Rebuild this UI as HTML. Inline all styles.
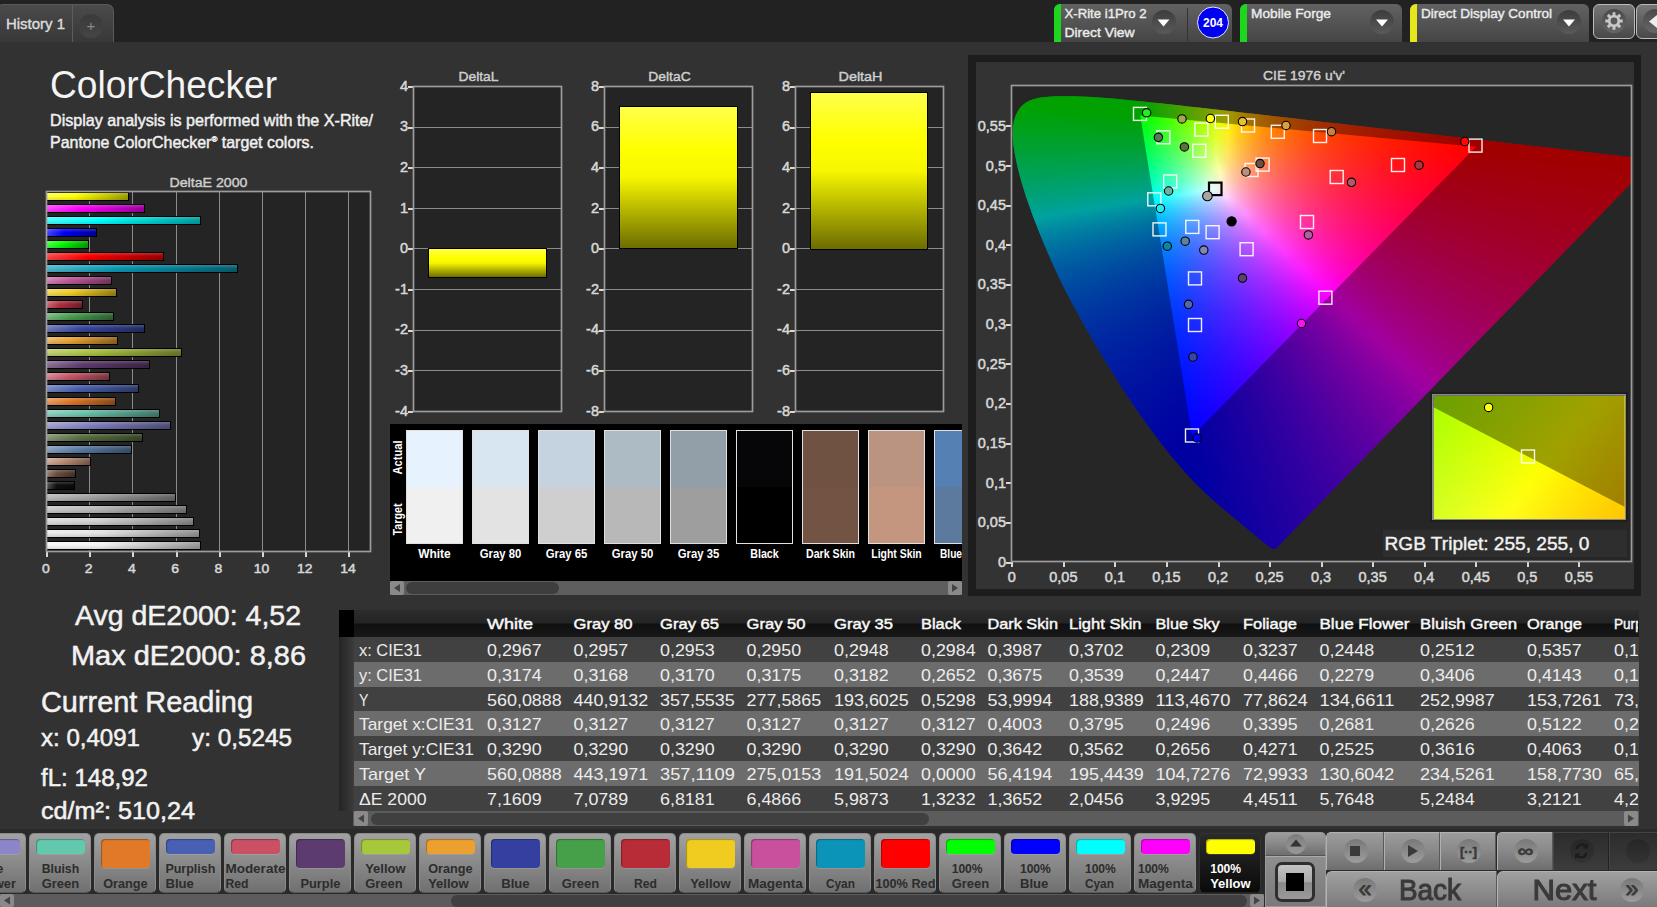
<!DOCTYPE html>
<html><head><meta charset="utf-8"><title>ColorChecker</title>
<style>
html,body{margin:0;padding:0;background:#323232;overflow:hidden}
body{width:1657px;height:907px;position:relative;font-family:"Liberation Sans", sans-serif}
#h div{position:absolute;box-sizing:border-box}
#h{position:absolute;left:0;top:0;width:1657px;height:907px;overflow:hidden}
svg#o{position:absolute;left:0;top:0}
svg text{font-family:"Liberation Sans", sans-serif;white-space:pre}
svg .bl{filter:blur(0.6px)}
</style></head><body>
<div id="h">
<div style="left:0px;top:0px;width:1657px;height:42px;background:#222"></div>
<div style="left:-4px;top:4px;width:118px;height:38px;background:linear-gradient(#4a4a4a,#383838);border:1px solid #5a5a5a;border-bottom:none;border-radius:7px 7px 0 0"></div>
<div style="left:72px;top:5px;width:1px;height:37px;background:#5c5c5c"></div>
<div style="left:79px;top:14px;width:24px;height:24px;border-radius:12px;background:linear-gradient(#3a3a3a,#454545)"></div>
<div style="left:1054px;top:4px;width:178px;height:38px;background:linear-gradient(#626262,#454545);border-radius:6px 6px 0 0"></div>
<div style="left:1054px;top:4px;width:7px;height:38px;background:#1ed61e;border-radius:6px 0 0 0"></div>
<div style="left:1151.5px;top:10px;width:24px;height:24px;border-radius:12px;background:linear-gradient(#3c3c3c,#5a5a5a)"></div>
<div style="left:1187px;top:8px;width:1px;height:34px;background:#333"></div>
<div style="left:1240px;top:4px;width:162px;height:38px;background:linear-gradient(#626262,#454545);border-radius:6px 6px 0 0"></div>
<div style="left:1240px;top:4px;width:7px;height:38px;background:#1ed61e;border-radius:6px 0 0 0"></div>
<div style="left:1370px;top:10px;width:24px;height:24px;border-radius:12px;background:linear-gradient(#3c3c3c,#5a5a5a)"></div>
<div style="left:1410px;top:4px;width:179px;height:38px;background:linear-gradient(#626262,#454545);border-radius:6px 6px 0 0"></div>
<div style="left:1410px;top:4px;width:7px;height:38px;background:#e6e61a;border-radius:6px 0 0 0"></div>
<div style="left:1557px;top:10px;width:24px;height:24px;border-radius:12px;background:linear-gradient(#3c3c3c,#5a5a5a)"></div>
<div style="left:1593px;top:4px;width:42px;height:35px;background:linear-gradient(#777,#484848);border:1px solid #bbb;border-radius:6px"></div>
<div style="left:1602px;top:9px;width:24px;height:24px;border-radius:12px;background:linear-gradient(#4a4a4a,#666)"></div>
<div style="left:1636px;top:4px;width:30px;height:35px;background:linear-gradient(#777,#484848);border:1px solid #bbb;border-radius:6px"></div>
<div style="left:1643px;top:9px;width:24px;height:24px;border-radius:12px;background:linear-gradient(#4a4a4a,#666)"></div>
<div style="left:46px;top:191px;width:325px;height:361px;background:#242424"></div>
<div style="left:89px;top:192px;width:1px;height:359px;background:#8c8c8c"></div>
<div style="left:132px;top:192px;width:1px;height:359px;background:#8c8c8c"></div>
<div style="left:176px;top:192px;width:1px;height:359px;background:#8c8c8c"></div>
<div style="left:219px;top:192px;width:1px;height:359px;background:#8c8c8c"></div>
<div style="left:262px;top:192px;width:1px;height:359px;background:#8c8c8c"></div>
<div style="left:305px;top:192px;width:1px;height:359px;background:#8c8c8c"></div>
<div style="left:348px;top:192px;width:1px;height:359px;background:#8c8c8c"></div>
<div style="left:45.5px;top:552px;width:2px;height:5px;background:#d8d8d8"></div>
<div style="left:88.5px;top:552px;width:2px;height:5px;background:#d8d8d8"></div>
<div style="left:131.5px;top:552px;width:2px;height:5px;background:#d8d8d8"></div>
<div style="left:175.5px;top:552px;width:2px;height:5px;background:#d8d8d8"></div>
<div style="left:218.5px;top:552px;width:2px;height:5px;background:#d8d8d8"></div>
<div style="left:261.5px;top:552px;width:2px;height:5px;background:#d8d8d8"></div>
<div style="left:304.5px;top:552px;width:2px;height:5px;background:#d8d8d8"></div>
<div style="left:347.5px;top:552px;width:2px;height:5px;background:#d8d8d8"></div>
<div style="left:47px;top:192px;width:81.88px;height:9px;border-left:none !important;background:linear-gradient(rgba(255,255,255,.18),rgba(255,255,255,0) 45%,rgba(0,0,0,.12)),linear-gradient(90deg,#ffff47,#ffff00 35%,#9e9e00);border:1px solid #000"></div>
<div style="left:47px;top:204.03px;width:97.864px;height:9px;border-left:none !important;background:linear-gradient(rgba(255,255,255,.18),rgba(255,255,255,0) 45%,rgba(0,0,0,.12)),linear-gradient(90deg,#ff47ff,#ff00ff 35%,#9e009e);border:1px solid #000"></div>
<div style="left:47px;top:216.06px;width:153.808px;height:9px;border-left:none !important;background:linear-gradient(rgba(255,255,255,.18),rgba(255,255,255,0) 45%,rgba(0,0,0,.12)),linear-gradient(90deg,#47ffff,#00ffff 35%,#009e9e);border:1px solid #000"></div>
<div style="left:47px;top:228.09px;width:49.912px;height:9px;border-left:none !important;background:linear-gradient(rgba(255,255,255,.18),rgba(255,255,255,0) 45%,rgba(0,0,0,.12)),linear-gradient(90deg,#4747ff,#0000ff 35%,#00009e);border:1px solid #000"></div>
<div style="left:47px;top:240.12px;width:41.92px;height:9px;border-left:none !important;background:linear-gradient(rgba(255,255,255,.18),rgba(255,255,255,0) 45%,rgba(0,0,0,.12)),linear-gradient(90deg,#47ff47,#00ff00 35%,#009e00);border:1px solid #000"></div>
<div style="left:47px;top:252.15px;width:117.304px;height:9px;border-left:none !important;background:linear-gradient(rgba(255,255,255,.18),rgba(255,255,255,0) 45%,rgba(0,0,0,.12)),linear-gradient(90deg,#ff4747,#ff0000 35%,#9e0000);border:1px solid #000"></div>
<div style="left:47px;top:264.18px;width:191.176px;height:9px;border-left:none !important;background:linear-gradient(rgba(255,255,255,.18),rgba(255,255,255,0) 45%,rgba(0,0,0,.12)),linear-gradient(90deg,#4fb7cc,#0a9bb8 35%,#066072);border:1px solid #000"></div>
<div style="left:47px;top:276.21px;width:64.6px;height:9px;border-left:none !important;background:linear-gradient(rgba(255,255,255,.18),rgba(255,255,255,0) 45%,rgba(0,0,0,.12)),linear-gradient(90deg,#d285b8,#c0569c 35%,#773561);border:1px solid #000"></div>
<div style="left:47px;top:288.24px;width:70px;height:9px;border-left:none !important;background:linear-gradient(rgba(255,255,255,.18),rgba(255,255,255,0) 45%,rgba(0,0,0,.12)),linear-gradient(90deg,#f4db61,#f0cd24 35%,#957f16);border:1px solid #000"></div>
<div style="left:47px;top:300.27px;width:36.304px;height:9px;border-left:none !important;background:linear-gradient(rgba(255,255,255,.18),rgba(255,255,255,0) 45%,rgba(0,0,0,.12)),linear-gradient(90deg,#cc6a75,#b83040 35%,#721e28);border:1px solid #000"></div>
<div style="left:47px;top:312.3px;width:66.76px;height:9px;border-left:none !important;background:linear-gradient(rgba(255,255,255,.18),rgba(255,255,255,0) 45%,rgba(0,0,0,.12)),linear-gradient(90deg,#7bbb81,#48a050 35%,#2d6332);border:1px solid #000"></div>
<div style="left:47px;top:324.33px;width:97.864px;height:9px;border-left:none !important;background:linear-gradient(rgba(255,255,255,.18),rgba(255,255,255,0) 45%,rgba(0,0,0,.12)),linear-gradient(90deg,#707bbb,#3848a0 35%,#232d63);border:1px solid #000"></div>
<div style="left:47px;top:336.36px;width:70.864px;height:9px;border-left:none !important;background:linear-gradient(rgba(255,255,255,.18),rgba(255,255,255,0) 45%,rgba(0,0,0,.12)),linear-gradient(90deg,#eebb6a,#e8a030 35%,#90631e);border:1px solid #000"></div>
<div style="left:47px;top:348.39px;width:134.8px;height:9px;border-left:none !important;background:linear-gradient(rgba(255,255,255,.18),rgba(255,255,255,0) 45%,rgba(0,0,0,.12)),linear-gradient(90deg,#c0d275,#a8c040 35%,#687728);border:1px solid #000"></div>
<div style="left:47px;top:360.42px;width:103.48px;height:9px;border-left:none !important;background:linear-gradient(rgba(255,255,255,.18),rgba(255,255,255,0) 45%,rgba(0,0,0,.12)),linear-gradient(90deg,#8d7398,#603c70 35%,#3c2545);border:1px solid #000"></div>
<div style="left:47px;top:372.45px;width:63.304px;height:9px;border-left:none !important;background:linear-gradient(rgba(255,255,255,.18),rgba(255,255,255,0) 45%,rgba(0,0,0,.12)),linear-gradient(90deg,#d78792,#c85868 35%,#7c3740);border:1px solid #000"></div>
<div style="left:47px;top:384.48px;width:92.464px;height:9px;border-left:none !important;background:linear-gradient(rgba(255,255,255,.18),rgba(255,255,255,0) 45%,rgba(0,0,0,.12)),linear-gradient(90deg,#7b8dc6,#4860b0 35%,#2d3c6d);border:1px solid #000"></div>
<div style="left:47px;top:396.51px;width:69.136px;height:9px;border-left:none !important;background:linear-gradient(rgba(255,255,255,.18),rgba(255,255,255,0) 45%,rgba(0,0,0,.12)),linear-gradient(90deg,#e99e64,#e07828 35%,#8b4a19);border:1px solid #000"></div>
<div style="left:47px;top:408.54px;width:113.2px;height:9px;border-left:none !important;background:linear-gradient(rgba(255,255,255,.18),rgba(255,255,255,0) 45%,rgba(0,0,0,.12)),linear-gradient(90deg,#92d2c0,#68c0a8 35%,#407768);border:1px solid #000"></div>
<div style="left:47px;top:420.57px;width:124.216px;height:9px;border-left:none !important;background:linear-gradient(rgba(255,255,255,.18),rgba(255,255,255,0) 45%,rgba(0,0,0,.12)),linear-gradient(90deg,#a4a4d2,#8080c0 35%,#4f4f77);border:1px solid #000"></div>
<div style="left:47px;top:432.6px;width:95.92px;height:9px;border-left:none !important;background:linear-gradient(rgba(255,255,255,.18),rgba(255,255,255,0) 45%,rgba(0,0,0,.12)),linear-gradient(90deg,#879875,#587040 35%,#374528);border:1px solid #000"></div>
<div style="left:47px;top:444.63px;width:84.688px;height:9px;border-left:none !important;background:linear-gradient(rgba(255,255,255,.18),rgba(255,255,255,0) 45%,rgba(0,0,0,.12)),linear-gradient(90deg,#8aa4c0,#5c80a8 35%,#394f68);border:1px solid #000"></div>
<div style="left:47px;top:456.66px;width:44.08px;height:9px;border-left:none !important;background:linear-gradient(rgba(255,255,255,.18),rgba(255,255,255,0) 45%,rgba(0,0,0,.12)),linear-gradient(90deg,#d2af9e,#c09078 35%,#77594a);border:1px solid #000"></div>
<div style="left:47px;top:468.69px;width:29.392px;height:9px;border-left:none !important;background:linear-gradient(rgba(255,255,255,.18),rgba(255,255,255,0) 45%,rgba(0,0,0,.12)),linear-gradient(90deg,#988175,#705040 35%,#453228);border:1px solid #000"></div>
<div style="left:47px;top:480.72px;width:28.312px;height:9px;border-left:none !important;background:linear-gradient(rgba(255,255,255,.18),rgba(255,255,255,0) 45%,rgba(0,0,0,.12)),linear-gradient(90deg,#535353,#101010 35%,#0a0a0a);border:1px solid #000"></div>
<div style="left:47px;top:492.75px;width:129.184px;height:9px;border-left:none !important;background:linear-gradient(rgba(255,255,255,.18),rgba(255,255,255,0) 45%,rgba(0,0,0,.12)),linear-gradient(90deg,#bbbbbb,#a0a0a0 35%,#636363);border:1px solid #000"></div>
<div style="left:47px;top:504.78px;width:139.984px;height:9px;border-left:none !important;background:linear-gradient(rgba(255,255,255,.18),rgba(255,255,255,0) 45%,rgba(0,0,0,.12)),linear-gradient(90deg,#cccccc,#b8b8b8 35%,#727272);border:1px solid #000"></div>
<div style="left:47px;top:516.81px;width:147.112px;height:9px;border-left:none !important;background:linear-gradient(rgba(255,255,255,.18),rgba(255,255,255,0) 45%,rgba(0,0,0,.12)),linear-gradient(90deg,#dddddd,#d0d0d0 35%,#818181);border:1px solid #000"></div>
<div style="left:47px;top:528.84px;width:152.728px;height:9px;border-left:none !important;background:linear-gradient(rgba(255,255,255,.18),rgba(255,255,255,0) 45%,rgba(0,0,0,.12)),linear-gradient(90deg,#ececec,#e4e4e4 35%,#8d8d8d);border:1px solid #000"></div>
<div style="left:47px;top:540.87px;width:154.456px;height:9px;border-left:none !important;background:linear-gradient(rgba(255,255,255,.18),rgba(255,255,255,0) 45%,rgba(0,0,0,.12)),linear-gradient(90deg,#f7f7f7,#f4f4f4 35%,#979797);border:1px solid #000"></div>
<div style="left:413px;top:86px;width:149px;height:326px;background:#242424"></div>
<div style="left:408px;top:85.5px;width:5px;height:2px;background:#d8d8d8"></div>
<div style="left:414px;top:127px;width:147px;height:1px;background:#8c8c8c"></div>
<div style="left:408px;top:126.5px;width:5px;height:2px;background:#d8d8d8"></div>
<div style="left:414px;top:167px;width:147px;height:1px;background:#8c8c8c"></div>
<div style="left:408px;top:166.5px;width:5px;height:2px;background:#d8d8d8"></div>
<div style="left:414px;top:208px;width:147px;height:1px;background:#8c8c8c"></div>
<div style="left:408px;top:207.5px;width:5px;height:2px;background:#d8d8d8"></div>
<div style="left:414px;top:248px;width:147px;height:1px;background:#8c8c8c"></div>
<div style="left:408px;top:247.5px;width:5px;height:2px;background:#d8d8d8"></div>
<div style="left:414px;top:289px;width:147px;height:1px;background:#8c8c8c"></div>
<div style="left:408px;top:288.5px;width:5px;height:2px;background:#d8d8d8"></div>
<div style="left:414px;top:330px;width:147px;height:1px;background:#8c8c8c"></div>
<div style="left:408px;top:329.5px;width:5px;height:2px;background:#d8d8d8"></div>
<div style="left:414px;top:370px;width:147px;height:1px;background:#8c8c8c"></div>
<div style="left:408px;top:369.5px;width:5px;height:2px;background:#d8d8d8"></div>
<div style="left:408px;top:410.5px;width:5px;height:2px;background:#d8d8d8"></div>
<div style="left:427.5px;top:247.5px;width:119px;height:30.4375px;background:linear-gradient(#ffff4a,#ffff00 30%,#f6f600 50%,#6c6c00);border:1.5px solid #000"></div>
<div style="left:604px;top:86px;width:149px;height:326px;background:#242424"></div>
<div style="left:599px;top:85.5px;width:5px;height:2px;background:#d8d8d8"></div>
<div style="left:605px;top:127px;width:147px;height:1px;background:#8c8c8c"></div>
<div style="left:599px;top:126.5px;width:5px;height:2px;background:#d8d8d8"></div>
<div style="left:605px;top:167px;width:147px;height:1px;background:#8c8c8c"></div>
<div style="left:599px;top:166.5px;width:5px;height:2px;background:#d8d8d8"></div>
<div style="left:605px;top:208px;width:147px;height:1px;background:#8c8c8c"></div>
<div style="left:599px;top:207.5px;width:5px;height:2px;background:#d8d8d8"></div>
<div style="left:605px;top:248px;width:147px;height:1px;background:#8c8c8c"></div>
<div style="left:599px;top:247.5px;width:5px;height:2px;background:#d8d8d8"></div>
<div style="left:605px;top:289px;width:147px;height:1px;background:#8c8c8c"></div>
<div style="left:599px;top:288.5px;width:5px;height:2px;background:#d8d8d8"></div>
<div style="left:605px;top:330px;width:147px;height:1px;background:#8c8c8c"></div>
<div style="left:599px;top:329.5px;width:5px;height:2px;background:#d8d8d8"></div>
<div style="left:605px;top:370px;width:147px;height:1px;background:#8c8c8c"></div>
<div style="left:599px;top:369.5px;width:5px;height:2px;background:#d8d8d8"></div>
<div style="left:599px;top:410.5px;width:5px;height:2px;background:#d8d8d8"></div>
<div style="left:618.5px;top:105.922px;width:119px;height:143.578px;background:linear-gradient(#ffff4a,#ffff00 30%,#f6f600 50%,#6c6c00);border:1.5px solid #000"></div>
<div style="left:795px;top:86px;width:149px;height:326px;background:#242424"></div>
<div style="left:790px;top:85.5px;width:5px;height:2px;background:#d8d8d8"></div>
<div style="left:796px;top:127px;width:147px;height:1px;background:#8c8c8c"></div>
<div style="left:790px;top:126.5px;width:5px;height:2px;background:#d8d8d8"></div>
<div style="left:796px;top:167px;width:147px;height:1px;background:#8c8c8c"></div>
<div style="left:790px;top:166.5px;width:5px;height:2px;background:#d8d8d8"></div>
<div style="left:796px;top:208px;width:147px;height:1px;background:#8c8c8c"></div>
<div style="left:790px;top:207.5px;width:5px;height:2px;background:#d8d8d8"></div>
<div style="left:796px;top:248px;width:147px;height:1px;background:#8c8c8c"></div>
<div style="left:790px;top:247.5px;width:5px;height:2px;background:#d8d8d8"></div>
<div style="left:796px;top:289px;width:147px;height:1px;background:#8c8c8c"></div>
<div style="left:790px;top:288.5px;width:5px;height:2px;background:#d8d8d8"></div>
<div style="left:796px;top:330px;width:147px;height:1px;background:#8c8c8c"></div>
<div style="left:790px;top:329.5px;width:5px;height:2px;background:#d8d8d8"></div>
<div style="left:796px;top:370px;width:147px;height:1px;background:#8c8c8c"></div>
<div style="left:790px;top:369.5px;width:5px;height:2px;background:#d8d8d8"></div>
<div style="left:790px;top:410.5px;width:5px;height:2px;background:#d8d8d8"></div>
<div style="left:809.5px;top:91.5px;width:118.5px;height:158px;background:linear-gradient(#ffff4a,#ffff00 30%,#f6f600 50%,#6c6c00);border:1.5px solid #000"></div>
<div style="left:390px;top:424px;width:572px;height:171px;background:#000"></div>
<div style="left:390px;top:424px;width:572px;height:171px;overflow:hidden;background:none"></div>
<div style="left:406px;top:430px;width:57px;height:114px;border:1px solid #e0e0e0;background:linear-gradient(#e6f2fd 50%,#f0f0f0 50%)"></div>
<div style="left:472px;top:430px;width:57px;height:114px;border:1px solid #e0e0e0;background:linear-gradient(#d8e6f2 50%,#e3e3e3 50%)"></div>
<div style="left:538px;top:430px;width:57px;height:114px;border:1px solid #e0e0e0;background:linear-gradient(#c4d3df 50%,#cfcfcf 50%)"></div>
<div style="left:604px;top:430px;width:57px;height:114px;border:1px solid #e0e0e0;background:linear-gradient(#adbbc5 50%,#b8b8b8 50%)"></div>
<div style="left:670px;top:430px;width:57px;height:114px;border:1px solid #e0e0e0;background:linear-gradient(#929fa8 50%,#9e9e9e 50%)"></div>
<div style="left:736px;top:430px;width:57px;height:114px;border:1px solid #e0e0e0;background:linear-gradient(#060608 50%,#000000 50%)"></div>
<div style="left:802px;top:430px;width:57px;height:114px;border:1px solid #e0e0e0;background:linear-gradient(#6f5242 50%,#735444 50%)"></div>
<div style="left:868px;top:430px;width:57px;height:114px;border:1px solid #e0e0e0;background:linear-gradient(#bb9481 50%,#c4957f 50%)"></div>
<div style="left:934px;top:430px;width:28px;height:114px;border:1px solid #e0e0e0;border-right:none;background:linear-gradient(#5580b4 50%,#5c7a9e 50%)"></div>
<div style="left:390px;top:581px;width:572px;height:14px;background:#5e5e5e"></div>
<div style="left:406px;top:582px;width:153px;height:12px;background:#3e3e3e;border-radius:6px"></div>
<div style="left:390px;top:581px;width:14px;height:14px;background:#8a8a8a;border-radius:2px"></div>
<div style="left:948px;top:581px;width:14px;height:14px;background:#8a8a8a;border-radius:2px"></div>
<div style="left:968px;top:55px;width:673px;height:541px;background:#1d1d1d"></div>
<div style="left:976px;top:62px;width:658px;height:527px;background:#333"></div>
<div style="left:1011px;top:85px;width:621px;height:477px;background:#262626"></div>
<div style="left:1012px;top:86px;width:619px;height:475px;overflow:hidden"><div style="left:0;top:0;width:100%;height:100%;clip-path:polygon(264.1px 462.4px,264.0px 462.4px,264.0px 462.4px,263.9px 462.4px,263.8px 462.5px,263.7px 462.6px,263.5px 462.5px,263.3px 462.5px,263.2px 462.6px,263.1px 462.8px,263.0px 462.9px,262.8px 462.9px,262.6px 462.9px,262.3px 462.9px,262.0px 462.9px,261.7px 462.9px,261.4px 462.9px,261.0px 462.8px,260.6px 462.7px,260.1px 462.5px,259.3px 462.1px,258.4px 461.5px,257.3px 460.8px,256.0px 459.9px,254.6px 458.8px,253.0px 457.6px,251.1px 456.1px,249.0px 454.4px,246.7px 452.4px,244.1px 450.2px,241.3px 447.8px,238.2px 445.3px,234.8px 442.4px,231.0px 439.3px,226.8px 435.7px,222.1px 431.9px,217.1px 427.8px,211.7px 423.3px,205.9px 418.3px,199.6px 412.7px,192.8px 406.4px,185.6px 399.5px,177.8px 391.4px,169.0px 381.6px,158.9px 369.7px,147.9px 355.8px,136.2px 340.1px,123.9px 322.8px,111.1px 303.5px,97.9px 282.7px,84.7px 260.7px,71.6px 238.2px,59.0px 215.2px,47.4px 192.4px,37.3px 170.2px,28.3px 149.1px,20.6px 129.3px,14.2px 111.2px,9.2px 95.1px,5.5px 81.0px,2.9px 68.6px,1.3px 58.0px,0.7px 48.8px,1.0px 41.0px,2.1px 34.2px,4.1px 28.4px,6.8px 23.5px,10.1px 19.6px,14.0px 16.5px,18.4px 14.3px,23.1px 12.7px,28.2px 11.6px,33.6px 10.9px,39.3px 10.5px,45.1px 10.3px,50.9px 10.2px,56.8px 10.2px,62.6px 10.3px,68.6px 10.5px,74.7px 10.8px,81.0px 11.1px,87.4px 11.5px,94.1px 12.0px,101.0px 12.6px,108.1px 13.2px,115.5px 13.9px,123.2px 14.7px,131.2px 15.5px,139.5px 16.4px,148.1px 17.3px,157.2px 18.3px,166.6px 19.3px,176.3px 20.4px,186.5px 21.5px,197.1px 22.7px,208.2px 24.0px,219.6px 25.3px,231.5px 26.7px,243.8px 28.1px,256.6px 29.6px,269.8px 31.1px,283.3px 32.6px,297.3px 34.2px,311.6px 35.9px,326.2px 37.5px,341.1px 39.3px,356.1px 41.0px,371.3px 42.7px,386.2px 44.5px,400.8px 46.1px,415.3px 47.8px,429.8px 49.5px,444.0px 51.1px,457.6px 52.7px,470.6px 54.1px,483.0px 55.6px,494.8px 56.9px,506.0px 58.2px,516.6px 59.4px,526.4px 60.6px,535.6px 61.6px,544.2px 62.6px,552.2px 63.5px,559.6px 64.4px,566.5px 65.2px,573.0px 65.9px,579.2px 66.6px,585.1px 67.3px,590.6px 67.9px,595.7px 68.5px,600.4px 69.1px,604.8px 69.6px,608.8px 70.0px,612.4px 70.4px,615.6px 70.8px,618.4px 71.1px,621.0px 71.4px,623.4px 71.7px,625.5px 71.9px,627.4px 72.2px,629.0px 72.4px,630.4px 72.5px,631.5px 72.6px,632.6px 72.8px,633.6px 72.9px,634.5px 73.0px,635.4px 73.1px,636.2px 73.2px,636.9px 73.3px,637.7px 73.4px,638.5px 73.4px,639.2px 73.5px,639.9px 73.6px,640.5px 73.7px,640.9px 73.7px,641.2px 73.8px,641.4px 73.8px,641.6px 73.8px,641.8px 73.8px,641.9px 73.8px,642.0px 73.8px)"><div style="left:24px;top:10px;width:72px;height:2px;background:linear-gradient(90deg,#0f0 0px,#0f0 12px,#0f0 24px,#0f0 36px,#0f0 48px,#0f0 60px,#0f0 72px)"></div><div style="left:17px;top:12px;width:102px;height:2px;background:linear-gradient(90deg,#0f0 0px,#0f0 12px,#0f0 24px,#0f0 36px,#0f0 48px,#0f0 60px,#0f0 72px,#0f0 84px,#0f0 96px,#0f0 102px)"></div><div style="left:13px;top:14px;width:126px;height:2px;background:linear-gradient(90deg,#0f0 0px,#0f0 12px,#0f0 24px,#0f0 36px,#0f0 48px,#0f0 60px,#0f0 72px,#0f0 84px,#0f0 96px,#0f0 108px,#10ff00 120px,#1eff00 126px)"></div><div style="left:10px;top:16px;width:147px;height:2px;background:linear-gradient(90deg,#0f0 0px,#0f0 12px,#0f0 24px,#0f0 36px,#0f0 48px,#0f0 60px,#0f0 72px,#0f0 84px,#0f0 96px,#0f0 108px,#09ff00 120px,#24ff00 132px,#42ff00 144px,#4aff00 147px)"></div><div style="left:7px;top:18px;width:168px;height:2px;background:linear-gradient(90deg,#00ff02 0px,#0f0 12px,#0f0 24px,#0f0 36px,#0f0 48px,#0f0 60px,#0f0 72px,#0f0 84px,#0f0 96px,#0f0 108px,#01ff00 120px,#1dff00 132px,#3aff00 144px,#5aff00 156px,#7bff00 168px)"></div><div style="left:6px;top:20px;width:187px;height:2px;background:linear-gradient(90deg,#00ff05 0px,#00ff03 12px,#00ff01 24px,#0f0 36px,#0f0 48px,#0f0 60px,#0f0 72px,#0f0 84px,#0f0 96px,#0f0 108px,#0f0 120px,#1aff00 132px,#37ff00 144px,#57ff00 156px,#78ff00 168px,#9dff00 180px,#b3ff00 187px)"></div><div style="left:4px;top:22px;width:207px;height:2px;background:linear-gradient(90deg,#00ff09 0px,#00ff07 12px,#00ff05 24px,#00ff03 36px,#00ff01 48px,#0f0 60px,#0f0 72px,#0f0 84px,#0f0 96px,#0f0 108px,#0f0 120px,#14ff00 132px,#32ff00 144px,#51ff00 156px,#72ff00 168px,#96ff00 180px,#bdff00 192px,#e7ff00 204px,#f2ff00 207px)"></div><div style="left:3px;top:24px;width:225px;height:2px;background:linear-gradient(90deg,#00ff0c 0px,#00ff0b 12px,#00ff09 24px,#00ff07 36px,#00ff05 48px,#00ff03 60px,#00ff01 72px,#0f0 84px,#0f0 96px,#0f0 108px,#0f0 120px,#1f0 132px,#2fff00 144px,#4eff00 156px,#6fff00 168px,#93ff00 180px,#baff00 192px,#e4ff00 204px,#ffed00 216px,#ffd100 225px)"></div><div style="left:2px;top:26px;width:244px;height:2px;background:linear-gradient(90deg,#00ff10 0px,#00ff0e 12px,#00ff0d 24px,#00ff0b 36px,#00ff09 48px,#00ff07 60px,#00ff05 72px,#00ff03 84px,#00ff01 96px,#0f0 108px,#0f0 120px,#0eff00 132px,#2bff00 144px,#4bff00 156px,#6cff00 168px,#90ff00 180px,#b7ff00 192px,#e1ff00 204px,#fff000 216px,#ffcb00 228px,#ffad00 240px,#ffa500 244px)"></div><div style="left:1px;top:28px;width:262px;height:2px;background:linear-gradient(90deg,#00ff13 0px,#00ff12 12px,#00ff10 24px,#00ff0f 36px,#00ff0d 48px,#00ff0b 60px,#00ff09 72px,#00ff07 84px,#00ff05 96px,#00ff03 108px,#00ff01 120px,#0bff00 132px,#28ff00 144px,#48ff00 156px,#69ff00 168px,#8dff00 180px,#b4ff00 192px,#deff00 204px,#fff300 216px,#ffcd00 228px,#ffaf00 240px,#ff9600 252px,#ff8600 262px)"></div><div style="left:0px;top:30px;width:280px;height:2px;background:linear-gradient(90deg,#00ff17 0px,#00ff16 12px,#00ff14 24px,#00ff13 36px,#0f1 48px,#00ff0f 60px,#00ff0e 72px,#00ff0c 84px,#00ff0a 96px,#00ff07 108px,#00ff05 120px,#00ff04 128px,#28ff00 145px,#45ff00 156px,#6f0 168px,#8aff00 180px,#b1ff00 192px,#dbff00 204px,#fff600 216px,#ffcf00 228px,#ffb000 240px,#ff9700 252px,#ff8300 264px,#ff7200 276px,#ff6d00 280px)"></div><div style="left:0px;top:32px;width:298px;height:2px;background:linear-gradient(90deg,#00ff1a 0px,#00ff19 12px,#00ff18 24px,#00ff16 36px,#00ff15 48px,#00ff13 60px,#00ff12 72px,#00ff10 84px,#00ff0e 96px,#00ff0c 108px,#00ff0a 120px,#00ff08 129px,#25ff05 144px,#44ff02 156px,#61ff00 166px,#8aff00 180px,#b1ff00 192px,#dcff00 204px,#fff500 216px,#ffce00 228px,#ffaf00 240px,#ff9700 252px,#ff8200 264px,#ff7100 276px,#ff6300 288px,#ff5900 298px)"></div><div style="left:0px;top:34px;width:315px;height:2px;background:linear-gradient(90deg,#00ff1e 0px,#00ff1d 12px,#00ff1c 24px,#00ff1a 36px,#00ff19 48px,#00ff17 60px,#00ff16 72px,#00ff14 84px,#00ff12 96px,#00ff10 108px,#00ff0e 120px,#00ff0d 129px,#24ff0a 144px,#44ff07 156px,#66ff05 168px,#8aff02 180px,#a3ff00 188px,#b1ff00 192px,#dcff00 204px,#fff400 216px,#ffcd00 228px,#ffae00 240px,#ff9600 252px,#ff8200 264px,#ff7100 276px,#ff6200 288px,#ff5600 300px,#ff4b00 312px,#ff4900 315px)"></div><div style="left:0px;top:36px;width:333px;height:2px;background:linear-gradient(90deg,#0f2 0px,#00ff20 12px,#00ff1f 24px,#00ff1e 36px,#00ff1d 48px,#00ff1b 60px,#00ff1a 72px,#00ff18 84px,#00ff17 96px,#00ff15 108px,#00ff13 120px,#0f1 129px,#24ff0f 144px,#43ff0d 156px,#65ff0a 168px,#8aff07 180px,#b2ff05 192px,#ddff01 204px,#f0ff00 209px,#fff300 216px,#fc0 228px,#ffad00 240px,#ff9500 252px,#ff8100 264px,#ff7000 276px,#ff6100 288px,#f50 300px,#ff4a00 312px,#ff4100 324px,#ff3b00 333px)"></div><div style="left:0px;top:38px;width:350px;height:2px;background:linear-gradient(90deg,#00ff25 0px,#00ff24 12px,#00ff23 24px,#0f2 36px,#00ff21 48px,#00ff1f 60px,#00ff1e 72px,#00ff1d 84px,#00ff1b 96px,#00ff19 108px,#00ff18 120px,#00ff16 130px,#23ff14 144px,#43ff12 156px,#65ff0f 168px,#8aff0d 180px,#b2ff0a 192px,#ddff07 204px,#fff204 216px,#ffc400 230px,#ffad00 240px,#ff9400 252px,#ff8000 264px,#ff6f00 276px,#ff6100 288px,#ff5400 300px,#ff4a00 312px,#ff4000 324px,#ff3800 336px,#ff3100 348px,#ff3000 350px)"></div><div style="left:0px;top:40px;width:367px;height:2px;background:linear-gradient(90deg,#00ff29 0px,#00ff28 12px,#00ff27 24px,#00ff26 36px,#00ff25 48px,#00ff23 60px,#0f2 72px,#00ff21 84px,#00ff1f 96px,#00ff1e 108px,#00ff1c 120px,#00ff1b 130px,#22ff19 144px,#42ff17 156px,#65ff15 168px,#8aff13 180px,#b2ff10 192px,#deff0d 204px,#fff10a 216px,#ffca06 228px,#ffac03 240px,#ff9400 252px,#ff7f00 264px,#ff6e00 276px,#ff6000 288px,#ff5400 300px,#ff4900 312px,#ff4000 324px,#ff3800 336px,#ff3000 348px,#ff2a00 360px,#ff2600 367px)"></div><div style="left:0px;top:42px;width:385px;height:2px;background:linear-gradient(90deg,#00ff2c 0px,#00ff2c 12px,#00ff2b 24px,#00ff2a 36px,#00ff29 48px,#00ff28 60px,#00ff26 72px,#00ff25 84px,#00ff24 96px,#00ff23 108px,#00ff21 120px,#00ff20 130px,#22ff1e 144px,#42ff1c 156px,#65ff1a 168px,#8aff18 180px,#b2ff16 192px,#deff14 204px,#fff010 216px,#ffc90b 228px,#ffab07 240px,#ff9204 252px,#ff7e02 264px,#ff7100 273px,#ff5f00 288px,#ff5300 300px,#ff4800 312px,#ff3f00 324px,#ff3700 336px,#ff3000 348px,#ff2900 360px,#ff2300 372px,#ff1e00 384px,#ff1d00 385px)"></div><div style="left:0px;top:44px;width:402px;height:2px;background:linear-gradient(90deg,#00ff30 0px,#00ff2f 12px,#00ff2e 24px,#00ff2e 36px,#00ff2d 48px,#00ff2c 60px,#00ff2b 72px,#00ff2a 84px,#00ff29 96px,#00ff27 108px,#00ff26 120px,#00ff25 131px,#21ff23 144px,#42ff22 156px,#64ff20 168px,#8aff1e 180px,#b3ff1c 192px,#dfff1a 204px,#fff016 216px,#ffc810 228px,#ffaa0c 240px,#ff9108 252px,#ff7d05 264px,#ff6d03 276px,#ff5e01 288px,#ff5800 295px,#ff5200 300px,#ff4800 312px,#ff3e00 324px,#ff3600 336px,#ff2f00 348px,#ff2800 360px,#ff2300 372px,#ff1d00 384px,#ff1800 396px,#ff1600 402px)"></div><div style="left:0px;top:46px;width:420px;height:2px;background:linear-gradient(90deg,#00ff34 0px,#0f3 12px,#00ff32 24px,#00ff32 36px,#00ff31 48px,#00ff30 60px,#00ff2f 72px,#00ff2e 84px,#00ff2d 96px,#00ff2c 108px,#00ff2b 120px,#00ff2a 131px,#21ff28 144px,#41ff27 156px,#64ff25 168px,#8aff24 180px,#b3ff22 192px,#e0ff20 204px,#ffef1c 216px,#ffc816 228px,#ffa911 240px,#ff910d 252px,#ff7d09 264px,#ff6c07 276px,#ff5e04 288px,#ff5102 300px,#f40 316px,#ff3e00 324px,#ff3600 336px,#ff2e00 348px,#ff2800 360px,#f20 372px,#ff1d00 384px,#ff1800 396px,#ff1300 408px,#ff0f00 420px)"></div><div style="left:0px;top:48px;width:437px;height:2px;background:linear-gradient(90deg,#00ff38 0px,#00ff37 12px,#00ff36 24px,#00ff36 36px,#00ff35 48px,#00ff34 60px,#0f3 72px,#0f3 84px,#00ff32 96px,#00ff31 108px,#00ff30 120px,#00ff2f 131px,#20ff2e 144px,#41ff2c 156px,#64ff2b 168px,#8aff2a 180px,#b3ff28 192px,#e0ff26 204px,#fe2 216px,#ffc71b 228px,#ffa815 240px,#ff9011 252px,#ff7c0d 264px,#ff6b0a 276px,#ff5d07 288px,#ff5105 300px,#ff4603 312px,#ff3d02 324px,#ff3400 337px,#ff2e00 348px,#ff2700 360px,#ff2100 372px,#ff1c00 384px,#ff1700 396px,#ff1300 408px,#ff0f00 420px,#ff0b00 432px,#ff0a00 437px)"></div><div style="left:0px;top:50px;width:454px;height:2px;background:linear-gradient(90deg,#00ff3b 0px,#00ff3b 12px,#00ff3a 24px,#00ff3a 36px,#00ff39 48px,#00ff39 60px,#00ff38 72px,#00ff37 84px,#00ff36 96px,#00ff36 108px,#00ff35 120px,#00ff34 132px,#1fff33 144px,#40ff32 156px,#64ff31 168px,#8aff30 180px,#b4ff2e 192px,#e1ff2d 204px,#ffed28 216px,#ffc620 228px,#ffa71a 240px,#ff8f15 252px,#ff7b11 264px,#ff6a0e 276px,#ff5c0b 288px,#ff5008 300px,#ff4606 312px,#ff3c04 324px,#ff3403 336px,#ff2d01 348px,#ff2700 359px,#ff2100 372px,#ff1c00 384px,#ff1700 396px,#ff1200 408px,#ff0e00 420px,#ff0b00 432px,#ff0700 444px,#ff0500 454px)"></div><div style="left:0px;top:52px;width:472px;height:2px;background:linear-gradient(90deg,#00ff3f 0px,#00ff3f 12px,#00ff3e 24px,#00ff3e 36px,#00ff3d 48px,#00ff3d 60px,#00ff3c 72px,#00ff3c 84px,#00ff3b 96px,#00ff3b 108px,#00ff3a 120px,#00ff39 132px,#1fff38 144px,#40ff38 156px,#63ff37 168px,#8aff36 180px,#b4ff35 192px,#e2ff33 204px,#ffec2f 216px,#ffc526 228px,#ffa61f 240px,#ff8e19 252px,#ff7a15 264px,#ff6911 276px,#ff5b0e 288px,#ff4f0b 300px,#ff4509 312px,#ff3c07 324px,#ff3405 336px,#ff2c04 348px,#ff2602 360px,#ff2001 372px,#ff1d00 380px,#ff1600 396px,#ff1200 408px,#ff0e00 420px,#ff0a00 432px,#ff0700 444px,#ff0400 456px,#ff0100 468px,#f00 472px)"></div><div style="left:0px;top:54px;width:489px;height:2px;background:linear-gradient(90deg,#00ff43 0px,#00ff43 12px,#00ff42 24px,#00ff42 36px,#00ff42 48px,#00ff41 60px,#00ff41 72px,#00ff40 84px,#00ff40 96px,#00ff40 108px,#00ff3f 120px,#00ff3e 132px,#1eff3e 144px,#3fff3d 156px,#63ff3d 168px,#8aff3c 180px,#b4ff3b 192px,#e2ff3a 204px,#ffeb35 216px,#ffc42b 228px,#ffa524 240px,#ff8d1e 252px,#ff7919 264px,#ff6915 276px,#ff5b11 288px,#ff4e0e 300px,#ff440c 312px,#ff3b0a 324px,#ff3308 336px,#ff2c06 348px,#ff2504 360px,#ff2003 372px,#ff1a02 384px,#ff1600 396px,#ff1400 402px,#f10 408px,#ff0d00 420px,#ff0a00 432px,#ff0600 444px,#ff0300 456px,#f00 468px,#f00 480px,#f00 489px)"></div><div style="left:0px;top:56px;width:507px;height:2px;background:linear-gradient(90deg,#00ff47 0px,#00ff47 12px,#00ff46 24px,#00ff46 36px,#00ff46 48px,#00ff46 60px,#00ff45 72px,#00ff45 84px,#00ff45 96px,#00ff45 108px,#0f4 120px,#0f4 133px,#1dff43 144px,#3fff43 156px,#63ff43 168px,#8aff42 180px,#b4ff42 192px,#e3ff41 204px,#ffea3b 216px,#ffc331 228px,#ffa529 240px,#ff8c22 252px,#ff781d 264px,#ff6818 276px,#ff5a15 288px,#ff4e11 300px,#ff430f 312px,#ff3a0c 324px,#ff320a 336px,#ff2b08 348px,#ff2507 360px,#ff1f05 372px,#ff1a04 384px,#ff1502 396px,#ff1101 408px,#ff0c00 423px,#ff0900 432px,#ff0600 444px,#ff0300 456px,#f00 468px,#f00 480px,#f00 492px,#f00 504px,#f00 507px)"></div><div style="left:0px;top:58px;width:524px;height:2px;background:linear-gradient(90deg,#00ff4b 0px,#00ff4b 12px,#00ff4a 24px,#00ff4a 36px,#00ff4a 48px,#00ff4a 60px,#00ff4a 72px,#00ff4a 84px,#00ff4a 96px,#00ff4a 108px,#00ff49 120px,#00ff49 133px,#1dff49 144px,#3eff49 156px,#63ff49 168px,#8aff48 180px,#b5ff48 192px,#e3ff48 204px,#ffe941 216px,#ffc236 228px,#ffa42d 240px,#ff8b26 252px,#ff7721 264px,#ff671c 276px,#ff5918 288px,#ff4d15 300px,#ff4312 312px,#ff3a0f 324px,#ff320d 336px,#ff2a0b 348px,#ff2409 360px,#ff1e07 372px,#ff1906 384px,#ff1504 396px,#ff1003 408px,#ff0c02 420px,#ff0901 432px,#ff0500 444px,#ff0200 456px,#f00 468px,#f00 480px,#f00 492px,#f00 504px,#f00 516px,#f00 524px)"></div><div style="left:0px;top:60px;width:541px;height:2px;background:linear-gradient(90deg,#00ff4f 0px,#00ff4f 12px,#00ff4f 24px,#00ff4f 36px,#00ff4f 48px,#00ff4f 60px,#00ff4f 72px,#00ff4f 84px,#00ff4f 96px,#00ff4f 108px,#00ff4f 120px,#00ff4f 133px,#1cff4f 144px,#3eff4f 156px,#62ff4f 168px,#8aff4f 180px,#b5ff4f 192px,#e4ff4f 204px,#ffe848 216px,#ffc13c 228px,#ffa332 240px,#ff8a2b 252px,#ff7725 264px,#ff6620 276px,#ff581b 288px,#ff4c18 300px,#ff4214 312px,#ff3912 324px,#ff310f 336px,#ff2a0d 348px,#ff240b 360px,#ff1e09 372px,#ff1908 384px,#ff1406 396px,#ff1005 408px,#ff0c04 420px,#ff0803 432px,#ff0502 444px,#ff0201 456px,#f00 464px,#f00 468px,#f00 480px,#f00 492px,#f00 504px,#f00 516px,#f00 528px,#f00 540px,#f00 541px)"></div><div style="left:0px;top:62px;width:559px;height:2px;background:linear-gradient(90deg,#00ff53 0px,#00ff53 12px,#00ff53 24px,#00ff53 36px,#00ff53 48px,#00ff53 60px,#00ff53 72px,#00ff53 84px,#00ff54 96px,#00ff54 108px,#00ff54 120px,#00ff54 134px,#1bff54 144px,#3dff55 156px,#62ff55 168px,#8aff55 180px,#b5ff56 192px,#e5ff56 204px,#ffe74e 216px,#ffc041 228px,#ffa237 240px,#ff892f 252px,#ff7629 264px,#ff6523 276px,#ff571f 288px,#ff4b1b 300px,#ff4117 312px,#ff3814 324px,#ff3012 336px,#ff290f 348px,#ff230d 360px,#ff1d0b 372px,#ff180a 384px,#ff1308 396px,#ff0f07 408px,#ff0b06 420px,#ff0804 432px,#ff0403 444px,#ff0102 456px,#ff0002 462px,#ff0001 468px,#f00 480px,#f00 492px,#f00 504px,#f00 516px,#f00 528px,#f00 540px,#f00 552px,#f00 559px)"></div><div style="left:0px;top:64px;width:576px;height:2px;background:linear-gradient(90deg,#00ff57 0px,#00ff57 12px,#00ff57 24px,#00ff57 36px,#00ff57 48px,#00ff58 60px,#00ff58 72px,#00ff58 84px,#00ff59 96px,#00ff59 108px,#00ff59 120px,#00ff5a 134px,#1bff5a 144px,#3dff5b 156px,#62ff5b 168px,#8aff5c 180px,#b6ff5c 192px,#e6ff5d 204px,#ffe755 216px,#ffbf47 228px,#ffa13c 240px,#ff8934 252px,#ff752d 264px,#ff6427 276px,#ff5722 288px,#ff4b1e 300px,#ff401a 312px,#ff3717 324px,#ff3014 336px,#ff2912 348px,#ff2210 360px,#ff1d0e 372px,#ff180c 384px,#ff130a 396px,#ff0f09 408px,#ff0b07 420px,#ff0706 432px,#ff0405 444px,#ff0004 460px,#ff0003 468px,#ff0002 480px,#ff0001 492px,#f00 504px,#f00 516px,#f00 528px,#f00 540px,#f00 552px,#f00 564px,#f00 576px)"></div><div style="left:0px;top:66px;width:594px;height:2px;background:linear-gradient(90deg,#00ff5b 0px,#00ff5b 12px,#00ff5b 24px,#00ff5c 36px,#00ff5c 48px,#00ff5c 60px,#00ff5d 72px,#00ff5d 84px,#00ff5e 96px,#00ff5e 108px,#00ff5f 120px,#00ff60 134px,#1aff60 144px,#3cff61 156px,#62ff62 168px,#8aff63 180px,#b6ff63 192px,#e6ff64 204px,#ffe65b 216px,#ffbe4d 228px,#ffa041 240px,#ff8838 252px,#ff7431 264px,#ff642b 276px,#ff5625 288px,#ff4a21 300px,#ff401d 312px,#ff371a 324px,#ff2f17 336px,#ff2814 348px,#ff2212 360px,#ff1c10 372px,#ff170e 384px,#ff120c 396px,#ff0e0b 408px,#ff0a09 420px,#ff0708 432px,#ff0307 444px,#ff0005 458px,#ff0004 468px,#ff0003 480px,#ff0003 492px,#ff0002 504px,#ff0001 516px,#f00 528px,#f00 540px,#f00 552px,#f00 564px,#f00 576px,#f00 588px,#f00 594px)"></div><div style="left:0px;top:68px;width:611px;height:2px;background:linear-gradient(90deg,#00ff5f 0px,#00ff5f 12px,#00ff60 24px,#00ff60 36px,#00ff61 48px,#00ff61 60px,#00ff62 72px,#00ff62 84px,#00ff63 96px,#00ff64 108px,#00ff64 120px,#00ff65 135px,#19ff66 144px,#3cff67 156px,#61ff68 168px,#8aff69 180px,#b6ff6a 192px,#e7ff6c 204px,#ffe562 216px,#ffbd52 228px,#ff9f46 240px,#ff873d 252px,#ff7335 264px,#ff632e 276px,#ff5529 288px,#ff4924 300px,#ff3f20 312px,#ff361d 324px,#ff2e19 336px,#ff2717 348px,#ff2114 360px,#ff1b12 372px,#ff1610 384px,#ff120e 396px,#ff0e0c 408px,#ff0a0b 420px,#ff060a 432px,#ff0308 444px,#ff0007 456px,#ff0006 468px,#ff0005 480px,#ff0004 492px,#ff0003 504px,#ff0002 516px,#ff0001 528px,#ff0001 540px,#f00 552px,#f00 564px,#f00 576px,#f00 588px,#f00 600px,#f00 611px)"></div><div style="left:1px;top:70px;width:618px;height:2px;background:linear-gradient(90deg,#00ff63 0px,#00ff63 12px,#00ff64 24px,#00ff65 36px,#00ff65 48px,#0f6 60px,#00ff67 72px,#00ff67 84px,#00ff68 96px,#00ff69 108px,#00ff6a 120px,#00ff6b 134px,#1bff6c 144px,#3eff6e 156px,#64ff6f 168px,#8eff70 180px,#bbff72 192px,#ecff74 204px,#ffe067 216px,#ffb957 228px,#ff9c4a 240px,#ff8440 252px,#ff7138 264px,#ff6132 276px,#ff532c 288px,#ff4727 300px,#ff3d23 312px,#ff351f 324px,#ff2d1c 336px,#ff2619 348px,#ff2016 360px,#ff1a14 372px,#ff1512 384px,#ff1110 396px,#ff0d0e 408px,#ff090d 420px,#ff050b 432px,#ff020a 444px,#ff0009 453px,#ff0007 468px,#ff0006 480px,#ff0005 492px,#ff0004 504px,#ff0003 516px,#ff0003 528px,#ff0002 540px,#ff0001 552px,#f00 564px,#f00 576px,#f00 588px,#f00 600px,#f00 612px,#f00 618px)"></div><div style="left:1px;top:72px;width:618px;height:2px;background:linear-gradient(90deg,#00ff67 0px,#00ff68 12px,#00ff68 24px,#00ff69 36px,#00ff6a 48px,#00ff6b 60px,#00ff6c 72px,#00ff6d 84px,#00ff6e 96px,#00ff6f 108px,#00ff70 120px,#00ff71 134px,#1bff72 144px,#3eff74 156px,#64ff76 168px,#8eff77 180px,#bbff79 192px,#edff7b 204px,#ffdf6e 216px,#ffb95d 228px,#ff9b4f 240px,#ff8345 252px,#ff703c 264px,#ff6035 276px,#ff522f 288px,#ff472a 300px,#ff3d26 312px,#ff3422 324px,#ff2c1e 336px,#ff251b 348px,#ff1f19 360px,#ff1a16 372px,#ff1514 384px,#ff1012 396px,#ff0c10 408px,#ff080e 420px,#ff050d 432px,#ff020b 444px,#ff000b 451px,#ff000a 456px,#ff0009 468px,#ff0008 480px,#ff0007 492px,#ff0006 504px,#ff0005 516px,#ff0004 528px,#ff0003 540px,#ff0002 552px,#ff0002 564px,#ff0001 576px,#f00 588px,#f00 600px,#f00 612px,#f00 618px)"></div><div style="left:1px;top:74px;width:618px;height:2px;background:linear-gradient(90deg,#00ff6b 0px,#00ff6c 12px,#00ff6d 24px,#00ff6e 36px,#00ff6f 48px,#00ff70 60px,#00ff71 72px,#00ff72 84px,#00ff73 96px,#00ff74 108px,#00ff76 120px,#0f7 135px,#1aff79 144px,#3dff7a 156px,#64ff7c 168px,#8eff7e 180px,#bbff81 192px,#eeff83 204px,#ffde74 216px,#ffb862 228px,#ff9a55 240px,#ff8249 252px,#ff6f40 264px,#ff5f39 276px,#ff5133 288px,#ff462d 300px,#ff3c29 312px,#ff3324 324px,#ff2c21 336px,#ff251e 348px,#ff1f1b 360px,#ff1918 372px,#ff1416 384px,#ff1014 396px,#ff0c12 408px,#ff0810 420px,#ff040f 432px,#ff010d 444px,#ff000d 449px,#ff000c 456px,#ff000a 468px,#ff0009 480px,#ff0008 492px,#ff0007 504px,#ff0006 516px,#ff0005 528px,#ff0004 540px,#ff0004 552px,#ff0003 564px,#ff0002 576px,#ff0001 588px,#ff0001 600px,#f00 612px,#f00 618px)"></div><div style="left:2px;top:76px;width:617px;height:2px;background:linear-gradient(90deg,#00ff6f 0px,#00ff70 12px,#00ff71 24px,#00ff72 36px,#00ff73 48px,#00ff74 60px,#00ff76 72px,#0f7 84px,#00ff78 96px,#00ff7a 108px,#00ff7c 120px,#00ff7e 134px,#1cff7f 144px,#40ff81 156px,#67ff83 168px,#91ff86 180px,#c0ff88 192px,#f3ff8b 204px,#ffd979 216px,#ffb467 228px,#ff9759 240px,#ff7f4d 252px,#ff6d44 264px,#ff5d3c 276px,#ff5036 288px,#ff4430 300px,#ff3a2b 312px,#ff3227 324px,#ff2a23 336px,#ff2420 348px,#ff1e1d 360px,#ff181a 372px,#ff1318 384px,#ff0f16 396px,#ff0b14 408px,#ff0712 420px,#ff0410 432px,#ff000e 446px,#ff000d 456px,#ff000c 468px,#ff000b 480px,#ff0009 492px,#ff0008 504px,#ff0007 516px,#ff0006 528px,#ff0006 540px,#ff0005 552px,#ff0004 564px,#ff0003 576px,#ff0002 588px,#ff0002 600px,#ff0001 612px,#ff0001 617px)"></div><div style="left:2px;top:78px;width:617px;height:2px;background:linear-gradient(90deg,#00ff74 0px,#00ff75 12px,#00ff76 24px,#0f7 36px,#00ff78 48px,#00ff79 60px,#00ff7b 72px,#00ff7c 84px,#00ff7e 96px,#00ff80 108px,#00ff81 120px,#00ff84 134px,#1bff86 144px,#3fff88 156px,#67ff8a 168px,#91ff8d 180px,#c0ff90 192px,#f4ff93 204px,#ffd880 216px,#ffb36d 228px,#ff965e 240px,#ff7f52 252px,#ff6c48 264px,#ff5c40 276px,#ff4f39 288px,#ff4333 300px,#ff3a2e 312px,#ff312a 324px,#ff2a26 336px,#ff2322 348px,#ff1d1f 360px,#ff181c 372px,#ff131a 384px,#ff0e18 396px,#ff0a16 408px,#ff0714 420px,#ff0312 432px,#ff0010 444px,#ff000f 456px,#ff000d 468px,#ff000c 480px,#ff000b 492px,#ff000a 504px,#ff0009 516px,#ff0008 528px,#ff0007 540px,#ff0006 552px,#ff0005 564px,#ff0004 576px,#ff0004 588px,#ff0003 600px,#ff0002 612px,#ff0002 617px)"></div><div style="left:3px;top:80px;width:616px;height:2px;background:linear-gradient(90deg,#00ff78 0px,#00ff79 12px,#00ff7a 24px,#00ff7c 36px,#00ff7d 48px,#00ff7f 60px,#00ff80 72px,#00ff82 84px,#00ff84 96px,#00ff86 108px,#0f8 120px,#00ff8a 134px,#1eff8c 144px,#42ff8f 156px,#6aff92 168px,#95ff95 180px,#c5ff98 192px,#f9ff9c 204px,#ffd485 216px,#ffaf71 228px,#ff9362 240px,#ff7c55 252px,#ff694b 264px,#ff5a43 276px,#ff4d3c 288px,#ff4236 300px,#ff3831 312px,#ff302c 324px,#ff2828 336px,#ff2224 348px,#ff1c21 360px,#ff171e 372px,#ff121c 384px,#ff0d19 396px,#ff0917 408px,#ff0615 420px,#ff0213 432px,#ff0012 441px,#ff0010 456px,#ff000f 468px,#ff000d 480px,#ff000c 492px,#ff000b 504px,#ff000a 516px,#ff0009 528px,#ff0008 540px,#ff0007 552px,#ff0006 564px,#ff0005 576px,#ff0005 588px,#ff0004 600px,#ff0003 612px,#ff0003 616px)"></div><div style="left:3px;top:82px;width:616px;height:2px;background:linear-gradient(90deg,#00ff7c 0px,#00ff7e 12px,#00ff7f 24px,#00ff80 36px,#00ff82 48px,#00ff84 60px,#00ff85 72px,#00ff87 84px,#00ff89 96px,#00ff8b 108px,#00ff8e 120px,#00ff91 134px,#1dff93 144px,#42ff96 156px,#6aff99 168px,#95ff9c 180px,#c5ffa0 192px,#faffa4 204px,#ffd38c 216px,#ffae77 228px,#ff9267 240px,#ff7b5a 252px,#ff684f 264px,#ff5947 276px,#ff4c3f 288px,#ff4139 300px,#ff3734 312px,#ff2f2f 324px,#ff282b 336px,#ff2127 348px,#ff1b24 360px,#ff1621 372px,#ff111e 384px,#ff0d1b 396px,#ff0919 408px,#ff0517 420px,#ff0215 432px,#ff0014 439px,#ff0013 444px,#ff0012 456px,#ff0010 468px,#ff000f 480px,#ff000e 492px,#ff000c 504px,#ff000b 516px,#ff000a 528px,#ff0009 540px,#ff0008 552px,#ff0007 564px,#ff0007 576px,#ff0006 588px,#ff0005 600px,#ff0004 612px,#ff0004 616px)"></div><div style="left:4px;top:84px;width:615px;height:2px;background:linear-gradient(90deg,#00ff81 0px,#00ff82 12px,#00ff84 24px,#00ff85 36px,#00ff87 48px,#00ff89 60px,#00ff8b 72px,#00ff8d 84px,#00ff8f 96px,#00ff91 108px,#00ff94 120px,#00ff97 133px,#1fff9a 144px,#44ff9d 156px,#6dffa1 168px,#99ffa4 180px,#caffa9 192px,#fffead 204px,#ffce90 216px,#ffaa7b 228px,#ff8f6b 240px,#ff785d 252px,#ff6653 264px,#ff574a 276px,#ff4a42 288px,#ff3f3c 300px,#ff3636 312px,#ff2e31 324px,#ff262d 336px,#ff2029 348px,#ff1a26 360px,#ff1523 372px,#ff1020 384px,#ff0c1d 396px,#ff081b 408px,#ff0419 420px,#ff0117 432px,#ff0016 436px,#ff0015 444px,#ff0013 456px,#ff0012 468px,#ff0010 480px,#ff000f 492px,#ff000e 504px,#ff000d 516px,#ff000b 528px,#ff000a 540px,#ff0009 552px,#ff0009 564px,#ff0008 576px,#ff0007 588px,#ff0006 600px,#ff0005 612px,#ff0005 615px)"></div><div style="left:4px;top:86px;width:615px;height:2px;background:linear-gradient(90deg,#00ff85 0px,#00ff87 12px,#00ff89 24px,#00ff8a 36px,#00ff8c 48px,#00ff8e 60px,#00ff90 72px,#00ff92 84px,#00ff95 96px,#00ff97 108px,#00ff9a 120px,#00ff9e 133px,#1effa1 144px,#44ffa4 156px,#6dffa8 168px,#99ffac 180px,#caffb1 192px,#fffdb5 204px,#ffcd97 216px,#ffa981 228px,#ff8e70 240px,#ff7762 252px,#ff6557 264px,#ff564d 276px,#ff4946 288px,#ff3f3f 300px,#ff3539 312px,#ff2d34 324px,#ff262f 336px,#ff1f2b 348px,#ff1928 360px,#ff1425 372px,#ff1022 384px,#ff0b1f 396px,#ff071d 408px,#ff041b 420px,#ff0018 434px,#ff0017 444px,#ff0015 456px,#ff0013 468px,#ff0012 480px,#ff0010 492px,#ff000f 504px,#ff000e 516px,#ff000d 528px,#ff000c 540px,#ff000b 552px,#ff000a 564px,#ff0009 576px,#ff0008 588px,#ff0007 600px,#ff0006 612px,#ff0006 615px)"></div><div style="left:5px;top:88px;width:614px;height:2px;background:linear-gradient(90deg,#00ff8a 0px,#00ff8c 12px,#00ff8d 24px,#00ff8f 36px,#00ff91 48px,#00ff94 60px,#00ff96 72px,#00ff98 84px,#00ff9b 96px,#00ff9e 108px,#00ffa1 120px,#00ffa4 133px,#21ffa8 144px,#47ffac 156px,#70ffb0 168px,#9dffb5 180px,#cfffba 192px,#fff8ba 204px,#ffc99c 216px,#ffa685 228px,#ff8a74 240px,#ff7565 252px,#ff635a 264px,#ff5450 276px,#ff4848 288px,#ff3d42 300px,#ff343c 312px,#ff2c36 324px,#ff2432 336px,#ff1e2e 348px,#ff182a 360px,#ff1327 372px,#ff0f24 384px,#ff0a21 396px,#ff071e 408px,#ff031c 420px,#ff001a 431px,#ff0018 444px,#ff0016 456px,#ff0015 468px,#ff0013 480px,#ff0012 492px,#ff0010 504px,#ff000f 516px,#ff000e 528px,#ff000d 540px,#ff000c 552px,#ff000b 564px,#ff000a 576px,#ff0009 588px,#ff0008 600px,#ff0007 612px,#ff0007 614px)"></div><div style="left:5px;top:90px;width:614px;height:2px;background:linear-gradient(90deg,#00ff8e 0px,#00ff90 12px,#00ff92 24px,#00ff94 36px,#00ff97 48px,#0f9 60px,#00ff9b 72px,#00ff9e 84px,#00ffa1 96px,#00ffa4 108px,#00ffa7 120px,#00ffab 133px,#20ffaf 144px,#46ffb3 156px,#70ffb8 168px,#9dffbd 180px,#d0ffc2 192px,#fff7c2 204px,#ffc8a2 216px,#ffa58b 228px,#ff8979 240px,#ff746a 252px,#ff625e 264px,#ff5354 276px,#ff474c 288px,#ff3c45 300px,#ff333e 312px,#ff2b39 324px,#ff2434 336px,#ff1d30 348px,#ff182c 360px,#ff1329 372px,#ff0e26 384px,#ff0a23 396px,#ff0620 408px,#ff031e 420px,#ff001c 429px,#ff001a 444px,#ff0018 456px,#ff0016 468px,#ff0015 480px,#ff0013 492px,#ff0012 504px,#ff0010 516px,#ff000f 528px,#ff000e 540px,#ff000d 552px,#ff000c 564px,#ff000b 576px,#ff000a 588px,#ff0009 600px,#ff0008 612px,#ff0008 614px)"></div><div style="left:6px;top:92px;width:613px;height:2px;background:linear-gradient(90deg,#00ff93 0px,#00ff95 12px,#00ff97 24px,#00ff9a 36px,#00ff9c 48px,#00ff9e 60px,#00ffa1 72px,#00ffa4 84px,#00ffa7 96px,#00ffab 108px,#00ffae 120px,#00ffb2 132px,#22ffb6 144px,#49ffbb 156px,#73ffc0 168px,#a2ffc5 180px,#d5ffcc 192px,#fff1c7 204px,#ffc3a7 216px,#ffa18f 228px,#ff867c 240px,#ff716e 252px,#ff6061 264px,#ff5157 276px,#ff454f 288px,#ff3b47 300px,#ff3141 312px,#ff293b 324px,#ff2236 336px,#ff1c32 348px,#ff172e 360px,#ff122b 372px,#ff0d28 384px,#ff0925 396px,#ff0522 408px,#ff0220 420px,#ff001e 426px,#ff001d 432px,#ff001b 444px,#ff0019 456px,#ff0018 468px,#ff0016 480px,#ff0015 492px,#ff0013 504px,#ff0012 516px,#ff0010 528px,#ff000f 540px,#ff000e 552px,#ff000d 564px,#ff000c 576px,#ff000b 588px,#ff000a 600px,#ff0009 612px,#ff0009 613px)"></div><div style="left:6px;top:94px;width:613px;height:2px;background:linear-gradient(90deg,#00ff98 0px,#00ff9a 12px,#00ff9c 24px,#00ff9f 36px,#00ffa1 48px,#00ffa4 60px,#00ffa7 72px,#0fa 84px,#00ffad 96px,#00ffb1 108px,#00ffb5 120px,#00ffb9 133px,#21ffbe 144px,#48ffc2 156px,#73ffc8 168px,#a2ffce 180px,#d5ffd4 192px,#fff0cf 204px,#ffc2ae 216px,#ffa095 228px,#ff8582 240px,#ff7072 252px,#ff5f65 264px,#ff505b 276px,#ff4452 288px,#ff3a4a 300px,#ff3144 312px,#ff293e 324px,#ff2239 336px,#ff1c35 348px,#ff1631 360px,#ff112d 372px,#ff0d2a 384px,#ff0827 396px,#ff0524 408px,#ff0121 420px,#ff0021 424px,#ff001f 432px,#ff001d 444px,#ff001b 456px,#ff0019 468px,#ff0018 480px,#ff0016 492px,#ff0014 504px,#ff0013 516px,#ff0012 528px,#f01 540px,#ff000f 552px,#ff000e 564px,#ff000d 576px,#ff000c 588px,#ff000b 600px,#ff000a 612px,#ff000a 613px)"></div><div style="left:7px;top:96px;width:612px;height:2px;background:linear-gradient(90deg,#00ff9d 0px,#00ff9f 12px,#00ffa1 24px,#00ffa4 36px,#00ffa7 48px,#0fa 60px,#00ffad 72px,#00ffb0 84px,#00ffb4 96px,#00ffb8 108px,#00ffbc 120px,#00ffc0 132px,#24ffc5 144px,#4bffcb 156px,#77ffd1 168px,#a6ffd7 180px,#dbffde 192px,#ffebd4 204px,#ffbeb2 216px,#ff9d99 228px,#ff8385 240px,#ff6e75 252px,#ff5d69 264px,#ff4e5e 276px,#ff4255 288px,#ff384d 300px,#ff2f46 312px,#ff2740 324px,#ff213b 336px,#ff1a37 348px,#ff1533 360px,#ff102f 372px,#ff0c2b 384px,#ff0828 396px,#ff0426 408px,#ff0023 422px,#ff0021 432px,#ff001e 444px,#ff001c 456px,#ff001b 468px,#ff0019 480px,#ff0017 492px,#ff0016 504px,#ff0014 516px,#ff0013 528px,#ff0012 540px,#f01 552px,#ff000f 564px,#ff000e 576px,#ff000d 588px,#ff000c 600px,#ff000b 612px)"></div><div style="left:8px;top:98px;width:611px;height:2px;background:linear-gradient(90deg,#00ffa2 0px,#00ffa4 12px,#00ffa7 24px,#00ffa9 36px,#00ffac 48px,#00ffaf 60px,#00ffb3 72px,#00ffb6 84px,#00ffba 96px,#00ffbf 108px,#00ffc3 120px,#00ffc8 131px,#26ffcd 144px,#4effd3 156px,#7affd9 168px,#abffe0 180px,#e0ffe8 192px,#ffe5d9 204px,#ffbab6 216px,#ff999d 228px,#ff8089 240px,#ff6b79 252px,#ff5a6c 264px,#ff4c61 276px,#ff4158 288px,#ff3750 300px,#ff2e49 312px,#ff2643 324px,#ff1f3d 336px,#ff1939 348px,#ff1434 360px,#ff0f31 372px,#ff0b2d 384px,#ff072a 396px,#ff0327 408px,#ff0025 419px,#f02 432px,#ff0020 444px,#ff001e 456px,#ff001c 468px,#ff001a 480px,#ff0019 492px,#ff0017 504px,#ff0016 516px,#ff0014 528px,#ff0013 540px,#ff0012 552px,#f01 564px,#ff000f 576px,#ff000e 588px,#ff000d 600px,#ff000d 611px)"></div><div style="left:8px;top:100px;width:611px;height:2px;background:linear-gradient(90deg,#00ffa6 0px,#00ffa9 12px,#00ffac 24px,#00ffaf 36px,#00ffb2 48px,#00ffb5 60px,#00ffb9 72px,#00ffbd 84px,#00ffc1 96px,#00ffc5 108px,#00ffca 120px,#00ffcf 132px,#26ffd5 144px,#4effdb 156px,#7affe2 168px,#abffe9 180px,#e1fff2 192px,#ffe4e1 204px,#ffb9bd 216px,#ff98a3 228px,#ff7f8e 240px,#ff6a7d 252px,#ff5a70 264px,#ff4c65 276px,#ff405b 288px,#ff3653 300px,#ff2d4c 312px,#ff2546 324px,#ff1f40 336px,#ff193b 348px,#ff1337 360px,#ff0e33 372px,#ff0a2f 384px,#ff062c 396px,#ff0229 408px,#ff0027 417px,#ff0024 432px,#f02 444px,#ff0020 456px,#ff001e 468px,#ff001c 480px,#ff001a 492px,#ff0018 504px,#ff0017 516px,#ff0015 528px,#ff0014 540px,#ff0013 552px,#ff0012 564px,#f01 576px,#ff0010 588px,#ff000f 600px,#ff000e 611px)"></div><div style="left:9px;top:102px;width:608px;height:2px;background:linear-gradient(90deg,#00ffab 0px,#00ffae 12px,#00ffb1 24px,#00ffb4 36px,#00ffb8 48px,#0fb 60px,#00ffbf 72px,#00ffc3 84px,#00ffc8 96px,#0fc 108px,#00ffd1 120px,#00ffd7 131px,#28ffdd 144px,#51ffe4 156px,#7effeb 168px,#affff3 180px,#e6fffc 192px,#ffdfe5 204px,#ffb5c1 216px,#ff95a6 228px,#ff7c92 240px,#ff6881 252px,#ff5773 264px,#ff4a67 276px,#ff3e5e 288px,#ff3455 300px,#ff2c4e 312px,#ff2448 324px,#ff1d42 336px,#ff173d 348px,#ff1239 360px,#ff0d35 372px,#ff0931 384px,#ff052e 396px,#ff022b 408px,#ff0029 414px,#ff0028 420px,#ff0025 432px,#ff0023 444px,#ff0021 456px,#ff001f 468px,#ff001d 480px,#ff001b 492px,#ff001a 504px,#ff0018 516px,#ff0017 528px,#ff0015 540px,#ff0014 552px,#ff0013 564px,#ff0012 576px,#f01 588px,#ff0010 600px,#ff000f 608px)"></div><div style="left:9px;top:104px;width:606px;height:2px;background:linear-gradient(90deg,#00ffb0 0px,#00ffb3 12px,#00ffb6 24px,#00ffba 36px,#00ffbd 48px,#00ffc1 60px,#00ffc5 72px,#00ffc9 84px,#00ffce 96px,#00ffd3 108px,#00ffd9 120px,#00ffde 131px,#27ffe5 144px,#51ffec 156px,#7efff4 168px,#b0fffc 180px,#e1f8ff 192px,#ffdeed 204px,#ffb3c8 216px,#ff94ac 228px,#ff7b97 240px,#ff6785 252px,#ff5677 264px,#ff496b 276px,#ff3d61 288px,#ff3359 300px,#ff2b51 312px,#ff234b 324px,#ff1d45 336px,#ff1740 348px,#ff123b 360px,#ff0d37 372px,#ff0933 384px,#ff0530 396px,#ff002c 412px,#ff002a 420px,#ff0027 432px,#ff0025 444px,#ff0023 456px,#ff0020 468px,#ff001f 480px,#ff001d 492px,#ff001b 504px,#ff0019 516px,#ff0018 528px,#ff0017 540px,#ff0015 552px,#ff0014 564px,#ff0013 576px,#ff0012 588px,#f01 600px,#ff0010 606px)"></div><div style="left:10px;top:106px;width:603px;height:2px;background:linear-gradient(90deg,#00ffb5 0px,#00ffb9 12px,#00ffbc 24px,#00ffbf 36px,#00ffc3 48px,#00ffc7 60px,#0fc 72px,#00ffd0 84px,#00ffd5 96px,#00ffda 108px,#00ffe0 120px,#00ffe6 131px,#2affee 144px,#54fff5 156px,#82fffd 168px,#aff8ff 180px,#def 192px,#ffd9f2 204px,#ffafcc 216px,#ff90b0 228px,#ff789a 240px,#ff6489 252px,#ff547a 264px,#ff476e 276px,#ff3c64 288px,#ff325b 300px,#ff2953 312px,#ff224d 324px,#ff1b47 336px,#ff1642 348px,#ff103d 360px,#ff0c39 372px,#ff0835 384px,#ff0431 396px,#ff002e 409px,#ff002b 420px,#ff0029 432px,#ff0026 444px,#ff0024 456px,#f02 468px,#ff0020 480px,#ff001e 492px,#ff001c 504px,#ff001b 516px,#ff0019 528px,#ff0018 540px,#ff0016 552px,#ff0015 564px,#ff0014 576px,#ff0013 588px,#ff0012 600px,#f01 603px)"></div><div style="left:11px;top:108px;width:600px;height:2px;background:linear-gradient(90deg,#0fb 0px,#00ffbe 12px,#00ffc2 24px,#00ffc5 36px,#00ffc9 48px,#00ffce 60px,#00ffd2 72px,#00ffd7 84px,#00ffdc 96px,#00ffe2 108px,#00ffe8 120px,#0fe 130px,#2dfff6 144px,#57fffe 156px,#82f7ff 168px,#adeeff 180px,#dae5ff 192px,#ffd4f6 204px,#ffabd0 216px,#ff8db4 228px,#ff759e 240px,#ff628c 252px,#ff527d 264px,#ff4571 276px,#ff3a66 288px,#ff305e 300px,#ff2856 312px,#ff214f 324px,#ff1a49 336px,#ff1544 348px,#ff0f3f 360px,#ff0b3b 372px,#ff0737 384px,#ff0333 396px,#ff0031 406px,#ff002d 420px,#ff002a 432px,#ff0028 444px,#ff0025 456px,#ff0023 468px,#ff0021 480px,#ff001f 492px,#ff001e 504px,#ff001c 516px,#ff001a 528px,#ff0019 540px,#ff0017 552px,#ff0016 564px,#ff0015 576px,#ff0014 588px,#ff0013 600px)"></div><div style="left:11px;top:110px;width:598px;height:2px;background:linear-gradient(90deg,#00ffc0 0px,#00ffc3 12px,#00ffc7 24px,#00ffcb 36px,#00ffcf 48px,#00ffd4 60px,#00ffd8 72px,#00ffde 84px,#00ffe3 96px,#00ffe9 108px,#00fff0 120px,#00fff6 130px,#2cffff 144px,#54f7ff 156px,#7defff 168px,#a7e6ff 180px,#d3ddff 192px,#ffd3fe 204px,#ffaad7 216px,#ff8cba 228px,#ff74a3 240px,#ff6190 252px,#ff5181 264px,#ff4475 276px,#ff396a 288px,#ff2f61 300px,#ff2759 312px,#ff2052 324px,#ff1a4c 336px,#ff1446 348px,#ff0f41 360px,#ff0a3d 372px,#ff0639 384px,#ff0235 396px,#f03 404px,#ff0032 408px,#ff002f 420px,#ff002c 432px,#ff0029 444px,#ff0027 456px,#ff0025 468px,#ff0023 480px,#ff0021 492px,#ff001f 504px,#ff001d 516px,#ff001c 528px,#ff001a 540px,#ff0019 552px,#ff0017 564px,#ff0016 576px,#ff0015 588px,#ff0014 598px)"></div><div style="left:12px;top:112px;width:595px;height:2px;background:linear-gradient(90deg,#00ffc5 0px,#00ffc9 12px,#00ffcd 24px,#00ffd1 36px,#00ffd5 48px,#00ffda 60px,#00ffdf 72px,#00ffe5 84px,#00ffeb 96px,#00fff1 108px,#00fff8 120px,#00fffe 130px,#2df6ff 144px,#54eeff 156px,#7ce6ff 168px,#a6ddff 180px,#d0d4ff 192px,#fccbff 204px,#ffa6db 216px,#ff88bd 228px,#ff71a6 240px,#ff5e93 252px,#ff4f84 264px,#ff4277 276px,#ff376d 288px,#ff2e63 300px,#ff265b 312px,#ff1f54 324px,#ff184e 336px,#ff1348 348px,#ff0e43 360px,#ff093f 372px,#ff053b 384px,#ff0137 396px,#ff0035 401px,#f03 408px,#ff0030 420px,#ff002d 432px,#ff002b 444px,#ff0028 456px,#ff0026 468px,#ff0024 480px,#f02 492px,#ff0020 504px,#ff001e 516px,#ff001d 528px,#ff001b 540px,#ff001a 552px,#ff0018 564px,#ff0017 576px,#ff0016 588px,#ff0015 595px)"></div><div style="left:13px;top:114px;width:592px;height:2px;background:linear-gradient(90deg,#00ffcb 0px,#00ffce 12px,#00ffd3 24px,#00ffd7 36px,#00ffdc 48px,#00ffe1 60px,#00ffe6 72px,#00ffec 84px,#00fff2 96px,#00fff9 108px,#00feff 120px,#00f8ff 129px,#2eeeff 144px,#54e6ff 156px,#7bdeff 168px,#a4d5ff 180px,#cdccff 192px,#f8c3ff 204px,#ffa2df 216px,#ff85c1 228px,#ff6ea9 240px,#ff5c97 252px,#ff4d87 264px,#ff407a 276px,#ff366f 288px,#ff2c66 300px,#ff245d 312px,#ff1d56 324px,#ff1750 336px,#ff124a 348px,#ff0d45 360px,#ff0840 372px,#ff043c 384px,#ff0038 398px,#ff0035 408px,#ff0032 420px,#ff002f 432px,#ff002c 444px,#ff002a 456px,#ff0027 468px,#ff0025 480px,#ff0023 492px,#ff0021 504px,#ff0020 516px,#ff001e 528px,#ff001c 540px,#ff001b 552px,#ff001a 564px,#ff0018 576px,#ff0017 588px,#ff0017 592px)"></div><div style="left:13px;top:116px;width:591px;height:2px;background:linear-gradient(90deg,#00ffd0 0px,#00ffd4 12px,#00ffd8 24px,#0fd 36px,#00ffe2 48px,#00ffe7 60px,#00ffed 72px,#00fff3 84px,#00fff9 96px,#00feff 108px,#00f6ff 120px,#00f0ff 129px,#2ce7ff 144px,#51dfff 156px,#77d6ff 168px,#9fceff 180px,#c7c5ff 192px,#f1bcff 204px,#ffa1e6 216px,#ff84c7 228px,#ff6daf 240px,#ff5b9b 252px,#ff4c8b 264px,#ff3f7e 276px,#ff3573 288px,#ff2c69 300px,#ff2460 312px,#ff1d59 324px,#ff1652 336px,#ff114d 348px,#ff0c47 360px,#ff0843 372px,#ff043e 384px,#ff003b 396px,#ff0037 408px,#ff0034 420px,#ff0031 432px,#ff002e 444px,#ff002b 456px,#ff0029 468px,#ff0027 480px,#ff0025 492px,#ff0023 504px,#ff0021 516px,#ff001f 528px,#ff001e 540px,#ff001c 552px,#ff001b 564px,#ff0019 576px,#ff0018 588px,#ff0018 591px)"></div><div style="left:14px;top:118px;width:588px;height:2px;background:linear-gradient(90deg,#00ffd5 0px,#00ffda 12px,#00ffde 24px,#00ffe3 36px,#00ffe8 48px,#0fe 60px,#00fff4 72px,#00fffa 84px,#00fdff 96px,#00f6ff 108px,#0ef 120px,#00e9ff 129px,#2ddfff 144px,#51d7ff 156px,#77cfff 168px,#9dc6ff 180px,#c5beff 192px,#edb5ff 204px,#ff9de9 216px,#ff81ca 228px,#ff6bb2 240px,#ff599e 252px,#ff4a8e 264px,#ff3e81 276px,#ff3375 288px,#ff2a6b 300px,#ff2263 312px,#ff1b5b 324px,#ff1554 336px,#ff104f 348px,#ff0b49 360px,#ff0744 372px,#ff0340 384px,#ff003d 393px,#ff0039 408px,#ff0035 420px,#ff0032 432px,#ff002f 444px,#ff002d 456px,#ff002a 468px,#ff0028 480px,#ff0026 492px,#ff0024 504px,#f02 516px,#ff0020 528px,#ff001f 540px,#ff001d 552px,#ff001c 564px,#ff001a 576px,#ff0019 588px)"></div><div style="left:15px;top:120px;width:585px;height:2px;background:linear-gradient(90deg,#00ffdb 0px,#00ffe0 12px,#00ffe4 24px,#00ffea 36px,#00ffef 48px,#00fff5 60px,#00fffb 72px,#00fcff 84px,#00f5ff 96px,#0ef 108px,#00e7ff 120px,#00e2ff 128px,#2ed8ff 144px,#52d0ff 156px,#76c8ff 168px,#9cbfff 180px,#c2b7ff 192px,#eaaeff 204px,#ff99ed 216px,#ff7ece 228px,#ff68b5 240px,#ff56a1 252px,#ff4891 264px,#ff3c83 276px,#ff3178 288px,#ff296e 300px,#ff2165 312px,#ff1a5d 324px,#ff1457 336px,#ff0f51 348px,#ff0a4b 360px,#ff0646 372px,#ff0242 384px,#ff0040 390px,#ff003e 396px,#ff003a 408px,#ff0037 420px,#ff0034 432px,#ff0031 444px,#ff002e 456px,#ff002c 468px,#ff0029 480px,#ff0027 492px,#ff0025 504px,#ff0023 516px,#f02 528px,#ff0020 540px,#ff001e 552px,#ff001d 564px,#ff001b 576px,#ff001a 585px)"></div><div style="left:16px;top:122px;width:582px;height:2px;background:linear-gradient(90deg,#00ffe1 0px,#00ffe6 12px,#00ffeb 24px,#00fff0 36px,#00fff6 48px,#00fffc 60px,#00fcff 72px,#00f5ff 84px,#0ef 96px,#00e7ff 108px,#00e0ff 120px,#00dbff 127px,#0dd8ff 132px,#2fd0ff 144px,#52c9ff 156px,#76c1ff 168px,#9ab8ff 180px,#c0b0ff 192px,#e6a7ff 204px,#ff96f1 216px,#ff7bd1 228px,#ff65b8 240px,#ff54a4 252px,#ff4694 264px,#ff3a86 276px,#ff307a 288px,#ff2770 300px,#ff2067 312px,#ff195f 324px,#ff1359 336px,#ff0e52 348px,#ff094d 360px,#ff0548 372px,#ff0043 387px,#ff003f 396px,#ff003c 408px,#ff0038 420px,#ff0035 432px,#ff0032 444px,#ff0030 456px,#ff002d 468px,#ff002b 480px,#ff0029 492px,#ff0026 504px,#ff0025 516px,#ff0023 528px,#ff0021 540px,#ff001f 552px,#ff001e 564px,#ff001c 576px,#ff001c 582px)"></div><div style="left:16px;top:124px;width:580px;height:2px;background:linear-gradient(90deg,#00ffe6 0px,#00ffeb 12px,#00fff1 24px,#00fff6 36px,#00fffc 48px,#00fbff 60px,#00f5ff 72px,#0ef 84px,#00e7ff 96px,#00e0ff 108px,#00d9ff 120px,#00d5ff 128px,#0cd2ff 132px,#2dcaff 144px,#4fc3ff 156px,#72bbff 168px,#96b3ff 180px,#baf 192px,#e0a2ff 204px,#ff94f7 216px,#ff79d7 228px,#ff64bd 240px,#ff53a9 252px,#ff4598 264px,#ff398a 276px,#ff2f7e 288px,#ff2673 300px,#ff1f6a 312px,#ff1862 324px,#ff125b 336px,#ff0d55 348px,#ff084f 360px,#ff044a 372px,#ff0045 385px,#ff0041 396px,#ff003e 408px,#ff003a 420px,#ff0037 432px,#ff0034 444px,#ff0031 456px,#ff002f 468px,#ff002c 480px,#ff002a 492px,#ff0028 504px,#ff0026 516px,#ff0024 528px,#f02 540px,#ff0021 552px,#ff001f 564px,#ff001e 576px,#ff001d 580px)"></div><div style="left:17px;top:126px;width:577px;height:2px;background:linear-gradient(90deg,#00ffec 0px,#00fff2 12px,#00fff7 24px,#00fffd 36px,#00fbff 48px,#00f5ff 60px,#0ef 72px,#00e7ff 84px,#00e1ff 96px,#00daff 108px,#00d3ff 120px,#00ceff 127px,#0dcbff 132px,#2ec4ff 144px,#4fbcff 156px,#72b4ff 168px,#95acff 180px,#b9a4ff 192px,#dd9cff 204px,#ff91fb 216px,#ff76da 228px,#ff62c1 240px,#ff51ac 252px,#ff439b 264px,#ff378c 276px,#ff2d80 288px,#ff2576 300px,#ff1d6c 312px,#ff1764 324px,#ff115d 336px,#ff0c57 348px,#ff0751 360px,#ff034c 372px,#ff0048 382px,#ff0043 396px,#ff003f 408px,#ff003c 420px,#ff0038 432px,#ff0035 444px,#f03 456px,#ff0030 468px,#ff002d 480px,#ff002b 492px,#ff0029 504px,#ff0027 516px,#ff0025 528px,#ff0023 540px,#f02 552px,#ff0020 564px,#ff001f 576px,#ff001f 577px)"></div><div style="left:18px;top:128px;width:574px;height:2px;background:linear-gradient(90deg,#00fff3 0px,#00fff8 12px,#00fffe 24px,#00faff 36px,#00f4ff 48px,#0ef 60px,#00e7ff 72px,#00e1ff 84px,#00daff 96px,#00d3ff 108px,#0cf 120px,#00c8ff 126px,#0fc5ff 132px,#2fbeff 144px,#50b6ff 156px,#71aeff 168px,#93a6ff 180px,#b79eff 192px,#db96ff 204px,#ff8dfe 216px,#ff73de 228px,#ff5fc4 240px,#ff4eaf 252px,#ff419d 264px,#ff358f 276px,#ff2c83 288px,#ff2378 300px,#ff1c6f 312px,#ff1666 324px,#ff105f 336px,#ff0b59 348px,#ff0653 360px,#ff024e 372px,#ff004b 379px,#ff0049 384px,#ff0045 396px,#ff0041 408px,#ff003d 420px,#ff003a 432px,#ff0037 444px,#ff0034 456px,#ff0031 468px,#ff002f 480px,#ff002c 492px,#ff002a 504px,#ff0028 516px,#ff0026 528px,#ff0025 540px,#ff0023 552px,#ff0021 564px,#ff0020 574px)"></div><div style="left:18px;top:130px;width:572px;height:2px;background:linear-gradient(90deg,#00fff8 0px,#00fffe 12px,#00faff 24px,#00f4ff 36px,#0ef 48px,#00e8ff 60px,#00e2ff 72px,#00dbff 84px,#00d4ff 96px,#00ceff 108px,#00c7ff 120px,#00c3ff 127px,#0ebfff 132px,#2db8ff 144px,#4db1ff 156px,#6ea9ff 168px,#8fa1ff 180px,#b299ff 192px,#d591ff 204px,#f989ff 216px,#ff72e3 228px,#ff5ec9 240px,#ff4db3 252px,#ff40a2 264px,#ff3593 276px,#ff2b86 288px,#ff237b 300px,#ff1b72 312px,#ff1569 324px,#ff0f62 336px,#ff0a5b 348px,#ff0655 360px,#ff0250 372px,#ff004e 377px,#ff004b 384px,#ff0047 396px,#ff0043 408px,#ff003f 420px,#ff003c 432px,#ff0038 444px,#ff0035 456px,#f03 468px,#ff0030 480px,#ff002e 492px,#ff002c 504px,#ff002a 516px,#ff0028 528px,#ff0026 540px,#ff0024 552px,#f02 564px,#ff0021 572px)"></div><div style="left:19px;top:132px;width:569px;height:2px;background:linear-gradient(90deg,#00fffe 0px,#00faff 12px,#00f4ff 24px,#0ef 36px,#00e8ff 48px,#00e2ff 60px,#00dbff 72px,#00d5ff 84px,#00ceff 96px,#00c8ff 108px,#00c1ff 120px,#00bdff 126px,#0fbaff 132px,#2eb2ff 144px,#4dabff 156px,#6ea3ff 168px,#8e9cff 180px,#b094ff 192px,#d38cff 204px,#f683ff 216px,#ff6fe7 228px,#ff5bcc 240px,#ff4bb6 252px,#ff3ea4 264px,#ff3395 276px,#ff2988 288px,#ff217d 300px,#ff1a74 312px,#ff146b 324px,#ff0e64 336px,#ff095d 348px,#ff0557 360px,#ff0051 374px,#ff004d 384px,#ff0048 396px,#f04 408px,#ff0040 420px,#ff003d 432px,#ff003a 444px,#ff0037 456px,#ff0034 468px,#ff0032 480px,#ff002f 492px,#ff002d 504px,#ff002b 516px,#ff0029 528px,#ff0027 540px,#ff0025 552px,#ff0023 564px,#ff0023 569px)"></div><div style="left:20px;top:134px;width:566px;height:2px;background:linear-gradient(90deg,#00f9ff 0px,#00f4ff 12px,#0ef 24px,#00e8ff 36px,#00e2ff 48px,#00dcff 60px,#00d5ff 72px,#00cfff 84px,#00c8ff 96px,#00c2ff 108px,#0bf 120px,#00b8ff 125px,#11b4ff 132px,#2fadff 144px,#4ea5ff 156px,#6d9eff 168px,#8d96ff 180px,#ae8fff 192px,#d087ff 204px,#f37eff 216px,#ff6cea 228px,#ff59cf 240px,#ff49b9 252px,#ff3ca7 264px,#ff3198 276px,#ff288b 288px,#ff2080 300px,#ff1976 312px,#ff126d 324px,#ff0d66 336px,#ff085f 348px,#ff0459 360px,#ff0054 371px,#ff004e 384px,#ff004a 396px,#ff0046 408px,#ff0042 420px,#ff003e 432px,#ff003b 444px,#ff0038 456px,#ff0035 468px,#f03 480px,#ff0030 492px,#ff002e 504px,#ff002c 516px,#ff002a 528px,#ff0028 540px,#ff0026 552px,#ff0025 564px,#ff0024 566px)"></div><div style="left:21px;top:136px;width:563px;height:2px;background:linear-gradient(90deg,#00f3ff 0px,#0ef 12px,#00e8ff 24px,#00e2ff 36px,#00dcff 48px,#00d6ff 60px,#00d0ff 72px,#00c9ff 84px,#00c3ff 96px,#00bcff 108px,#00b5ff 120px,#00b3ff 125px,#12aeff 132px,#30a7ff 144px,#4ea0ff 156px,#6d99ff 168px,#8c91ff 180px,#ad8aff 192px,#ce82ff 204px,#f07aff 216px,#ff69ed 228px,#ff56d2 240px,#ff47bc 252px,#ff3aaa 264px,#ff2f9a 276px,#ff268d 288px,#ff1e82 300px,#ff1778 312px,#ff116f 324px,#ff0c68 336px,#ff0761 348px,#ff035b 360px,#ff0057 368px,#ff0050 384px,#ff004c 396px,#ff0047 408px,#ff0043 420px,#ff0040 432px,#ff003d 444px,#ff003a 456px,#ff0037 468px,#ff0034 480px,#ff0032 492px,#ff002f 504px,#ff002d 516px,#ff002b 528px,#ff0029 540px,#ff0027 552px,#ff0026 563px)"></div><div style="left:22px;top:138px;width:560px;height:2px;background:linear-gradient(90deg,#0ef 0px,#00e8ff 12px,#00e2ff 24px,#00dcff 36px,#00d6ff 48px,#00d0ff 60px,#00caff 72px,#00c4ff 84px,#00bdff 96px,#00b7ff 108px,#00aeff 124px,#13a9ff 132px,#30a2ff 144px,#4e9bff 156px,#6c94ff 168px,#8c8cff 180px,#ab85ff 192px,#cc7dff 204px,#ed75ff 216px,#ff66f0 228px,#ff54d5 240px,#ff45bf 252px,#ff38ac 264px,#ff2e9d 276px,#ff2590 288px,#ff1d84 300px,#ff167a 312px,#ff1071 324px,#ff0b6a 336px,#ff0663 348px,#ff025d 360px,#ff005a 365px,#ff0057 372px,#ff0052 384px,#ff004d 396px,#ff0049 408px,#ff0045 420px,#ff0041 432px,#ff003e 444px,#ff003b 456px,#ff0038 468px,#ff0035 480px,#f03 492px,#ff0030 504px,#ff002e 516px,#ff002c 528px,#ff002a 540px,#ff0028 552px,#ff0027 560px)"></div><div style="left:22px;top:140px;width:558px;height:2px;background:linear-gradient(90deg,#00e8ff 0px,#00e3ff 12px,#0df 24px,#00d7ff 36px,#00d1ff 48px,#00cbff 60px,#00c5ff 72px,#00bfff 84px,#00b9ff 96px,#00b2ff 108px,#00abff 120px,#00a9ff 124px,#12a5ff 132px,#2f9eff 144px,#4c97ff 156px,#6a90ff 168px,#88f 180px,#a781ff 192px,#c779ff 204px,#e771ff 216px,#ff65f6 228px,#ff53da 240px,#ff44c3 252px,#ff37b0 264px,#ff2da0 276px,#ff2493 288px,#ff1c87 300px,#ff157d 312px,#ff0f74 324px,#ff0a6c 336px,#ff0565 348px,#ff005d 363px,#ff0059 372px,#ff0054 384px,#ff004f 396px,#ff004b 408px,#ff0047 420px,#ff0043 432px,#ff0040 444px,#ff003c 456px,#ff003a 468px,#ff0037 480px,#ff0034 492px,#ff0032 504px,#ff0030 516px,#ff002d 528px,#ff002b 540px,#ff002a 552px,#ff0029 558px)"></div><div style="left:23px;top:142px;width:555px;height:2px;background:linear-gradient(90deg,#00e3ff 0px,#0df 12px,#00d8ff 24px,#00d2ff 36px,#0cf 48px,#00c6ff 60px,#00c0ff 72px,#00baff 84px,#00b4ff 96px,#00adff 108px,#00a5ff 124px,#13a0ff 132px,#2f99ff 144px,#4c92ff 156px,#698bff 168px,#8784ff 180px,#a67cff 192px,#c575ff 204px,#e56dff 216px,#ff62f9 228px,#ff50dd 240px,#ff41c6 252px,#ff35b3 264px,#ff2ba3 276px,#ff2295 288px,#ff1b8a 300px,#ff147f 312px,#ff0e76 324px,#ff096e 336px,#ff0467 348px,#ff0060 360px,#ff005b 372px,#ff0056 384px,#ff0051 396px,#ff004c 408px,#ff0048 420px,#f04 432px,#ff0041 444px,#ff003e 456px,#ff003b 468px,#ff0038 480px,#ff0035 492px,#f03 504px,#ff0031 516px,#ff002f 528px,#ff002d 540px,#ff002b 552px,#ff002a 555px)"></div><div style="left:24px;top:144px;width:552px;height:2px;background:linear-gradient(90deg,#00deff 0px,#00d8ff 12px,#00d3ff 24px,#00cdff 36px,#00c7ff 48px,#00c1ff 60px,#0bf 72px,#00b5ff 84px,#00afff 96px,#00a8ff 108px,#00a0ff 123px,#159bff 132px,#3094ff 144px,#4c8dff 156px,#6986ff 168px,#867fff 180px,#a478ff 192px,#c370ff 204px,#e269ff 216px,#ff60fc 228px,#ff4ee0 240px,#ff3fc9 252px,#ff33b6 264px,#ff29a5 276px,#ff2198 288px,#ff198c 300px,#ff1381 312px,#ff0d78 324px,#ff0870 336px,#ff0369 348px,#ff0064 357px,#ff005c 372px,#ff0057 384px,#ff0052 396px,#ff004e 408px,#ff004a 420px,#ff0046 432px,#ff0042 444px,#ff003f 456px,#ff003c 468px,#ff0039 480px,#ff0037 492px,#ff0034 504px,#ff0032 516px,#ff0030 528px,#ff002e 540px,#ff002c 552px)"></div><div style="left:25px;top:146px;width:549px;height:2px;background:linear-gradient(90deg,#00d9ff 0px,#00d3ff 12px,#00cdff 24px,#00c8ff 36px,#00c2ff 48px,#00bcff 60px,#00b6ff 72px,#00b0ff 84px,#0af 96px,#00a4ff 108px,#009cff 122px,#1697ff 132px,#3190ff 144px,#4d89ff 156px,#6982ff 168px,#867bff 180px,#a374ff 192px,#c16cff 204px,#e065ff 216px,#ff5dff 228px,#ff4be2 240px,#ff3dcb 252px,#ff32b8 264px,#ff28a8 276px,#ff1f9a 288px,#ff188e 300px,#ff1183 312px,#ff0c7a 324px,#ff0772 336px,#ff026b 348px,#ff0067 354px,#ff0064 360px,#ff005e 372px,#ff0059 384px,#ff0054 396px,#ff004f 408px,#ff004b 420px,#ff0047 432px,#f04 444px,#ff0040 456px,#ff003d 468px,#ff003b 480px,#ff0038 492px,#ff0035 504px,#f03 516px,#ff0031 528px,#ff002f 540px,#ff002d 549px)"></div><div style="left:25px;top:148px;width:547px;height:2px;background:linear-gradient(90deg,#00d4ff 0px,#00cfff 12px,#00c9ff 24px,#00c3ff 36px,#00beff 48px,#00b8ff 60px,#00b2ff 72px,#00acff 84px,#00a6ff 96px,#00a0ff 108px,#0098ff 123px,#1593ff 132px,#2f8cff 144px,#4b85ff 156px,#667eff 168px,#8377ff 180px,#9f70ff 192px,#bd69ff 204px,#db61ff 216px,#fa5aff 228px,#ff4ae7 240px,#ff3cd0 252px,#ff31bc 264px,#ff27ac 276px,#ff1e9d 288px,#ff1791 300px,#ff1186 312px,#ff0b7d 324px,#ff0675 336px,#ff026d 348px,#ff006b 353px,#f06 360px,#ff0060 372px,#ff005b 384px,#ff0056 396px,#ff0051 408px,#ff004d 420px,#ff0049 432px,#ff0045 444px,#ff0042 456px,#ff003f 468px,#ff003c 480px,#ff0039 492px,#ff0037 504px,#ff0034 516px,#ff0032 528px,#ff0030 540px,#ff002f 547px)"></div><div style="left:26px;top:150px;width:544px;height:2px;background:linear-gradient(90deg,#00cfff 0px,#00caff 12px,#00c4ff 24px,#00bfff 36px,#00b9ff 48px,#00b3ff 60px,#00adff 72px,#00a7ff 84px,#00a1ff 96px,#009bff 108px,#0094ff 122px,#168eff 132px,#3088ff 144px,#4b81ff 156px,#667aff 168px,#8273ff 180px,#9e6cff 192px,#bb65ff 204px,#d95eff 216px,#f756ff 228px,#ff48ea 240px,#ff3ad2 252px,#ff2fbf 264px,#ff25ae 276px,#ff1da0 288px,#ff1693 300px,#ff0f88 312px,#ff0a7f 324px,#ff0577 336px,#ff006e 350px,#ff0068 360px,#ff0062 372px,#ff005c 384px,#ff0057 396px,#ff0053 408px,#ff004e 420px,#ff004a 432px,#ff0047 444px,#ff0043 456px,#ff0040 468px,#ff003d 480px,#ff003b 492px,#ff0038 504px,#ff0036 516px,#f03 528px,#ff0031 540px,#ff0030 544px)"></div><div style="left:27px;top:152px;width:541px;height:2px;background:linear-gradient(90deg,#00caff 0px,#00c5ff 12px,#00c0ff 24px,#00baff 36px,#00b5ff 48px,#00afff 60px,#00a9ff 72px,#00a3ff 84px,#009dff 96px,#0097ff 108px,#0090ff 121px,#178aff 132px,#3184ff 144px,#4b7dff 156px,#6676ff 168px,#816fff 180px,#9d68ff 192px,#ba61ff 204px,#d75aff 216px,#f453ff 228px,#ff46ed 240px,#ff38d5 252px,#ff2dc1 264px,#ff23b0 276px,#ff1ba2 288px,#ff1495 300px,#ff0e8b 312px,#ff0981 324px,#ff0478 336px,#ff0072 347px,#ff006a 360px,#ff0064 372px,#ff005e 384px,#ff0059 396px,#ff0054 408px,#ff0050 420px,#ff004c 432px,#ff0048 444px,#ff0045 456px,#ff0042 468px,#ff003f 480px,#ff003c 492px,#ff0039 504px,#ff0037 516px,#ff0034 528px,#ff0032 540px,#ff0032 541px)"></div><div style="left:28px;top:154px;width:539px;height:2px;background:linear-gradient(90deg,#00c6ff 0px,#00c1ff 12px,#0bf 24px,#00b6ff 36px,#00b0ff 48px,#0af 60px,#00a5ff 72px,#009fff 84px,#09f 96px,#0093ff 108px,#008cff 121px,#1886ff 132px,#3180ff 144px,#4b79ff 156px,#6672ff 168px,#816cff 180px,#9c65ff 192px,#b85eff 204px,#d556ff 216px,#f24fff 228px,#ff43f0 240px,#ff36d8 252px,#ff2bc4 264px,#ff22b3 276px,#ff1aa4 288px,#ff1398 300px,#ff0d8d 312px,#ff0783 324px,#ff037a 336px,#ff0075 344px,#ff0073 348px,#ff006c 360px,#ff0065 372px,#ff0060 384px,#ff005a 396px,#ff0056 408px,#ff0051 420px,#ff004d 432px,#ff0049 444px,#ff0046 456px,#ff0043 468px,#ff0040 480px,#ff003d 492px,#ff003a 504px,#ff0038 516px,#ff0035 528px,#f03 539px)"></div><div style="left:29px;top:156px;width:536px;height:2px;background:linear-gradient(90deg,#00c1ff 0px,#00bcff 12px,#00b7ff 24px,#00b1ff 36px,#00acff 48px,#00a6ff 60px,#00a0ff 72px,#009bff 84px,#0095ff 96px,#008fff 108px,#0089ff 120px,#1982ff 132px,#327cff 144px,#4c75ff 156px,#666fff 168px,#8068ff 180px,#9b61ff 192px,#b75aff 204px,#d353ff 216px,#ef4cff 228px,#ff41f2 240px,#ff34da 252px,#ff29c6 264px,#ff20b5 276px,#ff18a6 288px,#ff129a 300px,#ff0c8f 312px,#ff0685 324px,#ff027c 336px,#ff0079 341px,#ff0074 348px,#ff006d 360px,#ff0067 372px,#ff0061 384px,#ff005c 396px,#ff0057 408px,#ff0053 420px,#ff004f 432px,#ff004b 444px,#ff0047 456px,#f04 468px,#ff0041 480px,#ff003e 492px,#ff003b 504px,#ff0039 516px,#ff0037 528px,#ff0035 536px)"></div><div style="left:30px;top:158px;width:533px;height:2px;background:linear-gradient(90deg,#00bdff 0px,#00b8ff 12px,#00b3ff 24px,#00adff 36px,#00a8ff 48px,#00a2ff 60px,#009cff 72px,#0097ff 84px,#0091ff 96px,#008bff 108px,#0085ff 119px,#1a7eff 132px,#3378ff 144px,#4c72ff 156px,#656bff 168px,#7f65ff 180px,#9a5eff 192px,#b557ff 204px,#d150ff 216px,#ed49ff 228px,#ff3ff5 240px,#ff32dd 252px,#ff27c8 264px,#ff1fb7 276px,#ff17a9 288px,#ff109c 300px,#ff0a91 312px,#ff0587 324px,#ff007d 338px,#ff0076 348px,#ff006f 360px,#ff0069 372px,#ff0063 384px,#ff005e 396px,#ff0059 408px,#ff0054 420px,#ff0050 432px,#ff004c 444px,#ff0049 456px,#ff0045 468px,#ff0042 480px,#ff003f 492px,#ff003d 504px,#ff003a 516px,#ff0038 528px,#ff0037 533px)"></div><div style="left:30px;top:160px;width:531px;height:2px;background:linear-gradient(90deg,#00b9ff 0px,#00b4ff 12px,#00afff 24px,#0af 36px,#00a4ff 48px,#009fff 60px,#09f 72px,#0093ff 84px,#008dff 96px,#0087ff 108px,#0082ff 119px,#197bff 132px,#3175ff 144px,#4a6fff 156px,#6368ff 168px,#7d62ff 180px,#975bff 192px,#b154ff 204px,#cd4dff 216px,#e846ff 228px,#ff3efa 240px,#ff31e1 252px,#ff27cc 264px,#ff1ebb 276px,#ff16ac 288px,#ff0f9f 300px,#ff0a94 312px,#ff0489 324px,#ff0081 336px,#ff0079 348px,#ff0071 360px,#ff006b 372px,#ff0065 384px,#ff005f 396px,#ff005b 408px,#ff0056 420px,#ff0052 432px,#ff004e 444px,#ff004a 456px,#ff0047 468px,#f04 480px,#ff0041 492px,#ff003e 504px,#ff003b 516px,#ff0039 528px,#ff0038 531px)"></div><div style="left:31px;top:162px;width:528px;height:2px;background:linear-gradient(90deg,#00b5ff 0px,#00b0ff 12px,#00abff 24px,#00a6ff 36px,#00a0ff 48px,#009bff 60px,#0095ff 72px,#008fff 84px,#008aff 96px,#0084ff 108px,#007eff 119px,#1a78ff 132px,#3272ff 144px,#4a6bff 156px,#6365ff 168px,#7c5eff 180px,#9658ff 192px,#b051ff 204px,#cb4aff 216px,#e643ff 228px,#ff3bfc 240px,#ff2fe4 252px,#ff25cf 264px,#ff1cbd 276px,#ff15ae 288px,#ff0ea1 300px,#ff0896 312px,#ff038b 324px,#ff0085 333px,#ff007a 348px,#ff0073 360px,#ff006c 372px,#f06 384px,#ff0061 396px,#ff005c 408px,#ff0057 420px,#ff0053 432px,#ff004f 444px,#ff004b 456px,#ff0048 468px,#ff0045 480px,#ff0042 492px,#ff003f 504px,#ff003c 516px,#ff003a 528px)"></div><div style="left:32px;top:164px;width:525px;height:2px;background:linear-gradient(90deg,#00b1ff 0px,#00acff 12px,#00a7ff 24px,#00a2ff 36px,#009cff 48px,#0097ff 60px,#0091ff 72px,#008cff 84px,#0086ff 96px,#0080ff 108px,#007bff 118px,#1b74ff 132px,#326eff 144px,#4a68ff 156px,#6362ff 168px,#7c5bff 180px,#9555ff 192px,#af4eff 204px,#c947ff 216px,#e440ff 228px,#ff39ff 240px,#ff2de6 252px,#ff23d1 264px,#ff1abf 276px,#ff13b0 288px,#ff0da3 300px,#ff0797 312px,#ff028d 324px,#ff0089 330px,#ff0084 336px,#ff007c 348px,#ff0075 360px,#ff006e 372px,#ff0068 384px,#ff0062 396px,#ff005d 408px,#ff0059 420px,#ff0054 432px,#ff0050 444px,#ff004d 456px,#ff0049 468px,#ff0046 480px,#ff0043 492px,#ff0040 504px,#ff003e 516px,#ff003c 525px)"></div><div style="left:33px;top:166px;width:522px;height:2px;background:linear-gradient(90deg,#00adff 0px,#00a8ff 12px,#00a3ff 24px,#009eff 36px,#09f 48px,#0093ff 60px,#008eff 72px,#08f 84px,#0082ff 96px,#007dff 108px,#0078ff 117px,#1c71ff 132px,#336bff 144px,#4b65ff 156px,#635eff 168px,#7b58ff 180px,#9452ff 192px,#ae4bff 204px,#c744ff 216px,#e23dff 228px,#fc36ff 240px,#ff2be9 252px,#ff21d4 264px,#ff19c2 276px,#ff12b2 288px,#ff0ba5 300px,#ff0699 312px,#ff008d 327px,#ff0086 336px,#ff007e 348px,#ff0076 360px,#ff0070 372px,#ff006a 384px,#ff0064 396px,#ff005f 408px,#ff005a 420px,#ff0056 432px,#ff0052 444px,#ff004e 456px,#ff004b 468px,#ff0047 480px,#f04 492px,#ff0041 504px,#ff003f 516px,#ff003d 522px)"></div><div style="left:34px;top:168px;width:519px;height:2px;background:linear-gradient(90deg,#0af 0px,#00a5ff 12px,#009fff 24px,#009aff 36px,#0095ff 48px,#0090ff 60px,#008aff 72px,#0085ff 84px,#007fff 96px,#0079ff 108px,#0075ff 117px,#1d6eff 132px,#3468ff 144px,#4b62ff 156px,#635bff 168px,#7b55ff 180px,#934fff 192px,#ac48ff 204px,#c641ff 216px,#e03bff 228px,#fa34ff 240px,#ff29eb 252px,#ff20d6 264px,#ff17c4 276px,#ff10b5 288px,#ff0aa7 300px,#ff059b 312px,#ff0091 324px,#f08 336px,#ff0080 348px,#ff0078 360px,#ff0071 372px,#ff006b 384px,#ff0065 396px,#ff0060 408px,#ff005c 420px,#ff0057 432px,#ff0053 444px,#ff004f 456px,#ff004c 468px,#ff0049 480px,#ff0045 492px,#ff0043 504px,#ff0040 516px,#ff003f 519px)"></div><div style="left:35px;top:170px;width:516px;height:2px;background:linear-gradient(90deg,#00a6ff 0px,#00a1ff 12px,#009cff 24px,#0097ff 36px,#0091ff 48px,#008cff 60px,#0087ff 72px,#0081ff 84px,#007cff 96px,#0076ff 108px,#0072ff 116px,#1d6aff 132px,#3465ff 144px,#4b5eff 156px,#6258ff 168px,#7a52ff 180px,#934cff 192px,#ab45ff 204px,#c43fff 216px,#de38ff 228px,#f831ff 240px,#ff27ed 252px,#ff1ed8 264px,#ff16c6 276px,#ff0fb7 288px,#ff09a9 300px,#ff049d 312px,#ff0095 321px,#ff008a 336px,#ff0081 348px,#ff007a 360px,#ff0073 372px,#ff006d 384px,#ff0067 396px,#ff0062 408px,#ff005d 420px,#ff0059 432px,#ff0054 444px,#ff0051 456px,#ff004d 468px,#ff004a 480px,#ff0047 492px,#f04 504px,#ff0041 516px)"></div><div style="left:36px;top:172px;width:513px;height:2px;background:linear-gradient(90deg,#00a2ff 0px,#009dff 12px,#0098ff 24px,#0093ff 36px,#008eff 48px,#0089ff 60px,#0083ff 72px,#007eff 84px,#0078ff 96px,#0073ff 108px,#006fff 115px,#086dff 120px,#1e67ff 132px,#3561ff 144px,#4b5bff 156px,#6255ff 168px,#7a4fff 180px,#9249ff 192px,#aa43ff 204px,#c33cff 216px,#dc35ff 228px,#f52fff 240px,#ff25f0 252px,#ff1cda 264px,#ff14c8 276px,#ff0db9 288px,#ff08ab 300px,#ff029f 312px,#ff009a 318px,#ff0095 324px,#ff008b 336px,#ff0083 348px,#ff007b 360px,#ff0074 372px,#ff006e 384px,#ff0068 396px,#ff0063 408px,#ff005e 420px,#ff005a 432px,#ff0056 444px,#ff0052 456px,#ff004e 468px,#ff004b 480px,#ff0048 492px,#ff0045 504px,#ff0043 513px)"></div><div style="left:37px;top:174px;width:510px;height:2px;background:linear-gradient(90deg,#009fff 0px,#009aff 12px,#0095ff 24px,#0090ff 36px,#008bff 48px,#0085ff 60px,#0080ff 72px,#007bff 84px,#0075ff 96px,#0070ff 108px,#006dff 115px,#096aff 120px,#1f64ff 132px,#355fff 144px,#4c59ff 156px,#6253ff 168px,#794cff 180px,#9146ff 192px,#a940ff 204px,#c139ff 216px,#da33ff 228px,#f32cff 240px,#ff24f2 252px,#ff1bdd 264px,#ff13cb 276px,#ff0cbb 288px,#ff06ad 300px,#ff009e 315px,#ff0097 324px,#ff008d 336px,#ff0085 348px,#ff007d 360px,#ff0076 372px,#ff0070 384px,#ff006a 396px,#ff0065 408px,#ff0060 420px,#ff005b 432px,#ff0057 444px,#ff0053 456px,#ff004f 468px,#ff004c 480px,#ff0049 492px,#ff0046 504px,#ff0045 510px)"></div><div style="left:37px;top:176px;width:508px;height:2px;background:linear-gradient(90deg,#009cff 0px,#0097ff 12px,#0092ff 24px,#008dff 36px,#08f 48px,#0083ff 60px,#007dff 72px,#0078ff 84px,#0073ff 96px,#006dff 108px,#006aff 115px,#0968ff 120px,#1e62ff 132px,#345cff 144px,#4a56ff 156px,#6050ff 168px,#774aff 180px,#8e44ff 192px,#a63eff 204px,#be38ff 216px,#d631ff 228px,#ef2aff 240px,#ff23f6 252px,#ff1ae1 264px,#ff12ce 276px,#ff0bbe 288px,#ff05b0 300px,#ff00a3 313px,#f09 324px,#ff0090 336px,#ff0087 348px,#ff007f 360px,#ff0078 372px,#ff0072 384px,#ff006c 396px,#f06 408px,#ff0062 420px,#ff005d 432px,#ff0059 444px,#f05 456px,#ff0051 468px,#ff004e 480px,#ff004a 492px,#ff0047 504px,#ff0046 508px)"></div><div style="left:38px;top:178px;width:505px;height:2px;background:linear-gradient(90deg,#09f 0px,#0094ff 12px,#008fff 24px,#008aff 36px,#0085ff 48px,#0080ff 60px,#007aff 72px,#0075ff 84px,#0070ff 96px,#006aff 108px,#0067ff 114px,#0a65ff 120px,#1f5fff 132px,#3459ff 144px,#4a54ff 156px,#604eff 168px,#7748ff 180px,#8e42ff 192px,#a53bff 204px,#bc35ff 216px,#d42fff 228px,#ed28ff 240px,#ff21f9 252px,#ff18e3 264px,#ff10d0 276px,#ff0ac0 288px,#ff04b2 300px,#ff00a8 310px,#ff009b 324px,#ff0091 336px,#ff0089 348px,#ff0081 360px,#ff007a 372px,#ff0073 384px,#ff006d 396px,#ff0068 408px,#ff0063 420px,#ff005e 432px,#ff005a 444px,#ff0056 456px,#ff0052 468px,#ff004f 480px,#ff004b 492px,#ff0048 504px,#ff0048 505px)"></div><div style="left:39px;top:180px;width:502px;height:2px;background:linear-gradient(90deg,#0095ff 0px,#0090ff 12px,#008cff 24px,#0087ff 36px,#0082ff 48px,#007cff 60px,#07f 72px,#0072ff 84px,#006dff 96px,#0067ff 108px,#0065ff 114px,#0b62ff 120px,#205cff 132px,#3557ff 144px,#4a51ff 156px,#604bff 168px,#7645ff 180px,#8d3fff 192px,#a439ff 204px,#b3f 216px,#d32cff 228px,#eb26ff 240px,#ff1ffb 252px,#ff16e5 264px,#ff0fd2 276px,#ff09c2 288px,#ff03b4 300px,#ff00ad 307px,#ff00a8 312px,#ff009d 324px,#ff0093 336px,#ff008a 348px,#ff0082 360px,#ff007b 372px,#ff0075 384px,#ff006f 396px,#ff0069 408px,#ff0064 420px,#ff0060 432px,#ff005b 444px,#ff0057 456px,#ff0053 468px,#ff0050 480px,#ff004d 492px,#ff004a 502px)"></div><div style="left:40px;top:182px;width:499px;height:2px;background:linear-gradient(90deg,#0092ff 0px,#008dff 12px,#08f 24px,#0084ff 36px,#007fff 48px,#0079ff 60px,#0074ff 72px,#006fff 84px,#006aff 96px,#0064ff 108px,#0062ff 113px,#0c5fff 120px,#205aff 132px,#3554ff 144px,#4b4eff 156px,#6048ff 168px,#7643ff 180px,#8c3dff 192px,#a337ff 204px,#ba30ff 216px,#d12aff 228px,#e924ff 240px,#ff1dfd 252px,#ff15e7 264px,#ff0dd4 276px,#ff07c4 288px,#ff02b6 300px,#ff00b2 304px,#f0a 312px,#ff009f 324px,#ff0095 336px,#ff008c 348px,#ff0084 360px,#ff007d 372px,#ff0076 384px,#ff0070 396px,#ff006b 408px,#f06 420px,#ff0061 432px,#ff005d 444px,#ff0058 456px,#f05 468px,#ff0051 480px,#ff004e 492px,#ff004c 499px)"></div><div style="left:41px;top:184px;width:496px;height:2px;background:linear-gradient(90deg,#008fff 0px,#008aff 12px,#0085ff 24px,#0081ff 36px,#007cff 48px,#07f 60px,#0071ff 72px,#006cff 84px,#0067ff 96px,#0062ff 108px,#0060ff 112px,#0d5cff 120px,#2157ff 132px,#3651ff 144px,#4b4cff 156px,#6046ff 168px,#7640ff 180px,#8c3aff 192px,#a234ff 204px,#b82eff 216px,#cf28ff 228px,#e722ff 240px,#fe1bff 252px,#ff13e9 264px,#ff0cd7 276px,#ff06c6 288px,#ff00b7 301px,#ff00ac 312px,#ff00a0 324px,#ff0097 336px,#ff008e 348px,#ff0086 360px,#ff007e 372px,#ff0078 384px,#ff0072 396px,#ff006c 408px,#ff0067 420px,#ff0062 432px,#ff005e 444px,#ff005a 456px,#ff0056 468px,#ff0052 480px,#ff004f 492px,#ff004e 496px)"></div><div style="left:42px;top:186px;width:493px;height:2px;background:linear-gradient(90deg,#008cff 0px,#0087ff 12px,#0082ff 24px,#007eff 36px,#0079ff 48px,#0074ff 60px,#006fff 72px,#006aff 84px,#0064ff 96px,#005dff 112px,#0e5aff 120px,#2254ff 132px,#364fff 144px,#4b49ff 156px,#6044ff 168px,#753eff 180px,#8b38ff 192px,#a132ff 204px,#b72cff 216px,#ce26ff 228px,#e520ff 240px,#fc19ff 252px,#ff11ec 264px,#ff0bd9 276px,#ff05c8 288px,#ff00bc 298px,#ff00ad 312px,#ff00a2 324px,#ff0098 336px,#ff008f 348px,#ff0087 360px,#ff0080 372px,#ff0079 384px,#ff0073 396px,#ff006d 408px,#ff0068 420px,#ff0064 432px,#ff005f 444px,#ff005b 456px,#ff0057 468px,#ff0053 480px,#ff0050 492px,#ff0050 493px)"></div><div style="left:43px;top:188px;width:490px;height:2px;background:linear-gradient(90deg,#0089ff 0px,#0084ff 12px,#0080ff 24px,#007bff 36px,#0076ff 48px,#0071ff 60px,#006cff 72px,#0067ff 84px,#0062ff 96px,#005bff 111px,#0f57ff 120px,#2352ff 132px,#374cff 144px,#4b47ff 156px,#6041ff 168px,#753bff 180px,#8a36ff 192px,#a030ff 204px,#b62aff 216px,#cc24ff 228px,#e31eff 240px,#fa17ff 252px,#ff10ee 264px,#ff09db 276px,#ff03ca 288px,#ff00c1 295px,#ff00bc 300px,#ff00af 312px,#ff00a4 324px,#ff009a 336px,#ff0091 348px,#ff0089 360px,#ff0081 372px,#ff007b 384px,#ff0075 396px,#ff006f 408px,#ff006a 420px,#ff0065 432px,#ff0060 444px,#ff005c 456px,#ff0058 468px,#f05 480px,#ff0052 490px)"></div><div style="left:44px;top:190px;width:488px;height:2px;background:linear-gradient(90deg,#0086ff 0px,#0081ff 12px,#007dff 24px,#0078ff 36px,#0073ff 48px,#006eff 60px,#0069ff 72px,#0064ff 84px,#005fff 96px,#0059ff 110px,#1055ff 120px,#234fff 132px,#374aff 144px,#4b44ff 156px,#603fff 168px,#7539ff 180px,#8a33ff 192px,#9f2eff 204px,#b528ff 216px,#cb22ff 228px,#e11cff 240px,#f816ff 252px,#ff0ef0 264px,#ff08dd 276px,#ff02cc 288px,#ff00c7 292px,#ff00be 300px,#ff00b1 312px,#ff00a6 324px,#ff009c 336px,#ff0093 348px,#ff008a 360px,#ff0083 372px,#ff007c 384px,#ff0076 396px,#ff0070 408px,#ff006b 420px,#f06 432px,#ff0062 444px,#ff005d 456px,#ff0059 468px,#ff0056 480px,#ff0053 488px)"></div><div style="left:45px;top:192px;width:485px;height:2px;background:linear-gradient(90deg,#0083ff 0px,#007fff 12px,#007aff 24px,#0075ff 36px,#0070ff 48px,#006cff 60px,#0067ff 72px,#0062ff 84px,#005dff 96px,#0057ff 110px,#1052ff 120px,#244dff 132px,#3848ff 144px,#4b42ff 156px,#603dff 168px,#7437ff 180px,#8931ff 192px,#9e2cff 204px,#b426ff 216px,#c920ff 228px,#e01aff 240px,#f614ff 252px,#ff0df2 264px,#ff06df 276px,#f0c 289px,#ff00c0 300px,#ff00b3 312px,#ff00a8 324px,#ff009d 336px,#ff0094 348px,#ff008c 360px,#ff0084 372px,#ff007e 384px,#f07 396px,#ff0072 408px,#ff006c 420px,#ff0067 432px,#ff0063 444px,#ff005f 456px,#ff005b 468px,#ff0057 480px,#f05 485px)"></div><div style="left:46px;top:194px;width:482px;height:2px;background:linear-gradient(90deg,#0080ff 0px,#007cff 12px,#07f 24px,#0073ff 36px,#006eff 48px,#0069ff 60px,#0064ff 72px,#005fff 84px,#005aff 96px,#05f 109px,#1150ff 120px,#254bff 132px,#3845ff 144px,#4c40ff 156px,#603aff 168px,#7435ff 180px,#892fff 192px,#9d2aff 204px,#b324ff 216px,#c81eff 228px,#de18ff 240px,#f412ff 252px,#ff0bf4 264px,#ff05e1 276px,#ff00d2 286px,#ff00c1 300px,#ff00b5 312px,#ff00a9 324px,#ff009f 336px,#ff0096 348px,#ff008e 360px,#ff0086 372px,#ff007f 384px,#ff0079 396px,#ff0073 408px,#ff006e 420px,#ff0069 432px,#ff0064 444px,#ff0060 456px,#ff005c 468px,#ff0058 480px,#ff0057 482px)"></div><div style="left:47px;top:196px;width:479px;height:2px;background:linear-gradient(90deg,#007eff 0px,#0079ff 12px,#0075ff 24px,#0070ff 36px,#006bff 48px,#06f 60px,#0062ff 72px,#005dff 84px,#0058ff 96px,#0052ff 108px,#124dff 120px,#2548ff 132px,#3843ff 144px,#4c3eff 156px,#6038ff 168px,#7433ff 180px,#882dff 192px,#9d28ff 204px,#b222ff 216px,#c71cff 228px,#dc16ff 240px,#f210ff 252px,#ff0af6 264px,#ff03e3 276px,#ff00d8 283px,#ff00d2 288px,#ff00c3 300px,#ff00b6 312px,#ff00ab 324px,#ff00a1 336px,#ff0097 348px,#ff008f 360px,#ff0087 372px,#ff0081 384px,#ff007a 396px,#ff0074 408px,#ff006f 420px,#ff006a 432px,#ff0065 444px,#ff0061 456px,#ff005d 468px,#ff005a 479px)"></div><div style="left:48px;top:198px;width:476px;height:2px;background:linear-gradient(90deg,#007bff 0px,#07f 12px,#0072ff 24px,#006dff 36px,#0069ff 48px,#0064ff 60px,#005fff 72px,#005aff 84px,#05f 96px,#0050ff 108px,#134bff 120px,#2646ff 132px,#3941ff 144px,#4c3cff 156px,#6036ff 168px,#7331ff 180px,#872bff 192px,#9c26ff 204px,#b020ff 216px,#c51aff 228px,#db14ff 240px,#f00eff 252px,#ff08f8 264px,#ff02e5 276px,#ff00de 280px,#ff00d4 288px,#ff00c5 300px,#ff00b8 312px,#ff00ad 324px,#ff00a2 336px,#f09 348px,#ff0091 360px,#ff0089 372px,#ff0082 384px,#ff007c 396px,#ff0076 408px,#ff0070 420px,#ff006b 432px,#ff0067 444px,#ff0062 456px,#ff005e 468px,#ff005c 476px)"></div><div style="left:49px;top:200px;width:473px;height:2px;background:linear-gradient(90deg,#0079ff 0px,#0074ff 12px,#006fff 24px,#006bff 36px,#06f 48px,#0062ff 60px,#005dff 72px,#0058ff 84px,#0053ff 96px,#004eff 107px,#1449ff 120px,#2644ff 132px,#393fff 144px,#4c39ff 156px,#5f34ff 168px,#732fff 180px,#8729ff 192px,#9b24ff 204px,#af1eff 216px,#c418ff 228px,#d913ff 240px,#ee0dff 252px,#ff07fa 264px,#ff00e4 278px,#ff00d6 288px,#ff00c7 300px,#ff00ba 312px,#ff00ae 324px,#ff00a4 336px,#ff009b 348px,#ff0092 360px,#ff008a 372px,#ff0083 384px,#ff007d 396px,#f07 408px,#ff0072 420px,#ff006d 432px,#ff0068 444px,#ff0063 456px,#ff005f 468px,#ff005e 473px)"></div><div style="left:50px;top:202px;width:470px;height:2px;background:linear-gradient(90deg,#0076ff 0px,#0072ff 12px,#006dff 24px,#0068ff 36px,#0064ff 48px,#005fff 60px,#005aff 72px,#0056ff 84px,#0051ff 96px,#004dff 106px,#1547ff 120px,#2742ff 132px,#3a3dff 144px,#4c37ff 156px,#5f32ff 168px,#732dff 180px,#8627ff 192px,#9a22ff 204px,#ae1cff 216px,#c317ff 228px,#d811ff 240px,#ed0bff 252px,#ff05fc 264px,#ff00eb 275px,#ff00d8 288px,#ff00c9 300px,#ff00bc 312px,#ff00b0 324px,#ff00a6 336px,#ff009c 348px,#ff0094 360px,#ff008c 372px,#ff0085 384px,#ff007e 396px,#ff0078 408px,#ff0073 420px,#ff006e 432px,#ff0069 444px,#ff0065 456px,#ff0060 468px,#ff0060 470px)"></div><div style="left:51px;top:204px;width:467px;height:2px;background:linear-gradient(90deg,#0073ff 0px,#006fff 12px,#006bff 24px,#06f 36px,#0061ff 48px,#005dff 60px,#0058ff 72px,#0053ff 84px,#004fff 96px,#004bff 106px,#1545ff 120px,#2840ff 132px,#3a3bff 144px,#4d35ff 156px,#5f30ff 168px,#722bff 180px,#8626ff 192px,#9a20ff 204px,#ad1bff 216px,#c215ff 228px,#d60fff 240px,#eb0aff 252px,#ff04fe 264px,#ff00f1 272px,#ff00eb 276px,#ff00da 288px,#ff00cb 300px,#ff00bd 312px,#ff00b2 324px,#ff00a7 336px,#ff009e 348px,#ff0095 360px,#ff008d 372px,#ff0086 384px,#ff0080 396px,#ff007a 408px,#ff0074 420px,#ff006f 432px,#ff006a 444px,#f06 456px,#ff0062 467px)"></div><div style="left:52px;top:206px;width:464px;height:2px;background:linear-gradient(90deg,#0071ff 0px,#006dff 12px,#0068ff 24px,#0064ff 36px,#005fff 48px,#005bff 60px,#0056ff 72px,#0051ff 84px,#004cff 96px,#0049ff 105px,#1643ff 120px,#283eff 132px,#3a39ff 144px,#4d33ff 156px,#5f2eff 168px,#7229ff 180px,#8524ff 192px,#991eff 204px,#ac19ff 216px,#c013ff 228px,#d50eff 240px,#e908ff 252px,#fe02ff 264px,#ff00f8 269px,#ff00ec 276px,#ff00db 288px,#f0c 300px,#ff00bf 312px,#ff00b3 324px,#ff00a9 336px,#ff009f 348px,#ff0097 360px,#ff008f 372px,#f08 384px,#ff0081 396px,#ff007b 408px,#ff0075 420px,#ff0070 432px,#ff006b 444px,#ff0067 456px,#ff0064 464px)"></div><div style="left:53px;top:208px;width:461px;height:2px;background:linear-gradient(90deg,#006fff 0px,#006aff 12px,#06f 24px,#0061ff 36px,#005dff 48px,#0058ff 60px,#0054ff 72px,#004fff 84px,#004aff 96px,#0047ff 104px,#1741ff 120px,#293cff 132px,#3b37ff 144px,#4d32ff 156px,#5f2cff 168px,#7227ff 180px,#8522ff 192px,#981dff 204px,#ac17ff 216px,#bf12ff 228px,#d30cff 240px,#e707ff 252px,#f0f 266px,#f0e 276px,#f0d 288px,#ff00ce 300px,#ff00c1 312px,#ff00b5 324px,#f0a 336px,#ff00a1 348px,#ff0098 360px,#ff0090 372px,#ff0089 384px,#ff0082 396px,#ff007c 408px,#f07 420px,#ff0072 432px,#ff006d 444px,#ff0068 456px,#f06 461px)"></div><div style="left:54px;top:210px;width:458px;height:2px;background:linear-gradient(90deg,#006cff 0px,#0068ff 12px,#0064ff 24px,#005fff 36px,#005bff 48px,#0056ff 60px,#0052ff 72px,#004dff 84px,#0048ff 96px,#0045ff 104px,#0643ff 108px,#183fff 120px,#293aff 132px,#3b35ff 144px,#4d30ff 156px,#5f2bff 168px,#7225ff 180px,#8420ff 192px,#971bff 204px,#ab16ff 216px,#be10ff 228px,#d20bff 240px,#e605ff 252px,#f800ff 263px,#ff00f0 276px,#ff00df 288px,#ff00d0 300px,#ff00c3 312px,#ff00b7 324px,#ff00ac 336px,#ff00a2 348px,#ff009a 360px,#ff0092 372px,#ff008b 384px,#ff0084 396px,#ff007e 408px,#ff0078 420px,#ff0073 432px,#ff006e 444px,#ff0069 456px,#ff0069 458px)"></div><div style="left:55px;top:212px;width:455px;height:2px;background:linear-gradient(90deg,#006aff 0px,#06f 12px,#0061ff 24px,#005dff 36px,#0059ff 48px,#0054ff 60px,#004fff 72px,#004bff 84px,#0046ff 96px,#0043ff 103px,#0741ff 108px,#183dff 120px,#2a38ff 132px,#3b33ff 144px,#4d2eff 156px,#5f29ff 168px,#7124ff 180px,#841fff 192px,#9719ff 204px,#aa14ff 216px,#bd0fff 228px,#d009ff 240px,#e404ff 252px,#f100ff 260px,#f800ff 264px,#ff00f2 276px,#ff00e1 288px,#ff00d2 300px,#ff00c4 312px,#ff00b8 324px,#ff00ae 336px,#ff00a4 348px,#ff009b 360px,#ff0093 372px,#ff008c 384px,#ff0085 396px,#ff007f 408px,#ff0079 420px,#ff0074 432px,#ff006f 444px,#ff006b 455px)"></div><div style="left:56px;top:214px;width:452px;height:2px;background:linear-gradient(90deg,#0068ff 0px,#0063ff 12px,#005fff 24px,#005bff 36px,#0056ff 48px,#0052ff 60px,#004dff 72px,#0049ff 84px,#04f 96px,#0042ff 102px,#083fff 108px,#193bff 120px,#2a36ff 132px,#3c31ff 144px,#4d2cff 156px,#5f27ff 168px,#7122ff 180px,#841dff 192px,#9618ff 204px,#a912ff 216px,#bc0dff 228px,#cf08ff 240px,#e302ff 252px,#eb00ff 257px,#f700ff 264px,#ff00f4 276px,#ff00e3 288px,#ff00d3 300px,#ff00c6 312px,#ff00ba 324px,#ff00af 336px,#ff00a5 348px,#ff009d 360px,#ff0095 372px,#ff008d 384px,#ff0087 396px,#ff0080 408px,#ff007b 420px,#ff0075 432px,#ff0070 444px,#ff006d 452px)"></div><div style="left:57px;top:216px;width:449px;height:2px;background:linear-gradient(90deg,#06f 0px,#0061ff 12px,#005dff 24px,#0059ff 36px,#0054ff 48px,#0050ff 60px,#004bff 72px,#0047ff 84px,#0042ff 96px,#0040ff 102px,#093eff 108px,#1a39ff 120px,#2b34ff 132px,#3c2fff 144px,#4d2aff 156px,#5f25ff 168px,#7120ff 180px,#831bff 192px,#9516ff 204px,#a811ff 216px,#bb0cff 228px,#ce06ff 240px,#e400ff 254px,#f500ff 264px,#ff00f6 276px,#ff00e4 288px,#ff00d5 300px,#ff00c8 312px,#ff00bc 324px,#ff00b1 336px,#ff00a7 348px,#ff009e 360px,#ff0096 372px,#ff008f 384px,#f08 396px,#ff0082 408px,#ff007c 420px,#ff0076 432px,#ff0071 444px,#ff0070 449px)"></div><div style="left:58px;top:218px;width:446px;height:2px;background:linear-gradient(90deg,#0063ff 0px,#005fff 12px,#005bff 24px,#0057ff 36px,#0052ff 48px,#004eff 60px,#0049ff 72px,#0045ff 84px,#0040ff 96px,#003eff 101px,#0a3cff 108px,#1a37ff 120px,#2b32ff 132px,#3c2dff 144px,#4e29ff 156px,#5f24ff 168px,#711fff 180px,#831aff 192px,#9515ff 204px,#a70fff 216px,#ba0aff 228px,#cd05ff 240px,#de00ff 251px,#f300ff 264px,#ff00f8 276px,#ff00e6 288px,#ff00d7 300px,#ff00c9 312px,#ff00bd 324px,#ff00b2 336px,#ff00a8 348px,#ff00a0 360px,#ff0097 372px,#ff0090 384px,#ff0089 396px,#ff0083 408px,#ff007d 420px,#ff0078 432px,#ff0073 444px,#ff0072 446px)"></div><div style="left:59px;top:220px;width:443px;height:2px;background:linear-gradient(90deg,#0061ff 0px,#005dff 12px,#0059ff 24px,#05f 36px,#0050ff 48px,#004cff 60px,#0047ff 72px,#0043ff 84px,#003eff 96px,#003dff 100px,#0b3aff 108px,#1b35ff 120px,#2c31ff 132px,#3d2cff 144px,#4e27ff 156px,#5f22ff 168px,#701dff 180px,#8218ff 192px,#9413ff 204px,#a60eff 216px,#b909ff 228px,#cb04ff 240px,#d800ff 248px,#de00ff 252px,#f100ff 264px,#ff00f9 276px,#ff00e8 288px,#ff00d9 300px,#ff00cb 312px,#ff00bf 324px,#ff00b4 336px,#f0a 348px,#ff00a1 360px,#f09 372px,#ff0091 384px,#ff008b 396px,#ff0084 408px,#ff007e 420px,#ff0079 432px,#ff0074 443px)"></div><div style="left:60px;top:222px;width:440px;height:2px;background:linear-gradient(90deg,#005fff 0px,#005bff 12px,#0057ff 24px,#0053ff 36px,#004eff 48px,#004aff 60px,#0046ff 72px,#0041ff 84px,#003bff 100px,#0b38ff 108px,#1c33ff 120px,#2c2fff 132px,#3d2aff 144px,#4e25ff 156px,#5f20ff 168px,#701cff 180px,#8217ff 192px,#9412ff 204px,#a60dff 216px,#b807ff 228px,#ca02ff 240px,#d200ff 245px,#d0f 252px,#f000ff 264px,#ff00fb 276px,#ff00ea 288px,#ff00da 300px,#ff00cd 312px,#ff00c0 324px,#ff00b5 336px,#ff00ab 348px,#ff00a2 360px,#ff009a 372px,#ff0093 384px,#ff008c 396px,#ff0085 408px,#ff0080 420px,#ff007a 432px,#f07 440px)"></div><div style="left:61px;top:224px;width:437px;height:2px;background:linear-gradient(90deg,#005dff 0px,#0059ff 12px,#05f 24px,#0051ff 36px,#004cff 48px,#0048ff 60px,#04f 72px,#003fff 84px,#003aff 99px,#0c36ff 108px,#1c32ff 120px,#2d2dff 132px,#3d28ff 144px,#4e24ff 156px,#5f1fff 168px,#701aff 180px,#8115ff 192px,#9310ff 204px,#a50bff 216px,#b706ff 228px,#c0f 242px,#db00ff 252px,#e0f 264px,#ff00fd 276px,#ff00eb 288px,#ff00dc 300px,#ff00ce 312px,#ff00c2 324px,#ff00b7 336px,#ff00ad 348px,#ff00a4 360px,#ff009c 372px,#ff0094 384px,#ff008d 396px,#ff0087 408px,#ff0081 420px,#ff007b 432px,#ff0079 437px)"></div><div style="left:62px;top:226px;width:435px;height:2px;background:linear-gradient(90deg,#005bff 0px,#0057ff 12px,#0053ff 24px,#004fff 36px,#004bff 48px,#0046ff 60px,#0042ff 72px,#003eff 84px,#0038ff 98px,#0d35ff 108px,#1d30ff 120px,#2d2bff 132px,#3d27ff 144px,#4e22ff 156px,#5f1dff 168px,#7019ff 180px,#8114ff 192px,#920fff 204px,#a40aff 216px,#b605ff 228px,#c600ff 239px,#da00ff 252px,#ed00ff 264px,#f0f 276px,#ff00ed 288px,#ff00de 300px,#ff00d0 312px,#ff00c4 324px,#ff00b8 336px,#ff00ae 348px,#ff00a5 360px,#ff009d 372px,#ff0095 384px,#ff008e 396px,#f08 408px,#ff0082 420px,#ff007d 432px,#ff007b 435px)"></div><div style="left:64px;top:228px;width:431px;height:2px;background:linear-gradient(90deg,#0059ff 0px,#05f 12px,#0051ff 24px,#004dff 36px,#0048ff 48px,#04f 60px,#0040ff 72px,#003bff 84px,#0037ff 96px,#0f33ff 108px,#1f2eff 120px,#2f29ff 132px,#3f25ff 144px,#5020ff 156px,#601bff 168px,#7117ff 180px,#8212ff 192px,#930dff 204px,#a508ff 216px,#b603ff 228px,#c100ff 235px,#c800ff 240px,#da00ff 252px,#ed00ff 264px,#f0f 276px,#ff00ed 288px,#ff00de 300px,#ff00d0 312px,#ff00c4 324px,#ff00b9 336px,#ff00af 348px,#ff00a6 360px,#ff009e 372px,#ff0096 384px,#ff008f 396px,#ff0089 408px,#ff0083 420px,#ff007e 431px)"></div><div style="left:65px;top:230px;width:428px;height:2px;background:linear-gradient(90deg,#0057ff 0px,#0053ff 12px,#004fff 24px,#004bff 36px,#0046ff 48px,#0042ff 60px,#003eff 72px,#003aff 84px,#0035ff 96px,#1031ff 108px,#1f2cff 120px,#2f28ff 132px,#3f23ff 144px,#501fff 156px,#601aff 168px,#7115ff 180px,#8210ff 192px,#930cff 204px,#a407ff 216px,#b502ff 228px,#b0f 232px,#c700ff 240px,#d900ff 252px,#eb00ff 264px,#fd00ff 276px,#ff00ef 288px,#ff00e0 300px,#ff00d2 312px,#ff00c6 324px,#f0b 336px,#ff00b1 348px,#ff00a7 360px,#ff009f 372px,#ff0098 384px,#ff0091 396px,#ff008a 408px,#ff0084 420px,#ff0080 428px)"></div><div style="left:66px;top:232px;width:425px;height:2px;background:linear-gradient(90deg,#05f 0px,#0051ff 12px,#004dff 24px,#0049ff 36px,#0045ff 48px,#0041ff 60px,#003cff 72px,#0038ff 84px,#0034ff 95px,#102fff 108px,#202bff 120px,#3026ff 132px,#4022ff 144px,#501dff 156px,#6019ff 168px,#7114ff 180px,#810fff 192px,#920aff 204px,#a305ff 216px,#b600ff 229px,#c600ff 240px,#d800ff 252px,#ea00ff 264px,#fc00ff 276px,#ff00f1 288px,#ff00e1 300px,#ff00d4 312px,#ff00c7 324px,#ff00bc 336px,#ff00b2 348px,#ff00a9 360px,#ff00a1 372px,#f09 384px,#ff0092 396px,#ff008b 408px,#ff0085 420px,#ff0083 425px)"></div><div style="left:67px;top:234px;width:422px;height:2px;background:linear-gradient(90deg,#0053ff 0px,#004fff 12px,#004bff 24px,#0047ff 36px,#0043ff 48px,#003fff 60px,#003bff 72px,#0036ff 84px,#03f 94px,#112eff 108px,#2129ff 120px,#3025ff 132px,#4020ff 144px,#501cff 156px,#6017ff 168px,#7012ff 180px,#810eff 192px,#9209ff 204px,#a204ff 216px,#b100ff 226px,#c500ff 240px,#d600ff 252px,#e800ff 264px,#fa00ff 276px,#ff00f2 288px,#ff00e3 300px,#ff00d5 312px,#ff00c9 324px,#ff00be 336px,#ff00b3 348px,#f0a 360px,#ff00a2 372px,#ff009a 384px,#ff0093 396px,#ff008d 408px,#ff0086 420px,#ff0086 422px)"></div><div style="left:68px;top:236px;width:419px;height:2px;background:linear-gradient(90deg,#0051ff 0px,#004dff 12px,#0049ff 24px,#0045ff 36px,#0041ff 48px,#003dff 60px,#0039ff 72px,#0035ff 84px,#0031ff 94px,#122cff 108px,#2128ff 120px,#3123ff 132px,#401fff 144px,#501aff 156px,#6016ff 168px,#7011ff 180px,#800cff 192px,#9108ff 204px,#a203ff 216px,#ac00ff 223px,#b300ff 228px,#c400ff 240px,#d500ff 252px,#e700ff 264px,#f800ff 276px,#ff00f4 288px,#ff00e5 300px,#ff00d7 312px,#ff00ca 324px,#ff00bf 336px,#ff00b5 348px,#ff00ac 360px,#ff00a3 372px,#ff009b 384px,#ff0094 396px,#ff008e 408px,#f08 419px)"></div><div style="left:69px;top:238px;width:416px;height:2px;background:linear-gradient(90deg,#0050ff 0px,#004cff 12px,#0048ff 24px,#04f 36px,#0040ff 48px,#003bff 60px,#0037ff 72px,#03f 84px,#0030ff 93px,#132bff 108px,#2226ff 120px,#3122ff 132px,#401dff 144px,#5019ff 156px,#6014ff 168px,#7010ff 180px,#800bff 192px,#9006ff 204px,#a102ff 216px,#a700ff 220px,#b200ff 228px,#c300ff 240px,#d400ff 252px,#e500ff 264px,#f700ff 276px,#ff00f6 288px,#ff00e6 300px,#ff00d8 312px,#f0c 324px,#ff00c1 336px,#ff00b6 348px,#ff00ad 360px,#ff00a5 372px,#ff009d 384px,#ff0096 396px,#ff008f 408px,#ff008b 416px)"></div><div style="left:70px;top:240px;width:413px;height:2px;background:linear-gradient(90deg,#004eff 0px,#004aff 12px,#0046ff 24px,#0042ff 36px,#003eff 48px,#003aff 60px,#0036ff 72px,#0032ff 84px,#002fff 92px,#1329ff 108px,#2225ff 120px,#3120ff 132px,#411cff 144px,#5018ff 156px,#6013ff 168px,#700eff 180px,#800aff 192px,#9005ff 204px,#a200ff 217px,#b100ff 228px,#c200ff 240px,#d300ff 252px,#e400ff 264px,#f500ff 276px,#ff00f7 288px,#ff00e8 300px,#ff00da 312px,#ff00cd 324px,#ff00c2 336px,#ff00b8 348px,#ff00ae 360px,#ff00a6 372px,#ff009e 384px,#ff0097 396px,#ff0090 408px,#ff008e 413px)"></div><div style="left:71px;top:242px;width:410px;height:2px;background:linear-gradient(90deg,#004cff 0px,#0048ff 12px,#04f 24px,#0040ff 36px,#003cff 48px,#0038ff 60px,#0034ff 72px,#0030ff 84px,#002dff 92px,#052cff 96px,#1428ff 108px,#2323ff 120px,#321fff 132px,#411bff 144px,#5016ff 156px,#6012ff 168px,#700dff 180px,#7f09ff 192px,#8f04ff 204px,#9d00ff 214px,#b000ff 228px,#c100ff 240px,#d200ff 252px,#e300ff 264px,#f400ff 276px,#ff00f9 288px,#ff00e9 300px,#ff00db 312px,#ff00cf 324px,#ff00c3 336px,#ff00b9 348px,#ff00b0 360px,#ff00a7 372px,#ff009f 384px,#ff0098 396px,#ff0091 408px,#ff0090 410px)"></div><div style="left:72px;top:244px;width:407px;height:2px;background:linear-gradient(90deg,#004aff 0px,#0047ff 12px,#0043ff 24px,#003fff 36px,#003bff 48px,#0037ff 60px,#03f 72px,#002eff 84px,#002cff 91px,#062aff 96px,#1426ff 108px,#2322ff 120px,#321eff 132px,#4119ff 144px,#5015ff 156px,#6010ff 168px,#6f0cff 180px,#7f07ff 192px,#8f03ff 204px,#90f 211px,#9f00ff 216px,#af00ff 228px,#c000ff 240px,#d000ff 252px,#e100ff 264px,#f200ff 276px,#ff00fb 288px,#ff00eb 300px,#f0d 312px,#ff00d0 324px,#ff00c5 336px,#f0b 348px,#ff00b1 360px,#ff00a9 372px,#ff00a1 384px,#f09 396px,#ff0093 407px)"></div><div style="left:74px;top:246px;width:403px;height:2px;background:linear-gradient(90deg,#0048ff 0px,#0045ff 12px,#0041ff 24px,#003dff 36px,#0039ff 48px,#0035ff 60px,#0031ff 72px,#002dff 84px,#002bff 89px,#0829ff 96px,#1624ff 108px,#2520ff 120px,#341cff 132px,#4318ff 144px,#5213ff 156px,#610fff 168px,#700aff 180px,#8006ff 192px,#9400ff 207px,#a000ff 216px,#b000ff 228px,#c000ff 240px,#d100ff 252px,#e100ff 264px,#f200ff 276px,#ff00fb 288px,#ff00eb 300px,#f0d 312px,#ff00d1 324px,#ff00c5 336px,#f0b 348px,#ff00b2 360px,#ff00a9 372px,#ff00a1 384px,#ff009a 396px,#ff0096 403px)"></div><div style="left:75px;top:248px;width:400px;height:2px;background:linear-gradient(90deg,#0047ff 0px,#0043ff 12px,#003fff 24px,#003bff 36px,#0037ff 48px,#03f 60px,#002fff 72px,#002bff 84px,#002aff 89px,#0927ff 96px,#1723ff 108px,#251fff 120px,#341bff 132px,#4316ff 144px,#5212ff 156px,#610eff 168px,#7009ff 180px,#8005ff 192px,#9000ff 204px,#9f00ff 216px,#af00ff 228px,#bf00ff 240px,#d000ff 252px,#e000ff 264px,#f100ff 276px,#ff00fc 288px,#ff00ed 300px,#ff00df 312px,#ff00d2 324px,#ff00c7 336px,#ff00bd 348px,#ff00b3 360px,#ff00ab 372px,#ff00a3 384px,#ff009b 396px,#f09 400px)"></div><div style="left:76px;top:250px;width:397px;height:2px;background:linear-gradient(90deg,#0045ff 0px,#0041ff 12px,#003eff 24px,#003aff 36px,#0036ff 48px,#0032ff 60px,#002eff 72px,#002aff 84px,#0028ff 88px,#0926ff 96px,#1822ff 108px,#261dff 120px,#3419ff 132px,#4315ff 144px,#5211ff 156px,#610cff 168px,#7008ff 180px,#7f04ff 192px,#8c00ff 201px,#9e00ff 216px,#ae00ff 228px,#be00ff 240px,#ce00ff 252px,#df00ff 264px,#ef00ff 276px,#ff00fe 288px,#f0e 300px,#ff00e0 312px,#ff00d4 324px,#ff00c8 336px,#ff00be 348px,#ff00b4 360px,#ff00ac 372px,#ff00a4 384px,#ff009d 396px,#ff009c 397px)"></div><div style="left:77px;top:252px;width:394px;height:2px;background:linear-gradient(90deg,#04f 0px,#0040ff 12px,#003cff 24px,#0038ff 36px,#0034ff 48px,#0030ff 60px,#002cff 72px,#0027ff 87px,#0a24ff 96px,#1820ff 108px,#261cff 120px,#3518ff 132px,#4314ff 144px,#520fff 156px,#610bff 168px,#7007ff 180px,#7f02ff 192px,#8700ff 199px,#8e00ff 204px,#9e00ff 216px,#ad00ff 228px,#bd00ff 240px,#cd00ff 252px,#de00ff 264px,#e0f 276px,#fe00ff 288px,#ff00f0 300px,#ff00e2 312px,#ff00d5 324px,#ff00ca 336px,#ff00bf 348px,#ff00b6 360px,#ff00ad 372px,#ff00a5 384px,#ff009f 394px)"></div><div style="left:78px;top:254px;width:391px;height:2px;background:linear-gradient(90deg,#0042ff 0px,#003eff 12px,#003aff 24px,#0037ff 36px,#03f 48px,#002fff 60px,#002bff 72px,#0026ff 87px,#0b23ff 96px,#191fff 108px,#271bff 120px,#3517ff 132px,#4312ff 144px,#520eff 156px,#610aff 168px,#7006ff 180px,#8300ff 196px,#8e00ff 204px,#9d00ff 216px,#ad00ff 228px,#bc00ff 240px,#c0f 252px,#dc00ff 264px,#ed00ff 276px,#fd00ff 288px,#ff00f1 300px,#ff00e3 312px,#ff00d7 324px,#ff00cb 336px,#ff00c1 348px,#ff00b7 360px,#ff00ae 372px,#ff00a6 384px,#ff00a2 391px)"></div><div style="left:79px;top:256px;width:388px;height:2px;background:linear-gradient(90deg,#0040ff 0px,#003dff 12px,#0039ff 24px,#0035ff 36px,#0031ff 48px,#002dff 60px,#002aff 72px,#0025ff 86px,#0b22ff 96px,#191eff 108px,#271aff 120px,#3515ff 132px,#41f 144px,#520dff 156px,#6109ff 168px,#6f05ff 180px,#7f00ff 193px,#8d00ff 204px,#9d00ff 216px,#ac00ff 228px,#bc00ff 240px,#cb00ff 252px,#db00ff 264px,#eb00ff 276px,#fb00ff 288px,#ff00f3 300px,#ff00e5 312px,#ff00d8 324px,#f0c 336px,#ff00c2 348px,#ff00b8 360px,#ff00b0 372px,#ff00a8 384px,#ff00a5 388px)"></div><div style="left:81px;top:258px;width:384px;height:2px;background:linear-gradient(90deg,#003fff 0px,#003bff 12px,#0037ff 24px,#03f 36px,#0030ff 48px,#002cff 60px,#0028ff 72px,#0024ff 84px,#0d20ff 96px,#1b1cff 108px,#2918ff 120px,#3714ff 132px,#4510ff 144px,#530cff 156px,#6207ff 168px,#7003ff 180px,#7b00ff 189px,#8e00ff 204px,#9d00ff 216px,#ad00ff 228px,#bc00ff 240px,#c0f 252px,#db00ff 264px,#eb00ff 276px,#fb00ff 288px,#ff00f3 300px,#ff00e5 312px,#ff00d8 324px,#ff00cd 336px,#ff00c2 348px,#ff00b9 360px,#ff00b0 372px,#ff00a8 384px)"></div><div style="left:82px;top:260px;width:381px;height:2px;background:linear-gradient(90deg,#003dff 0px,#0039ff 12px,#0036ff 24px,#0032ff 36px,#002eff 48px,#002aff 60px,#0027ff 72px,#0023ff 84px,#0e1fff 96px,#1b1bff 108px,#2917ff 120px,#3713ff 132px,#450fff 144px,#530aff 156px,#6206ff 168px,#7002ff 180px,#70f 186px,#7f00ff 192px,#8e00ff 204px,#9d00ff 216px,#ac00ff 228px,#b0f 240px,#cb00ff 252px,#da00ff 264px,#ea00ff 276px,#fa00ff 288px,#ff00f5 300px,#ff00e6 312px,#ff00da 324px,#ff00ce 336px,#ff00c4 348px,#ff00ba 360px,#ff00b2 372px,#ff00ab 381px)"></div><div style="left:83px;top:262px;width:379px;height:2px;background:linear-gradient(90deg,#003cff 0px,#0038ff 12px,#0034ff 24px,#0031ff 36px,#002dff 48px,#0029ff 60px,#0025ff 72px,#02f 83px,#0e1dff 96px,#1c1aff 108px,#2a16ff 120px,#3711ff 132px,#450dff 144px,#5409ff 156px,#6205ff 168px,#7300ff 183px,#7f00ff 192px,#8d00ff 204px,#9c00ff 216px,#ab00ff 228px,#ba00ff 240px,#ca00ff 252px,#d900ff 264px,#e900ff 276px,#f800ff 288px,#ff00f6 300px,#ff00e8 312px,#ff00db 324px,#ff00d0 336px,#ff00c5 348px,#ff00bc 360px,#ff00b3 372px,#ff00ae 379px)"></div><div style="left:84px;top:264px;width:376px;height:2px;background:linear-gradient(90deg,#003aff 0px,#0037ff 12px,#03f 24px,#002fff 36px,#002cff 48px,#0028ff 60px,#0024ff 72px,#0021ff 82px,#0f1cff 96px,#1d18ff 108px,#2a14ff 120px,#3810ff 132px,#460cff 144px,#5408ff 156px,#6204ff 168px,#7000ff 180px,#7e00ff 192px,#8d00ff 204px,#9c00ff 216px,#a0f 228px,#b900ff 240px,#c900ff 252px,#d800ff 264px,#e700ff 276px,#f700ff 288px,#ff00f8 300px,#ff00e9 312px,#f0d 324px,#ff00d1 336px,#ff00c6 348px,#ff00bd 360px,#ff00b4 372px,#ff00b1 376px)"></div><div style="left:85px;top:266px;width:373px;height:2px;background:linear-gradient(90deg,#0039ff 0px,#0035ff 12px,#0032ff 24px,#002eff 36px,#002aff 48px,#0026ff 60px,#0023ff 72px,#0020ff 82px,#101bff 96px,#1d17ff 108px,#2a13ff 120px,#380fff 132px,#460bff 144px,#5407ff 156px,#6203ff 168px,#6c00ff 177px,#7e00ff 192px,#8c00ff 204px,#9b00ff 216px,#a0f 228px,#b900ff 240px,#c800ff 252px,#d700ff 264px,#e600ff 276px,#f600ff 288px,#ff00f9 300px,#ff00eb 312px,#ff00de 324px,#ff00d2 336px,#ff00c8 348px,#ff00be 360px,#ff00b5 372px,#ff00b5 373px)"></div><div style="left:87px;top:268px;width:369px;height:2px;background:linear-gradient(90deg,#0037ff 0px,#0034ff 12px,#0030ff 24px,#002cff 36px,#0029ff 48px,#0025ff 60px,#0021ff 72px,#001fff 80px,#041dff 84px,#1119ff 96px,#1f16ff 108px,#2c12ff 120px,#390eff 132px,#470aff 144px,#5506ff 156px,#6302ff 168px,#6800ff 173px,#7100ff 180px,#7f00ff 192px,#8d00ff 204px,#9c00ff 216px,#a0f 228px,#b900ff 240px,#c800ff 252px,#d700ff 264px,#e600ff 276px,#f500ff 288px,#ff00f9 300px,#ff00eb 312px,#ff00de 324px,#ff00d3 336px,#ff00c8 348px,#ff00bf 360px,#ff00b8 369px)"></div><div style="left:88px;top:270px;width:366px;height:2px;background:linear-gradient(90deg,#0036ff 0px,#0032ff 12px,#002fff 24px,#002bff 36px,#0027ff 48px,#0024ff 60px,#0020ff 72px,#001eff 79px,#051cff 84px,#1218ff 96px,#1f14ff 108px,#2c11ff 120px,#3a0dff 132px,#4709ff 144px,#5505ff 156px,#6500ff 170px,#7100ff 180px,#7f00ff 192px,#8d00ff 204px,#9b00ff 216px,#a0f 228px,#b800ff 240px,#c700ff 252px,#d600ff 264px,#e500ff 276px,#f400ff 288px,#ff00fb 300px,#ff00ec 312px,#ff00e0 324px,#ff00d4 336px,#ff00ca 348px,#ff00c0 360px,#f0b 366px)"></div><div style="left:89px;top:272px;width:363px;height:2px;background:linear-gradient(90deg,#0034ff 0px,#0031ff 12px,#002dff 24px,#002aff 36px,#0026ff 48px,#02f 60px,#001fff 72px,#001dff 79px,#061bff 84px,#1317ff 96px,#2013ff 108px,#2d0fff 120px,#3a0cff 132px,#4708ff 144px,#5504ff 156px,#6100ff 167px,#7000ff 180px,#7e00ff 192px,#8c00ff 204px,#9b00ff 216px,#a900ff 228px,#b700ff 240px,#c600ff 252px,#d500ff 264px,#e400ff 276px,#f300ff 288px,#ff00fc 300px,#f0e 312px,#ff00e1 324px,#ff00d5 336px,#ff00cb 348px,#ff00c1 360px,#ff00bf 363px)"></div><div style="left:90px;top:274px;width:360px;height:2px;background:linear-gradient(90deg,#03f 0px,#0030ff 12px,#002cff 24px,#0028ff 36px,#0025ff 48px,#0021ff 60px,#001dff 72px,#001cff 78px,#061aff 84px,#1316ff 96px,#2012ff 108px,#2d0eff 120px,#3a0bff 132px,#4807ff 144px,#5503ff 156px,#5e00ff 164px,#6300ff 168px,#7000ff 180px,#7e00ff 192px,#8c00ff 204px,#9a00ff 216px,#a800ff 228px,#b700ff 240px,#c500ff 252px,#d400ff 264px,#e300ff 276px,#f100ff 288px,#ff00fd 300px,#ff00ef 312px,#ff00e2 324px,#ff00d7 336px,#f0c 348px,#ff00c2 360px)"></div><div style="left:91px;top:276px;width:357px;height:2px;background:linear-gradient(90deg,#0032ff 0px,#002eff 12px,#002bff 24px,#0027ff 36px,#0024ff 48px,#0020ff 60px,#001cff 72px,#001bff 77px,#0719ff 84px,#1415ff 96px,#2111ff 108px,#2d0dff 120px,#3b09ff 132px,#4806ff 144px,#5502ff 156px,#5b00ff 161px,#6200ff 168px,#7000ff 180px,#7e00ff 192px,#8c00ff 204px,#90f 216px,#a800ff 228px,#b600ff 240px,#c400ff 252px,#d300ff 264px,#e100ff 276px,#f000ff 288px,#f0f 300px,#ff00f1 312px,#ff00e4 324px,#ff00d8 336px,#ff00cd 348px,#ff00c6 357px)"></div><div style="left:93px;top:278px;width:353px;height:2px;background:linear-gradient(90deg,#0030ff 0px,#002dff 12px,#0029ff 24px,#0026ff 36px,#02f 48px,#001fff 60px,#001aff 76px,#0917ff 84px,#1513ff 96px,#2210ff 108px,#2f0cff 120px,#3c08ff 132px,#4904ff 144px,#5700ff 157px,#6400ff 168px,#7100ff 180px,#7f00ff 192px,#8c00ff 204px,#9a00ff 216px,#a800ff 228px,#b600ff 240px,#c500ff 252px,#d300ff 264px,#e100ff 276px,#f000ff 288px,#f0f 300px,#ff00f1 312px,#ff00e4 324px,#ff00d8 336px,#ff00ce 348px,#ff00ca 353px)"></div><div style="left:94px;top:280px;width:350px;height:2px;background:linear-gradient(90deg,#002fff 0px,#002cff 12px,#0028ff 24px,#0025ff 36px,#0021ff 48px,#001dff 60px,#0019ff 75px,#0916ff 84px,#1612ff 96px,#230fff 108px,#2f0bff 120px,#3c07ff 132px,#4903ff 144px,#5400ff 154px,#6300ff 168px,#7100ff 180px,#7e00ff 192px,#8c00ff 204px,#9a00ff 216px,#a700ff 228px,#b600ff 240px,#c400ff 252px,#d200ff 264px,#e000ff 276px,#ef00ff 288px,#fe00ff 300px,#ff00f2 312px,#ff00e5 324px,#ff00da 336px,#ff00cf 348px,#ff00cd 350px)"></div><div style="left:95px;top:282px;width:347px;height:2px;background:linear-gradient(90deg,#002eff 0px,#002aff 12px,#0027ff 24px,#0023ff 36px,#0020ff 48px,#001cff 60px,#0018ff 74px,#0a15ff 84px,#1611ff 96px,#230eff 108px,#300aff 120px,#3c06ff 132px,#4902ff 144px,#5100ff 151px,#5600ff 156px,#6300ff 168px,#7100ff 180px,#7e00ff 192px,#8b00ff 204px,#90f 216px,#a700ff 228px,#b500ff 240px,#c300ff 252px,#d100ff 264px,#df00ff 276px,#e0f 288px,#fc00ff 300px,#ff00f4 312px,#ff00e7 324px,#ff00db 336px,#ff00d1 347px)"></div><div style="left:96px;top:284px;width:344px;height:2px;background:linear-gradient(90deg,#002dff 0px,#0029ff 12px,#0026ff 24px,#02f 36px,#001fff 48px,#001bff 60px,#0017ff 74px,#0b14ff 84px,#1710ff 96px,#230dff 108px,#3009ff 120px,#3d05ff 132px,#4901ff 144px,#4e00ff 148px,#5600ff 156px,#6300ff 168px,#7000ff 180px,#7e00ff 192px,#8b00ff 204px,#90f 216px,#a600ff 228px,#b400ff 240px,#c200ff 252px,#d000ff 264px,#de00ff 276px,#ec00ff 288px,#fb00ff 300px,#ff00f5 312px,#ff00e8 324px,#ff00dc 336px,#ff00d5 344px)"></div><div style="left:97px;top:286px;width:341px;height:2px;background:linear-gradient(90deg,#002bff 0px,#0028ff 12px,#0024ff 24px,#0021ff 36px,#001eff 48px,#001aff 60px,#0016ff 73px,#0b13ff 84px,#170fff 96px,#240cff 108px,#3008ff 120px,#3d04ff 132px,#4b00ff 145px,#5600ff 156px,#6300ff 168px,#7000ff 180px,#7d00ff 192px,#8b00ff 204px,#9800ff 216px,#a600ff 228px,#b300ff 240px,#c100ff 252px,#cf00ff 264px,#d0f 276px,#eb00ff 288px,#fa00ff 300px,#ff00f6 312px,#ff00e9 324px,#ff00de 336px,#ff00d9 341px)"></div><div style="left:99px;top:288px;width:337px;height:2px;background:linear-gradient(90deg,#002aff 0px,#0026ff 12px,#0023ff 24px,#0020ff 36px,#001cff 48px,#0019ff 60px,#0015ff 71px,#0d11ff 84px,#190eff 96px,#250aff 108px,#3207ff 120px,#3e03ff 132px,#4800ff 141px,#5700ff 156px,#6400ff 168px,#7100ff 180px,#7e00ff 192px,#8b00ff 204px,#90f 216px,#a600ff 228px,#b400ff 240px,#c100ff 252px,#cf00ff 264px,#d0f 276px,#eb00ff 288px,#f900ff 300px,#ff00f6 312px,#ff00ea 324px,#ff00de 336px,#f0d 337px)"></div><div style="left:100px;top:290px;width:334px;height:2px;background:linear-gradient(90deg,#0029ff 0px,#0025ff 12px,#02f 24px,#001eff 36px,#001bff 48px,#0018ff 60px,#0014ff 71px,#0d10ff 84px,#190dff 96px,#2609ff 108px,#3206ff 120px,#3e02ff 132px,#4500ff 138px,#4b00ff 144px,#5700ff 156px,#6400ff 168px,#7100ff 180px,#7e00ff 192px,#8b00ff 204px,#9800ff 216px,#a600ff 228px,#b300ff 240px,#c100ff 252px,#ce00ff 264px,#dc00ff 276px,#ea00ff 288px,#f800ff 300px,#ff00f8 312px,#ff00eb 324px,#ff00e1 334px)"></div><div style="left:101px;top:292px;width:331px;height:2px;background:linear-gradient(90deg,#0028ff 0px,#0024ff 12px,#0021ff 24px,#001dff 36px,#001aff 48px,#0016ff 60px,#0014ff 70px,#0e0fff 84px,#1a0cff 96px,#2608ff 108px,#3205ff 120px,#4200ff 135px,#4b00ff 144px,#5700ff 156px,#6400ff 168px,#7100ff 180px,#7e00ff 192px,#8b00ff 204px,#9800ff 216px,#a500ff 228px,#b200ff 240px,#c000ff 252px,#cd00ff 264px,#db00ff 276px,#e900ff 288px,#f700ff 300px,#ff00f9 312px,#ff00ec 324px,#ff00e5 331px)"></div><div style="left:103px;top:294px;width:327px;height:2px;background:linear-gradient(90deg,#0026ff 0px,#0023ff 12px,#001fff 24px,#001cff 36px,#0019ff 48px,#0015ff 60px,#0013ff 68px,#100eff 84px,#1b0bff 96px,#2707ff 108px,#3403ff 120px,#3f00ff 131px,#4c00ff 144px,#5900ff 156px,#6500ff 168px,#7200ff 180px,#7f00ff 192px,#8b00ff 204px,#9800ff 216px,#a600ff 228px,#b300ff 240px,#c000ff 252px,#ce00ff 264px,#db00ff 276px,#e900ff 288px,#f700ff 300px,#ff00f9 312px,#ff00ec 324px,#ff00e9 327px)"></div><div style="left:104px;top:296px;width:324px;height:2px;background:linear-gradient(90deg,#0025ff 0px,#02f 12px,#001eff 24px,#001bff 36px,#0018ff 48px,#0014ff 60px,#0012ff 68px,#0411ff 72px,#100dff 84px,#1c0aff 96px,#2806ff 108px,#3403ff 120px,#3c00ff 128px,#4c00ff 144px,#5900ff 156px,#6500ff 168px,#7200ff 180px,#7e00ff 192px,#8b00ff 204px,#9800ff 216px,#a500ff 228px,#b200ff 240px,#bf00ff 252px,#cd00ff 264px,#da00ff 276px,#e800ff 288px,#f600ff 300px,#ff00fb 312px,#f0e 324px)"></div><div style="left:105px;top:298px;width:322px;height:2px;background:linear-gradient(90deg,#0024ff 0px,#0021ff 12px,#001dff 24px,#001aff 36px,#0017ff 48px,#0013ff 60px,#01f 67px,#0510ff 72px,#110cff 84px,#1c09ff 96px,#2805ff 108px,#3402ff 120px,#3a00ff 125px,#4000ff 132px,#4c00ff 144px,#5900ff 156px,#6500ff 168px,#7100ff 180px,#7e00ff 192px,#8b00ff 204px,#9700ff 216px,#a400ff 228px,#b100ff 240px,#bf00ff 252px,#c0f 264px,#d900ff 276px,#e700ff 288px,#f400ff 300px,#ff00fc 312px,#ff00f1 322px)"></div><div style="left:106px;top:300px;width:319px;height:2px;background:linear-gradient(90deg,#0023ff 0px,#0020ff 12px,#001cff 24px,#0019ff 36px,#0016ff 48px,#0012ff 60px,#0010ff 66px,#060fff 72px,#110bff 84px,#1d08ff 96px,#2904ff 108px,#3700ff 122px,#4000ff 132px,#4c00ff 144px,#5900ff 156px,#6500ff 168px,#7100ff 180px,#7e00ff 192px,#8a00ff 204px,#9700ff 216px,#a400ff 228px,#b100ff 240px,#be00ff 252px,#cb00ff 264px,#d800ff 276px,#e600ff 288px,#f300ff 300px,#ff00fd 312px,#ff00f5 319px)"></div><div style="left:108px;top:302px;width:315px;height:2px;background:linear-gradient(90deg,#0021ff 0px,#001eff 12px,#001bff 24px,#0018ff 36px,#0014ff 48px,#01f 60px,#0010ff 64px,#070dff 72px,#130aff 84px,#1e07ff 96px,#2a03ff 108px,#3400ff 119px,#4200ff 132px,#4e00ff 144px,#5a00ff 156px,#60f 168px,#7200ff 180px,#7e00ff 192px,#8b00ff 204px,#9800ff 216px,#a400ff 228px,#b100ff 240px,#be00ff 252px,#cb00ff 264px,#d800ff 276px,#e600ff 288px,#f300ff 300px,#ff00fd 312px,#ff00fa 315px)"></div><div style="left:109px;top:304px;width:312px;height:2px;background:linear-gradient(90deg,#0020ff 0px,#001dff 12px,#001aff 24px,#0017ff 36px,#0013ff 48px,#000fff 64px,#080dff 72px,#1309ff 84px,#1f06ff 96px,#2a02ff 108px,#3200ff 116px,#3600ff 120px,#4200ff 132px,#4e00ff 144px,#5a00ff 156px,#60f 168px,#7200ff 180px,#7e00ff 192px,#8b00ff 204px,#9700ff 216px,#a400ff 228px,#b100ff 240px,#bd00ff 252px,#ca00ff 264px,#d700ff 276px,#e500ff 288px,#f200ff 300px,#f0f 312px)"></div><div style="left:110px;top:306px;width:309px;height:2px;background:linear-gradient(90deg,#001fff 0px,#001cff 12px,#0019ff 24px,#0016ff 36px,#0012ff 48px,#000eff 63px,#080cff 72px,#1408ff 84px,#1f05ff 96px,#2b01ff 108px,#2f00ff 113px,#3600ff 120px,#4200ff 132px,#4e00ff 144px,#5a00ff 156px,#60f 168px,#7200ff 180px,#7e00ff 192px,#8a00ff 204px,#9700ff 216px,#a300ff 228px,#b000ff 240px,#bd00ff 252px,#ca00ff 264px,#d700ff 276px,#e400ff 288px,#f100ff 300px,#fb00ff 309px)"></div><div style="left:112px;top:308px;width:305px;height:2px;background:linear-gradient(90deg,#001eff 0px,#001bff 12px,#0018ff 24px,#0014ff 36px,#01f 48px,#000dff 61px,#0a0aff 72px,#1507ff 84px,#2004ff 96px,#2c00ff 109px,#3700ff 120px,#4300ff 132px,#4f00ff 144px,#5b00ff 156px,#6700ff 168px,#7300ff 180px,#7f00ff 192px,#8b00ff 204px,#9700ff 216px,#a400ff 228px,#b000ff 240px,#bd00ff 252px,#ca00ff 264px,#d700ff 276px,#e400ff 288px,#f100ff 300px,#f600ff 305px)"></div><div style="left:113px;top:310px;width:302px;height:2px;background:linear-gradient(90deg,#001dff 0px,#001aff 12px,#0017ff 24px,#0013ff 36px,#0010ff 48px,#000dff 61px,#0a09ff 72px,#1606ff 84px,#2103ff 96px,#2a00ff 106px,#3800ff 120px,#4300ff 132px,#4f00ff 144px,#5b00ff 156px,#60f 168px,#7200ff 180px,#7e00ff 192px,#8b00ff 204px,#9700ff 216px,#a300ff 228px,#b000ff 240px,#bc00ff 252px,#c900ff 264px,#d600ff 276px,#e300ff 288px,#f000ff 300px,#f200ff 302px)"></div><div style="left:114px;top:312px;width:299px;height:2px;background:linear-gradient(90deg,#001cff 0px,#0019ff 12px,#0016ff 24px,#0012ff 36px,#000fff 48px,#000cff 60px,#0b09ff 72px,#1605ff 84px,#2102ff 96px,#2800ff 103px,#2d00ff 108px,#3800ff 120px,#4300ff 132px,#4f00ff 144px,#5b00ff 156px,#60f 168px,#7200ff 180px,#7e00ff 192px,#8a00ff 204px,#9600ff 216px,#a300ff 228px,#af00ff 240px,#bc00ff 252px,#c800ff 264px,#d500ff 276px,#e200ff 288px,#e0f 299px)"></div><div style="left:116px;top:314px;width:295px;height:2px;background:linear-gradient(90deg,#001bff 0px,#0018ff 12px,#0014ff 24px,#01f 36px,#000eff 48px,#000bff 58px,#0c07ff 72px,#1704ff 84px,#2500ff 99px,#2e00ff 108px,#3900ff 120px,#40f 132px,#5000ff 144px,#5c00ff 156px,#6700ff 168px,#7300ff 180px,#7f00ff 192px,#8b00ff 204px,#9700ff 216px,#a300ff 228px,#b000ff 240px,#bc00ff 252px,#c800ff 264px,#d500ff 276px,#e200ff 288px,#e900ff 295px)"></div><div style="left:117px;top:316px;width:292px;height:2px;background:linear-gradient(90deg,#001aff 0px,#0017ff 12px,#0013ff 24px,#0010ff 36px,#000dff 48px,#000aff 58px,#0d07ff 72px,#1803ff 84px,#2300ff 96px,#2e00ff 108px,#3900ff 120px,#4500ff 132px,#5000ff 144px,#5c00ff 156px,#6700ff 168px,#7300ff 180px,#7f00ff 192px,#8b00ff 204px,#9700ff 216px,#a300ff 228px,#af00ff 240px,#b0f 252px,#c800ff 264px,#d400ff 276px,#e100ff 288px,#e500ff 292px)"></div><div style="left:118px;top:318px;width:289px;height:2px;background:linear-gradient(90deg,#0019ff 0px,#0016ff 12px,#0013ff 24px,#000fff 36px,#000cff 48px,#000aff 57px,#0d06ff 72px,#1802ff 84px,#2000ff 93px,#2e00ff 108px,#3a00ff 120px,#4500ff 132px,#5000ff 144px,#5c00ff 156px,#6700ff 168px,#7300ff 180px,#7e00ff 192px,#8a00ff 204px,#9600ff 216px,#a200ff 228px,#ae00ff 240px,#b0f 252px,#c700ff 264px,#d300ff 276px,#e000ff 288px,#e100ff 289px)"></div><div style="left:120px;top:320px;width:285px;height:2px;background:linear-gradient(90deg,#0018ff 0px,#0015ff 12px,#01f 24px,#000eff 36px,#000bff 48px,#0009ff 55px,#0408ff 60px,#0f05ff 72px,#1a01ff 84px,#1e00ff 89px,#2500ff 96px,#3000ff 108px,#3b00ff 120px,#4600ff 132px,#5100ff 144px,#5d00ff 156px,#6800ff 168px,#7400ff 180px,#7f00ff 192px,#8b00ff 204px,#9700ff 216px,#a300ff 228px,#af00ff 240px,#b0f 252px,#c700ff 264px,#d300ff 276px,#d0f 285px)"></div><div style="left:121px;top:322px;width:282px;height:2px;background:linear-gradient(90deg,#0017ff 0px,#0014ff 12px,#0010ff 24px,#000dff 36px,#000aff 48px,#0008ff 55px,#0507ff 60px,#0f04ff 72px,#1c00ff 86px,#2500ff 96px,#3000ff 108px,#3b00ff 120px,#4600ff 132px,#5100ff 144px,#5c00ff 156px,#6800ff 168px,#7300ff 180px,#7f00ff 192px,#8b00ff 204px,#9600ff 216px,#a200ff 228px,#ae00ff 240px,#ba00ff 252px,#c600ff 264px,#d300ff 276px,#d900ff 282px)"></div><div style="left:122px;top:324px;width:279px;height:2px;background:linear-gradient(90deg,#0016ff 0px,#0013ff 12px,#0010ff 24px,#000cff 36px,#0009ff 48px,#0008ff 54px,#0506ff 60px,#1003ff 72px,#1a00ff 83px,#2500ff 96px,#3000ff 108px,#3b00ff 120px,#4600ff 132px,#5100ff 144px,#5c00ff 156px,#6800ff 168px,#7300ff 180px,#7f00ff 192px,#8a00ff 204px,#9600ff 216px,#a200ff 228px,#ae00ff 240px,#b900ff 252px,#c600ff 264px,#d200ff 276px,#d500ff 279px)"></div><div style="left:124px;top:326px;width:275px;height:2px;background:linear-gradient(90deg,#0015ff 0px,#0012ff 12px,#000eff 24px,#000bff 36px,#0008ff 48px,#0007ff 52px,#0705ff 60px,#1102ff 72px,#1700ff 79px,#1c00ff 84px,#2700ff 96px,#3100ff 108px,#3c00ff 120px,#4700ff 132px,#5200ff 144px,#5d00ff 156px,#6900ff 168px,#7400ff 180px,#7f00ff 192px,#8b00ff 204px,#9600ff 216px,#a200ff 228px,#ae00ff 240px,#ba00ff 252px,#c600ff 264px,#d100ff 275px)"></div><div style="left:125px;top:328px;width:272px;height:2px;background:linear-gradient(90deg,#0014ff 0px,#01f 12px,#000eff 24px,#000aff 36px,#0006ff 52px,#0704ff 60px,#1201ff 72px,#1500ff 76px,#1c00ff 84px,#2700ff 96px,#3200ff 108px,#3c00ff 120px,#4700ff 132px,#5200ff 144px,#5d00ff 156px,#6900ff 168px,#7400ff 180px,#7f00ff 192px,#8b00ff 204px,#9600ff 216px,#a200ff 228px,#ad00ff 240px,#b900ff 252px,#c500ff 264px,#cd00ff 272px)"></div><div style="left:127px;top:330px;width:268px;height:2px;background:linear-gradient(90deg,#0013ff 0px,#0010ff 12px,#000cff 24px,#0009ff 36px,#0006ff 50px,#0903ff 60px,#1300ff 72px,#1e00ff 84px,#2800ff 96px,#30f 108px,#3e00ff 120px,#4800ff 132px,#5300ff 144px,#5e00ff 156px,#6900ff 168px,#7500ff 180px,#8000ff 192px,#8b00ff 204px,#9700ff 216px,#a200ff 228px,#ae00ff 240px,#ba00ff 252px,#c500ff 264px,#c900ff 268px)"></div><div style="left:128px;top:332px;width:265px;height:2px;background:linear-gradient(90deg,#0012ff 0px,#000fff 12px,#000cff 24px,#0009ff 36px,#0005ff 49px,#0902ff 60px,#10f 69px,#1e00ff 84px,#2800ff 96px,#30f 108px,#3e00ff 120px,#4800ff 132px,#5300ff 144px,#5e00ff 156px,#6900ff 168px,#7400ff 180px,#8000ff 192px,#8b00ff 204px,#9600ff 216px,#a200ff 228px,#ad00ff 240px,#b900ff 252px,#c500ff 264px,#c600ff 265px)"></div><div style="left:129px;top:334px;width:263px;height:2px;background:linear-gradient(90deg,#01f 0px,#000eff 12px,#000bff 24px,#0008ff 36px,#0005ff 49px,#0a02ff 60px,#0f00ff 66px,#1400ff 72px,#1e00ff 84px,#2900ff 96px,#30f 108px,#3e00ff 120px,#4900ff 132px,#5300ff 144px,#5e00ff 156px,#6900ff 168px,#7400ff 180px,#7f00ff 192px,#8b00ff 204px,#9600ff 216px,#a100ff 228px,#ad00ff 240px,#b800ff 252px,#c300ff 263px)"></div><div style="left:131px;top:336px;width:259px;height:2px;background:linear-gradient(90deg,#0010ff 0px,#000dff 12px,#000aff 24px,#0007ff 36px,#0004ff 47px,#0d00ff 62px,#1500ff 72px,#2000ff 84px,#2a00ff 96px,#3400ff 108px,#3f00ff 120px,#4a00ff 132px,#5400ff 144px,#5f00ff 156px,#6a00ff 168px,#7500ff 180px,#8000ff 192px,#8b00ff 204px,#9600ff 216px,#a200ff 228px,#ad00ff 240px,#b900ff 252px,#bf00ff 259px)"></div><div style="left:132px;top:338px;width:256px;height:2px;background:linear-gradient(90deg,#000fff 0px,#000cff 12px,#0009ff 24px,#0006ff 36px,#0003ff 46px,#0b00ff 59px,#1600ff 72px,#2000ff 84px,#2a00ff 96px,#3500ff 108px,#3f00ff 120px,#4a00ff 132px,#5400ff 144px,#5f00ff 156px,#6a00ff 168px,#7500ff 180px,#8000ff 192px,#8b00ff 204px,#9600ff 216px,#a100ff 228px,#ad00ff 240px,#b800ff 252px,#bc00ff 256px)"></div><div style="left:134px;top:340px;width:252px;height:2px;background:linear-gradient(90deg,#000eff 0px,#000bff 12px,#0008ff 24px,#0005ff 36px,#0003ff 45px,#0900ff 55px,#0d00ff 60px,#1700ff 72px,#2100ff 84px,#2b00ff 96px,#3600ff 108px,#4000ff 120px,#4b00ff 132px,#50f 144px,#6000ff 156px,#6b00ff 168px,#7600ff 180px,#8000ff 192px,#8b00ff 204px,#9700ff 216px,#a200ff 228px,#ad00ff 240px,#b800ff 252px)"></div><div style="left:135px;top:342px;width:249px;height:2px;background:linear-gradient(90deg,#000dff 0px,#000aff 12px,#0007ff 24px,#0004ff 36px,#0002ff 44px,#0301ff 48px,#0700ff 52px,#0d00ff 60px,#1700ff 72px,#2100ff 84px,#2c00ff 96px,#3600ff 108px,#4000ff 120px,#4b00ff 132px,#50f 144px,#6000ff 156px,#6b00ff 168px,#7500ff 180px,#8000ff 192px,#8b00ff 204px,#9600ff 216px,#a100ff 228px,#ac00ff 240px,#b500ff 249px)"></div><div style="left:137px;top:344px;width:245px;height:2px;background:linear-gradient(90deg,#000cff 0px,#0009ff 12px,#0006ff 24px,#0003ff 36px,#0002ff 42px,#0500ff 48px,#0f00ff 60px,#1900ff 72px,#2300ff 84px,#2d00ff 96px,#3700ff 108px,#4100ff 120px,#4c00ff 132px,#5600ff 144px,#6100ff 156px,#6b00ff 168px,#7600ff 180px,#8100ff 192px,#8c00ff 204px,#9700ff 216px,#a200ff 228px,#ad00ff 240px,#b100ff 245px)"></div><div style="left:138px;top:346px;width:242px;height:2px;background:linear-gradient(90deg,#000bff 0px,#0008ff 12px,#0005ff 24px,#0002ff 36px,#0300ff 45px,#0f00ff 60px,#1900ff 72px,#2300ff 84px,#2d00ff 96px,#3700ff 108px,#4200ff 120px,#4c00ff 132px,#5600ff 144px,#6100ff 156px,#6b00ff 168px,#7600ff 180px,#8100ff 192px,#8b00ff 204px,#9600ff 216px,#a100ff 228px,#ac00ff 240px,#ae00ff 242px)"></div><div style="left:140px;top:348px;width:238px;height:2px;background:linear-gradient(90deg,#000aff 0px,#0007ff 12px,#0004ff 24px,#0100ff 41px,#0700ff 48px,#1000ff 60px,#1a00ff 72px,#2400ff 84px,#2e00ff 96px,#3800ff 108px,#4300ff 120px,#4d00ff 132px,#5700ff 144px,#6200ff 156px,#6c00ff 168px,#70f 180px,#8100ff 192px,#8c00ff 204px,#9700ff 216px,#a200ff 228px,#ab00ff 238px)"></div><div style="left:141px;top:350px;width:235px;height:2px;background:linear-gradient(90deg,#0009ff 0px,#0006ff 12px,#0004ff 24px,#0001ff 36px,#0700ff 48px,#10f 60px,#1b00ff 72px,#2500ff 84px,#2f00ff 96px,#3900ff 108px,#4300ff 120px,#4d00ff 132px,#5700ff 144px,#6200ff 156px,#6c00ff 168px,#7600ff 180px,#8100ff 192px,#8c00ff 204px,#9600ff 216px,#a100ff 228px,#a800ff 235px)"></div><div style="left:143px;top:352px;width:231px;height:2px;background:linear-gradient(90deg,#0008ff 0px,#0005ff 12px,#0003ff 24px,#00f 36px,#0800ff 48px,#1200ff 60px,#1c00ff 72px,#2600ff 84px,#3000ff 96px,#3a00ff 108px,#40f 120px,#4e00ff 132px,#5800ff 144px,#6200ff 156px,#6d00ff 168px,#70f 180px,#8200ff 192px,#8c00ff 204px,#9700ff 216px,#a200ff 228px,#a400ff 231px)"></div><div style="left:144px;top:354px;width:228px;height:2px;background:linear-gradient(90deg,#0008ff 0px,#0005ff 12px,#0002ff 24px,#00f 36px,#0900ff 48px,#1200ff 60px,#1c00ff 72px,#2600ff 84px,#3000ff 96px,#3a00ff 108px,#40f 120px,#4e00ff 132px,#5800ff 144px,#6200ff 156px,#6d00ff 168px,#70f 180px,#8100ff 192px,#8c00ff 204px,#9700ff 216px,#a100ff 228px)"></div><div style="left:146px;top:356px;width:224px;height:2px;background:linear-gradient(90deg,#0007ff 0px,#0004ff 12px,#0001ff 24px,#0100ff 36px,#0a00ff 48px,#1400ff 60px,#1d00ff 72px,#2700ff 84px,#3100ff 96px,#3b00ff 108px,#4500ff 120px,#4f00ff 132px,#5900ff 144px,#6300ff 156px,#6d00ff 168px,#7800ff 180px,#8200ff 192px,#8c00ff 204px,#9700ff 216px,#9e00ff 224px)"></div><div style="left:147px;top:358px;width:221px;height:2px;background:linear-gradient(90deg,#0006ff 0px,#0003ff 12px,#00f 24px,#0100ff 36px,#0b00ff 48px,#1400ff 60px,#1e00ff 72px,#2700ff 84px,#3100ff 96px,#3b00ff 108px,#4500ff 120px,#4f00ff 132px,#5900ff 144px,#6300ff 156px,#6d00ff 168px,#70f 180px,#8200ff 192px,#8c00ff 204px,#9700ff 216px,#9b00ff 221px)"></div><div style="left:149px;top:360px;width:217px;height:2px;background:linear-gradient(90deg,#0005ff 0px,#0002ff 12px,#00f 24px,#0200ff 36px,#0c00ff 48px,#1500ff 60px,#1f00ff 72px,#2900ff 84px,#3200ff 96px,#3c00ff 108px,#4600ff 120px,#5000ff 132px,#5a00ff 144px,#6400ff 156px,#6e00ff 168px,#7800ff 180px,#8200ff 192px,#8d00ff 204px,#9700ff 216px,#9800ff 217px)"></div><div style="left:150px;top:362px;width:214px;height:2px;background:linear-gradient(90deg,#0004ff 0px,#0001ff 12px,#00f 24px,#0300ff 36px,#0c00ff 48px,#1600ff 60px,#1f00ff 72px,#2900ff 84px,#30f 96px,#3c00ff 108px,#4600ff 120px,#5000ff 132px,#5a00ff 144px,#6400ff 156px,#6e00ff 168px,#7800ff 180px,#8200ff 192px,#8c00ff 204px,#9500ff 214px)"></div><div style="left:152px;top:364px;width:210px;height:2px;background:linear-gradient(90deg,#0003ff 0px,#00f 12px,#00f 24px,#0400ff 36px,#0e00ff 48px,#1700ff 60px,#2000ff 72px,#2a00ff 84px,#3400ff 96px,#3d00ff 108px,#4700ff 120px,#5100ff 132px,#5b00ff 144px,#6500ff 156px,#6f00ff 168px,#7900ff 180px,#8300ff 192px,#8d00ff 204px,#9200ff 210px)"></div><div style="left:153px;top:366px;width:207px;height:2px;background:linear-gradient(90deg,#0003ff 0px,#00f 12px,#00f 24px,#0500ff 36px,#0e00ff 48px,#1700ff 60px,#2100ff 72px,#2a00ff 84px,#3400ff 96px,#3d00ff 108px,#4700ff 120px,#5100ff 132px,#5b00ff 144px,#6400ff 156px,#6e00ff 168px,#7800ff 180px,#8300ff 192px,#8d00ff 204px,#8f00ff 207px)"></div><div style="left:155px;top:368px;width:203px;height:2px;background:linear-gradient(90deg,#0002ff 0px,#00f 12px,#00f 24px,#0600ff 36px,#0f00ff 48px,#1900ff 60px,#20f 72px,#2b00ff 84px,#3500ff 96px,#3e00ff 108px,#4800ff 120px,#5200ff 132px,#5b00ff 144px,#6500ff 156px,#6f00ff 168px,#7900ff 180px,#8300ff 192px,#8c00ff 203px)"></div><div style="left:157px;top:370px;width:200px;height:2px;background:linear-gradient(90deg,#0001ff 0px,#00f 12px,#00f 24px,#0700ff 36px,#1000ff 48px,#1a00ff 60px,#2300ff 72px,#2c00ff 84px,#3600ff 96px,#3f00ff 108px,#4900ff 120px,#5300ff 132px,#5c00ff 144px,#60f 156px,#7000ff 168px,#7a00ff 180px,#8400ff 192px,#8a00ff 200px)"></div><div style="left:158px;top:372px;width:197px;height:2px;background:linear-gradient(90deg,#00f 0px,#00f 12px,#00f 24px,#0800ff 36px,#10f 48px,#1a00ff 60px,#2300ff 72px,#2d00ff 84px,#3600ff 96px,#3f00ff 108px,#4900ff 120px,#5300ff 132px,#5c00ff 144px,#60f 156px,#7000ff 168px,#7a00ff 180px,#8300ff 192px,#80f 197px)"></div><div style="left:160px;top:374px;width:193px;height:2px;background:linear-gradient(90deg,#00f 0px,#00f 12px,#00f 24px,#0900ff 36px,#1200ff 48px,#1b00ff 60px,#2400ff 72px,#2e00ff 84px,#3700ff 96px,#4000ff 108px,#4a00ff 120px,#5300ff 132px,#5d00ff 144px,#6700ff 156px,#7000ff 168px,#7a00ff 180px,#8400ff 192px,#8500ff 193px)"></div><div style="left:162px;top:376px;width:189px;height:2px;background:linear-gradient(90deg,#00f 0px,#00f 12px,#0100ff 24px,#0a00ff 36px,#1300ff 48px,#1c00ff 60px,#2500ff 72px,#2f00ff 84px,#3800ff 96px,#4100ff 108px,#4b00ff 120px,#5400ff 132px,#5e00ff 144px,#6700ff 156px,#7100ff 168px,#7b00ff 180px,#8200ff 189px)"></div><div style="left:163px;top:378px;width:186px;height:2px;background:linear-gradient(90deg,#00f 0px,#00f 12px,#0200ff 24px,#0b00ff 36px,#1400ff 48px,#1d00ff 60px,#2600ff 72px,#2f00ff 84px,#3800ff 96px,#4100ff 108px,#4b00ff 120px,#5400ff 132px,#5e00ff 144px,#6700ff 156px,#7100ff 168px,#7b00ff 180px,#8000ff 186px)"></div><div style="left:165px;top:380px;width:182px;height:2px;background:linear-gradient(90deg,#00f 0px,#00f 12px,#0300ff 24px,#0c00ff 36px,#1500ff 48px,#1e00ff 60px,#2700ff 72px,#3000ff 84px,#3900ff 96px,#4200ff 108px,#4c00ff 120px,#50f 132px,#5f00ff 144px,#6800ff 156px,#7200ff 168px,#7b00ff 180px,#7d00ff 182px)"></div><div style="left:167px;top:382px;width:178px;height:2px;background:linear-gradient(90deg,#00f 0px,#00f 12px,#0400ff 24px,#0d00ff 36px,#1600ff 48px,#1f00ff 60px,#2800ff 72px,#3100ff 84px,#3a00ff 96px,#4300ff 108px,#4d00ff 120px,#5600ff 132px,#5f00ff 144px,#6900ff 156px,#7200ff 168px,#7a00ff 178px)"></div><div style="left:169px;top:384px;width:174px;height:2px;background:linear-gradient(90deg,#00f 0px,#00f 12px,#0500ff 24px,#0e00ff 36px,#1700ff 48px,#2000ff 60px,#2900ff 72px,#3200ff 84px,#3b00ff 96px,#40f 108px,#4d00ff 120px,#5700ff 132px,#6000ff 144px,#6900ff 156px,#7300ff 168px,#7800ff 174px)"></div><div style="left:170px;top:386px;width:171px;height:2px;background:linear-gradient(90deg,#00f 0px,#00f 12px,#0600ff 24px,#0e00ff 36px,#1700ff 48px,#2000ff 60px,#2900ff 72px,#3200ff 84px,#3b00ff 96px,#40f 108px,#4d00ff 120px,#5700ff 132px,#6000ff 144px,#6900ff 156px,#7300ff 168px,#7500ff 171px)"></div><div style="left:172px;top:388px;width:167px;height:2px;background:linear-gradient(90deg,#00f 0px,#00f 12px,#0700ff 24px,#1000ff 36px,#1800ff 48px,#2100ff 60px,#2a00ff 72px,#30f 84px,#3c00ff 96px,#4500ff 108px,#4e00ff 120px,#5800ff 132px,#6100ff 144px,#6a00ff 156px,#7300ff 167px)"></div><div style="left:174px;top:390px;width:163px;height:2px;background:linear-gradient(90deg,#00f 0px,#00f 12px,#0800ff 24px,#10f 36px,#1a00ff 48px,#20f 60px,#2b00ff 72px,#3400ff 84px,#3d00ff 96px,#4600ff 108px,#4f00ff 120px,#5800ff 132px,#6200ff 144px,#6b00ff 156px,#7000ff 163px)"></div><div style="left:176px;top:392px;width:159px;height:2px;background:linear-gradient(90deg,#00f 0px,#0100ff 12px,#0900ff 24px,#1200ff 36px,#1b00ff 48px,#2300ff 60px,#2c00ff 72px,#3500ff 84px,#3e00ff 96px,#4700ff 108px,#5000ff 120px,#5900ff 132px,#6200ff 144px,#6b00ff 156px,#6e00ff 159px)"></div><div style="left:178px;top:394px;width:155px;height:2px;background:linear-gradient(90deg,#00f 0px,#0200ff 12px,#0a00ff 24px,#1300ff 36px,#1c00ff 48px,#2400ff 60px,#2d00ff 72px,#3600ff 84px,#3f00ff 96px,#4800ff 108px,#5100ff 120px,#5a00ff 132px,#6300ff 144px,#6b00ff 155px)"></div><div style="left:180px;top:396px;width:151px;height:2px;background:linear-gradient(90deg,#00f 0px,#0300ff 12px,#0c00ff 24px,#1400ff 36px,#1d00ff 48px,#2500ff 60px,#2e00ff 72px,#3700ff 84px,#4000ff 96px,#4900ff 108px,#5200ff 120px,#5b00ff 132px,#6400ff 144px,#6900ff 151px)"></div><div style="left:182px;top:398px;width:147px;height:2px;background:linear-gradient(90deg,#00f 0px,#0400ff 12px,#0d00ff 24px,#1500ff 36px,#1e00ff 48px,#2600ff 60px,#2f00ff 72px,#3800ff 84px,#4100ff 96px,#4900ff 108px,#5200ff 120px,#5b00ff 132px,#6400ff 144px,#6700ff 147px)"></div><div style="left:184px;top:400px;width:143px;height:2px;background:linear-gradient(90deg,#00f 0px,#0500ff 12px,#0e00ff 24px,#1600ff 36px,#1f00ff 48px,#2700ff 60px,#3000ff 72px,#3900ff 84px,#4100ff 96px,#4a00ff 108px,#5300ff 120px,#5c00ff 132px,#6400ff 143px)"></div><div style="left:186px;top:402px;width:139px;height:2px;background:linear-gradient(90deg,#00f 0px,#0600ff 12px,#0f00ff 24px,#1700ff 36px,#2000ff 48px,#2800ff 60px,#3100ff 72px,#3a00ff 84px,#4200ff 96px,#4b00ff 108px,#5400ff 120px,#5d00ff 132px,#6200ff 139px)"></div><div style="left:188px;top:404px;width:135px;height:2px;background:linear-gradient(90deg,#00f 0px,#0800ff 12px,#1000ff 24px,#1800ff 36px,#2100ff 48px,#2900ff 60px,#3200ff 72px,#3b00ff 84px,#4300ff 96px,#4c00ff 108px,#50f 120px,#5e00ff 132px,#6000ff 135px)"></div><div style="left:190px;top:406px;width:132px;height:2px;background:linear-gradient(90deg,#00f 0px,#0900ff 12px,#10f 24px,#1900ff 36px,#20f 48px,#2a00ff 60px,#30f 72px,#3b00ff 84px,#40f 96px,#4d00ff 108px,#50f 120px,#5e00ff 132px)"></div><div style="left:192px;top:408px;width:128px;height:2px;background:linear-gradient(90deg,#0200ff 0px,#0a00ff 12px,#1200ff 24px,#1a00ff 36px,#2300ff 48px,#2b00ff 60px,#3400ff 72px,#3c00ff 84px,#4500ff 96px,#4e00ff 108px,#5600ff 120px,#5c00ff 128px)"></div><div style="left:194px;top:410px;width:124px;height:2px;background:linear-gradient(90deg,#0300ff 0px,#0b00ff 12px,#1300ff 24px,#1b00ff 36px,#2400ff 48px,#2c00ff 60px,#3500ff 72px,#3d00ff 84px,#4600ff 96px,#4e00ff 108px,#5700ff 120px,#5a00ff 124px)"></div><div style="left:196px;top:412px;width:120px;height:2px;background:linear-gradient(90deg,#0400ff 0px,#0c00ff 12px,#1400ff 24px,#1c00ff 36px,#2500ff 48px,#2d00ff 60px,#3600ff 72px,#3e00ff 84px,#4700ff 96px,#4f00ff 108px,#5800ff 120px)"></div><div style="left:199px;top:414px;width:115px;height:2px;background:linear-gradient(90deg,#0600ff 0px,#0e00ff 12px,#1600ff 24px,#1e00ff 36px,#2600ff 48px,#2f00ff 60px,#3700ff 72px,#4000ff 84px,#4800ff 96px,#5100ff 108px,#5600ff 115px)"></div><div style="left:201px;top:416px;width:111px;height:2px;background:linear-gradient(90deg,#0700ff 0px,#0f00ff 12px,#1700ff 24px,#1f00ff 36px,#2700ff 48px,#3000ff 60px,#3800ff 72px,#4000ff 84px,#4900ff 96px,#5100ff 108px,#5300ff 111px)"></div><div style="left:203px;top:418px;width:107px;height:2px;background:linear-gradient(90deg,#0800ff 0px,#1000ff 12px,#1800ff 24px,#2000ff 36px,#2800ff 48px,#3100ff 60px,#3900ff 72px,#4100ff 84px,#4a00ff 96px,#5100ff 107px)"></div><div style="left:205px;top:420px;width:103px;height:2px;background:linear-gradient(90deg,#0900ff 0px,#10f 12px,#1900ff 24px,#2100ff 36px,#2900ff 48px,#3100ff 60px,#3a00ff 72px,#4200ff 84px,#4a00ff 96px,#4f00ff 103px)"></div><div style="left:208px;top:422px;width:98px;height:2px;background:linear-gradient(90deg,#0b00ff 0px,#1300ff 12px,#1b00ff 24px,#2300ff 36px,#2b00ff 48px,#30f 60px,#3b00ff 72px,#40f 84px,#4c00ff 96px,#4d00ff 98px)"></div><div style="left:210px;top:424px;width:94px;height:2px;background:linear-gradient(90deg,#0c00ff 0px,#1400ff 12px,#1c00ff 24px,#2400ff 36px,#2c00ff 48px,#3400ff 60px,#3c00ff 72px,#40f 84px,#4b00ff 94px)"></div><div style="left:212px;top:426px;width:90px;height:2px;background:linear-gradient(90deg,#0d00ff 0px,#1500ff 12px,#1d00ff 24px,#2500ff 36px,#2d00ff 48px,#3500ff 60px,#3d00ff 72px,#4500ff 84px,#4900ff 90px)"></div><div style="left:215px;top:428px;width:85px;height:2px;background:linear-gradient(90deg,#0e00ff 0px,#1600ff 12px,#1e00ff 24px,#2600ff 36px,#2e00ff 48px,#3600ff 60px,#3e00ff 72px,#4700ff 84px,#4700ff 85px)"></div><div style="left:217px;top:430px;width:81px;height:2px;background:linear-gradient(90deg,#0f00ff 0px,#1700ff 12px,#1f00ff 24px,#2700ff 36px,#2f00ff 48px,#3700ff 60px,#3f00ff 72px,#4500ff 81px)"></div><div style="left:220px;top:432px;width:76px;height:2px;background:linear-gradient(90deg,#10f 0px,#1900ff 12px,#2100ff 24px,#2900ff 36px,#3100ff 48px,#3900ff 60px,#4100ff 72px,#4300ff 76px)"></div><div style="left:222px;top:434px;width:72px;height:2px;background:linear-gradient(90deg,#1200ff 0px,#1a00ff 12px,#20f 24px,#2a00ff 36px,#3200ff 48px,#3a00ff 60px,#4200ff 72px)"></div><div style="left:225px;top:436px;width:67px;height:2px;background:linear-gradient(90deg,#1400ff 0px,#1b00ff 12px,#2300ff 24px,#2b00ff 36px,#30f 48px,#3b00ff 60px,#4000ff 67px)"></div><div style="left:227px;top:438px;width:63px;height:2px;background:linear-gradient(90deg,#1500ff 0px,#1c00ff 12px,#2400ff 24px,#2c00ff 36px,#3400ff 48px,#3c00ff 60px,#3e00ff 63px)"></div><div style="left:229px;top:440px;width:59px;height:2px;background:linear-gradient(90deg,#1600ff 0px,#1d00ff 12px,#2500ff 24px,#2d00ff 36px,#3500ff 48px,#3c00ff 59px)"></div><div style="left:232px;top:442px;width:54px;height:2px;background:linear-gradient(90deg,#1700ff 0px,#1f00ff 12px,#2700ff 24px,#2e00ff 36px,#3600ff 48px,#3a00ff 54px)"></div><div style="left:234px;top:444px;width:51px;height:2px;background:linear-gradient(90deg,#1800ff 0px,#2000ff 12px,#2800ff 24px,#2f00ff 36px,#3700ff 48px,#3900ff 51px)"></div><div style="left:237px;top:446px;width:46px;height:2px;background:linear-gradient(90deg,#1a00ff 0px,#2100ff 12px,#2900ff 24px,#3100ff 36px,#3700ff 46px)"></div><div style="left:239px;top:448px;width:42px;height:2px;background:linear-gradient(90deg,#1b00ff 0px,#20f 12px,#2a00ff 24px,#3200ff 36px,#3500ff 42px)"></div><div style="left:241px;top:450px;width:38px;height:2px;background:linear-gradient(90deg,#1c00ff 0px,#2300ff 12px,#2b00ff 24px,#3200ff 36px,#3400ff 38px)"></div><div style="left:244px;top:452px;width:33px;height:2px;background:linear-gradient(90deg,#1d00ff 0px,#2500ff 12px,#2c00ff 24px,#3200ff 33px)"></div><div style="left:246px;top:454px;width:29px;height:2px;background:linear-gradient(90deg,#1e00ff 0px,#2600ff 12px,#2d00ff 24px,#3000ff 29px)"></div><div style="left:249px;top:456px;width:24px;height:2px;background:linear-gradient(90deg,#2000ff 0px,#2700ff 12px,#2f00ff 24px)"></div><div style="left:251px;top:458px;width:20px;height:2px;background:linear-gradient(90deg,#2100ff 0px,#2800ff 12px,#2d00ff 20px)"></div><div style="left:254px;top:460px;width:15px;height:2px;background:linear-gradient(90deg,#20f 0px,#2900ff 12px,#2b00ff 15px)"></div><div style="left:257px;top:462px;width:10px;height:2px;background:linear-gradient(90deg,#2300ff 0px,#2a00ff 10px)"></div></div></div>
<div style="left:1010.5px;top:562px;width:2px;height:5px;background:#d8d8d8"></div>
<div style="left:1006px;top:561.5px;width:5px;height:2px;background:#d8d8d8"></div>
<div style="left:1062.5px;top:562px;width:2px;height:5px;background:#d8d8d8"></div>
<div style="left:1006px;top:521.5px;width:5px;height:2px;background:#d8d8d8"></div>
<div style="left:1113.5px;top:562px;width:2px;height:5px;background:#d8d8d8"></div>
<div style="left:1006px;top:481.5px;width:5px;height:2px;background:#d8d8d8"></div>
<div style="left:1165.5px;top:562px;width:2px;height:5px;background:#d8d8d8"></div>
<div style="left:1006px;top:442.5px;width:5px;height:2px;background:#d8d8d8"></div>
<div style="left:1217.5px;top:562px;width:2px;height:5px;background:#d8d8d8"></div>
<div style="left:1006px;top:402.5px;width:5px;height:2px;background:#d8d8d8"></div>
<div style="left:1268.5px;top:562px;width:2px;height:5px;background:#d8d8d8"></div>
<div style="left:1006px;top:362.5px;width:5px;height:2px;background:#d8d8d8"></div>
<div style="left:1320.5px;top:562px;width:2px;height:5px;background:#d8d8d8"></div>
<div style="left:1006px;top:323.5px;width:5px;height:2px;background:#d8d8d8"></div>
<div style="left:1371.5px;top:562px;width:2px;height:5px;background:#d8d8d8"></div>
<div style="left:1006px;top:283.5px;width:5px;height:2px;background:#d8d8d8"></div>
<div style="left:1423.5px;top:562px;width:2px;height:5px;background:#d8d8d8"></div>
<div style="left:1006px;top:243.5px;width:5px;height:2px;background:#d8d8d8"></div>
<div style="left:1474.5px;top:562px;width:2px;height:5px;background:#d8d8d8"></div>
<div style="left:1006px;top:204.5px;width:5px;height:2px;background:#d8d8d8"></div>
<div style="left:1526.5px;top:562px;width:2px;height:5px;background:#d8d8d8"></div>
<div style="left:1006px;top:164.5px;width:5px;height:2px;background:#d8d8d8"></div>
<div style="left:1577.5px;top:562px;width:2px;height:5px;background:#d8d8d8"></div>
<div style="left:1006px;top:124.5px;width:5px;height:2px;background:#d8d8d8"></div>
<div style="left:1430px;top:392px;width:198px;height:130px;background:#1e1e1e"></div>
<div style="left:1432px;top:394px;width:194px;height:126px;background:#888"></div>
<div style="left:1433.5px;top:395.5px;width:191.0px;height:123.0px;overflow:hidden"><div style="left:-0px;top:0px;width:192px;height:2px;background:linear-gradient(90deg,#a9ff00 0px,#b0ff00 16px,#b8ff00 32px,#c1ff00 48px,#c9ff00 64px,#d1ff00 80px,#d9ff00 96px,#e2ff00 112px,#eaff00 128px,#f3ff00 144px,#fcff00 160px,#fffa00 176px,#fff100 192px)"></div><div style="left:-0px;top:2px;width:192px;height:2px;background:linear-gradient(90deg,#a9ff00 0px,#b1ff00 16px,#b9ff00 32px,#c1ff00 48px,#c9ff00 64px,#d2ff00 80px,#daff00 96px,#e3ff00 112px,#ebff00 128px,#f4ff00 144px,#fdff00 160px,#fff900 176px,#fff000 192px)"></div><div style="left:-0px;top:4px;width:192px;height:2px;background:linear-gradient(90deg,#af0 0px,#b2ff00 16px,#baff00 32px,#c2ff00 48px,#caff00 64px,#d3ff00 80px,#dbff00 96px,#e3ff00 112px,#ecff00 128px,#f5ff00 144px,#fdff00 160px,#fff800 176px,#fff000 192px)"></div><div style="left:-0px;top:6px;width:192px;height:2px;background:linear-gradient(90deg,#abff00 0px,#b3ff00 16px,#bf0 32px,#c3ff00 48px,#cbff00 64px,#d3ff00 80px,#dcff00 96px,#e4ff00 112px,#edff00 128px,#f6ff00 144px,#feff00 160px,#fff700 176px,#ffef00 192px)"></div><div style="left:-0px;top:8px;width:192px;height:2px;background:linear-gradient(90deg,#abff00 0px,#b3ff00 16px,#bf0 32px,#c4ff00 48px,#cf0 64px,#d4ff00 80px,#df0 96px,#e5ff00 112px,#ef0 128px,#f6ff00 144px,#ff0 160px,#fff600 176px,#fe0 192px)"></div><div style="left:-0px;top:10px;width:192px;height:2px;background:linear-gradient(90deg,#acff00 0px,#b4ff00 16px,#bcff00 32px,#c4ff00 48px,#cdff00 64px,#d5ff00 80px,#df0 96px,#e6ff00 112px,#efff00 128px,#f7ff00 144px,#fffe00 160px,#fff500 176px,#ffed00 192px)"></div><div style="left:-0px;top:12px;width:192px;height:2px;background:linear-gradient(90deg,#aeff00 3px,#b5ff00 16px,#bdff00 32px,#c5ff00 48px,#cdff00 64px,#d6ff00 80px,#deff00 96px,#e7ff00 112px,#efff00 128px,#f8ff00 144px,#fffd00 160px,#fff500 176px,#ffec00 192px)"></div><div style="left:-0px;top:14px;width:192px;height:2px;background:linear-gradient(90deg,#aeff01 0px,#b1ff00 7px,#b6ff00 16px,#beff00 32px,#c6ff00 48px,#ceff00 64px,#d6ff00 80px,#dfff00 96px,#e8ff00 112px,#f0ff00 128px,#f9ff00 144px,#fffc00 160px,#fff400 176px,#ffec00 192px)"></div><div style="left:-0px;top:16px;width:192px;height:2px;background:linear-gradient(90deg,#aeff02 0px,#b4ff00 11px,#b6ff00 16px,#beff00 32px,#c7ff00 48px,#cfff00 64px,#d7ff00 80px,#e0ff00 96px,#e8ff00 112px,#f1ff00 128px,#faff00 144px,#fffb00 160px,#fff300 176px,#ffeb00 192px)"></div><div style="left:-0px;top:18px;width:192px;height:2px;background:linear-gradient(90deg,#afff02 0px,#b6ff00 14px,#bfff00 32px,#c7ff00 48px,#d0ff00 64px,#d8ff00 80px,#e1ff00 96px,#e9ff00 112px,#f2ff00 128px,#fbff00 144px,#fffa00 160px,#fff200 176px,#ffea00 192px)"></div><div style="left:-0px;top:20px;width:192px;height:2px;background:linear-gradient(90deg,#b0ff03 0px,#b9ff00 18px,#c0ff00 32px,#c8ff00 48px,#d0ff00 64px,#d9ff00 80px,#e1ff00 96px,#eaff00 112px,#f3ff00 128px,#fcff00 144px,#fffa00 160px,#fff100 176px,#ffe900 192px)"></div><div style="left:-0px;top:22px;width:192px;height:2px;background:linear-gradient(90deg,#b0ff04 0px,#b8ff01 16px,#bcff00 22px,#c1ff00 32px,#c9ff00 48px,#d1ff00 64px,#daff00 80px,#e2ff00 96px,#ebff00 112px,#f4ff00 128px,#fcff00 144px,#fff900 160px,#fff000 176px,#ffe900 192px)"></div><div style="left:-0px;top:24px;width:192px;height:2px;background:linear-gradient(90deg,#b1ff04 0px,#b9ff02 16px,#beff00 26px,#c1ff00 32px,#caff00 48px,#d2ff00 64px,#daff00 80px,#e3ff00 96px,#ecff00 112px,#f4ff00 128px,#fdff00 144px,#fff800 160px,#fff000 176px,#ffe800 192px)"></div><div style="left:-0px;top:26px;width:192px;height:2px;background:linear-gradient(90deg,#b2ff05 0px,#baff02 16px,#c1ff00 30px,#caff00 48px,#d3ff00 64px,#dbff00 80px,#e4ff00 96px,#edff00 112px,#f5ff00 128px,#feff00 144px,#fff700 160px,#ffef00 176px,#ffe700 192px)"></div><div style="left:-0px;top:28px;width:192px;height:2px;background:linear-gradient(90deg,#b3ff06 0px,#bbff03 16px,#c4ff00 34px,#cbff00 48px,#d4ff00 64px,#dcff00 80px,#e5ff00 96px,#edff00 112px,#f6ff00 128px,#ff0 144px,#fff600 160px,#fe0 176px,#ffe600 192px)"></div><div style="left:-0px;top:30px;width:192px;height:2px;background:linear-gradient(90deg,#b3ff06 0px,#bbff04 16px,#c4ff01 32px,#c6ff00 37px,#cf0 48px,#d4ff00 64px,#df0 80px,#e6ff00 96px,#ef0 112px,#f7ff00 128px,#fffe00 144px,#fff500 160px,#ffed00 176px,#ffe500 192px)"></div><div style="left:-0px;top:32px;width:192px;height:2px;background:linear-gradient(90deg,#b4ff07 0px,#bcff04 16px,#c4ff02 32px,#c9ff00 41px,#cdff00 48px,#d5ff00 64px,#deff00 80px,#e6ff00 96px,#efff00 112px,#f8ff00 128px,#fffd00 144px,#fff400 160px,#ffec00 176px,#ffe500 192px)"></div><div style="left:-0px;top:34px;width:192px;height:2px;background:linear-gradient(90deg,#b5ff08 0px,#bdff05 16px,#c5ff02 32px,#cf0 45px,#d6ff00 64px,#dfff00 80px,#e7ff00 96px,#f0ff00 112px,#f9ff00 128px,#fffc00 144px,#fff400 160px,#ffec00 176px,#ffe400 192px)"></div><div style="left:-0px;top:36px;width:192px;height:2px;background:linear-gradient(90deg,#b5ff08 0px,#beff06 16px,#c6ff03 32px,#cfff00 49px,#d7ff00 64px,#dfff00 80px,#e8ff00 96px,#f1ff00 112px,#faff00 128px,#fffb00 144px,#fff300 160px,#ffeb00 176px,#ffe300 192px)"></div><div style="left:-0px;top:38px;width:192px;height:2px;background:linear-gradient(90deg,#b6ff09 0px,#beff06 16px,#c7ff04 32px,#cfff01 48px,#d2ff00 53px,#d8ff00 64px,#e0ff00 80px,#e9ff00 96px,#f2ff00 112px,#fbff00 128px,#fffa00 144px,#fff200 160px,#ffea00 176px,#ffe200 192px)"></div><div style="left:-0px;top:40px;width:192px;height:2px;background:linear-gradient(90deg,#b7ff0a 0px,#bfff07 16px,#c8ff04 32px,#d0ff01 48px,#d5ff00 57px,#d8ff00 64px,#e1ff00 80px,#eaff00 96px,#f3ff00 112px,#fbff00 128px,#fffa00 144px,#fff100 160px,#ffe900 176px,#ffe200 192px)"></div><div style="left:-0px;top:42px;width:192px;height:2px;background:linear-gradient(90deg,#b8ff0a 0px,#c0ff08 16px,#c8ff05 32px,#d1ff02 48px,#d7ff00 61px,#e2ff00 80px,#ebff00 96px,#f3ff00 112px,#fcff00 128px,#fff900 144px,#fff000 160px,#ffe800 176px,#ffe100 192px)"></div><div style="left:-0px;top:44px;width:192px;height:2px;background:linear-gradient(90deg,#b8ff0b 0px,#c1ff08 16px,#c9ff06 32px,#d2ff03 48px,#daff00 64px,#e3ff00 80px,#ebff00 96px,#f4ff00 112px,#fdff00 128px,#fff800 144px,#fff000 160px,#ffe800 176px,#ffe000 192px)"></div><div style="left:-0px;top:46px;width:192px;height:2px;background:linear-gradient(90deg,#b9ff0c 0px,#c1ff09 16px,#caff06 32px,#d2ff03 48px,#dbff01 64px,#df0 68px,#e4ff00 80px,#ecff00 96px,#f5ff00 112px,#feff00 128px,#fff700 144px,#ffef00 160px,#ffe700 176px,#ffdf00 192px)"></div><div style="left:-0px;top:48px;width:192px;height:2px;background:linear-gradient(90deg,#baff0c 0px,#c2ff0a 16px,#cbff07 32px,#d3ff04 48px,#dcff01 64px,#e0ff00 72px,#e4ff00 80px,#edff00 96px,#f6ff00 112px,#ff0 128px,#fff600 144px,#fe0 160px,#ffe600 176px,#ffdf00 192px)"></div><div style="left:-0px;top:50px;width:192px;height:2px;background:linear-gradient(90deg,#bbff0d 0px,#c3ff0a 16px,#cbff08 32px,#d4ff05 48px,#ddff02 64px,#e3ff00 76px,#e5ff00 80px,#ef0 96px,#f7ff00 112px,#fffe00 128px,#fff500 144px,#ffed00 160px,#ffe500 176px,#ffde00 192px)"></div><div style="left:-0px;top:52px;width:192px;height:2px;background:linear-gradient(90deg,#bbff0e 0px,#c4ff0b 16px,#ccff08 32px,#d5ff05 48px,#ddff03 64px,#e6ff00 80px,#efff00 96px,#f8ff00 112px,#fffd00 128px,#fff400 144px,#ffec00 160px,#ffe400 176px,#fd0 192px)"></div><div style="left:-0px;top:54px;width:192px;height:2px;background:linear-gradient(90deg,#bcff0e 0px,#c5ff0c 16px,#cdff09 32px,#d6ff06 48px,#deff03 64px,#e9ff00 84px,#f0ff00 96px,#f9ff00 112px,#fffc00 128px,#fff400 144px,#ffeb00 160px,#ffe400 176px,#ffdc00 192px)"></div><div style="left:-0px;top:56px;width:192px;height:2px;background:linear-gradient(90deg,#bdff0f 0px,#c5ff0c 16px,#ceff0a 32px,#d6ff07 48px,#dfff04 64px,#e8ff01 80px,#ecff00 87px,#f1ff00 96px,#faff00 112px,#fffb00 128px,#fff300 144px,#ffeb00 160px,#ffe300 176px,#ffdc00 192px)"></div><div style="left:-0px;top:58px;width:192px;height:2px;background:linear-gradient(90deg,#beff10 0px,#c6ff0d 16px,#cfff0a 32px,#d7ff08 48px,#e0ff05 64px,#e9ff02 80px,#efff00 91px,#f1ff00 96px,#faff00 112px,#fffb00 128px,#fff200 144px,#ffea00 160px,#ffe200 176px,#ffdb00 192px)"></div><div style="left:-0px;top:60px;width:192px;height:2px;background:linear-gradient(90deg,#beff10 0px,#c7ff0e 16px,#cfff0b 32px,#d8ff08 48px,#e1ff05 64px,#e9ff03 80px,#f2ff00 95px,#fbff00 112px,#fffa00 128px,#fff100 144px,#ffe900 160px,#ffe100 176px,#ffda00 192px)"></div><div style="left:-0px;top:62px;width:192px;height:2px;background:linear-gradient(90deg,#bfff11 0px,#c8ff0e 16px,#d0ff0c 32px,#d9ff09 48px,#e1ff06 64px,#eaff03 80px,#f5ff00 99px,#fcff00 112px,#fff900 128px,#fff000 144px,#ffe800 160px,#ffe100 176px,#ffd900 192px)"></div><div style="left:-0px;top:64px;width:192px;height:2px;background:linear-gradient(90deg,#c0ff12 0px,#c8ff0f 16px,#d1ff0c 32px,#daff0a 48px,#e2ff07 64px,#ebff04 80px,#f4ff01 96px,#f8ff00 103px,#fdff00 112px,#fff800 128px,#ffef00 144px,#ffe700 160px,#ffe000 176px,#ffd900 192px)"></div><div style="left:-0px;top:66px;width:192px;height:2px;background:linear-gradient(90deg,#c1ff12 0px,#c9ff10 16px,#d2ff0d 32px,#daff0a 48px,#e3ff08 64px,#ecff05 80px,#f5ff02 96px,#fbff00 107px,#feff00 112px,#fff700 128px,#ffef00 144px,#ffe700 160px,#ffdf00 176px,#ffd800 192px)"></div><div style="left:-0px;top:68px;width:192px;height:2px;background:linear-gradient(90deg,#c2ff13 0px,#caff10 16px,#d3ff0e 32px,#dbff0b 48px,#e4ff08 64px,#edff05 80px,#f6ff03 96px,#feff00 110px,#fff600 128px,#fe0 144px,#ffe600 160px,#ffde00 176px,#ffd700 192px)"></div><div style="left:-0px;top:70px;width:192px;height:2px;background:linear-gradient(90deg,#c2ff14 0px,#cbff11 16px,#d3ff0e 32px,#dcff0c 48px,#e5ff09 64px,#eeff06 80px,#f7ff03 96px,#fffd00 114px,#fff500 128px,#ffed00 144px,#ffe500 160px,#ffde00 176px,#ffd700 192px)"></div><div style="left:-0px;top:72px;width:192px;height:2px;background:linear-gradient(90deg,#c3ff14 0px,#ccff12 16px,#d4ff0f 32px,#ddff0c 48px,#e6ff0a 64px,#efff07 80px,#f8ff04 96px,#fffd01 112px,#fffa00 118px,#fff400 128px,#ffec00 144px,#ffe400 160px,#fd0 176px,#ffd600 192px)"></div><div style="left:-0px;top:74px;width:192px;height:2px;background:linear-gradient(90deg,#c4ff15 0px,#ccff12 16px,#d5ff10 32px,#deff0d 48px,#e7ff0a 64px,#efff07 80px,#f9ff05 96px,#fffc02 112px,#fff700 122px,#fff400 128px,#ffeb00 144px,#ffe400 160px,#ffdc00 176px,#ffd500 192px)"></div><div style="left:-0px;top:76px;width:192px;height:2px;background:linear-gradient(90deg,#c5ff16 0px,#cdff13 16px,#d6ff10 32px,#dfff0e 48px,#e7ff0b 64px,#f0ff08 80px,#f9ff05 96px,#fffb02 112px,#fff400 126px,#ffeb00 144px,#ffe300 160px,#ffdb00 176px,#ffd400 192px)"></div><div style="left:-0px;top:78px;width:192px;height:2px;background:linear-gradient(90deg,#c5ff17 0px,#ceff14 16px,#d7ff11 32px,#dfff0e 48px,#e8ff0c 64px,#f1ff09 80px,#faff06 96px,#fffb03 112px,#fff100 130px,#ffea00 144px,#ffe200 160px,#ffdb00 176px,#ffd400 192px)"></div><div style="left:-0px;top:80px;width:192px;height:2px;background:linear-gradient(90deg,#c6ff17 0px,#cfff15 16px,#d7ff12 32px,#e0ff0f 48px,#e9ff0c 64px,#f2ff0a 80px,#fbff07 96px,#fffa04 112px,#fff101 128px,#fe0 134px,#ffe900 144px,#ffe100 160px,#ffda00 176px,#ffd300 192px)"></div><div style="left:-0px;top:82px;width:192px;height:2px;background:linear-gradient(90deg,#c7ff18 0px,#d0ff15 16px,#d8ff13 32px,#e1ff10 48px,#eaff0d 64px,#f3ff0a 80px,#fcff07 96px,#fff904 112px,#fff002 128px,#ffeb00 137px,#ffe800 144px,#ffe000 160px,#ffd900 176px,#ffd200 192px)"></div><div style="left:-0px;top:84px;width:192px;height:2px;background:linear-gradient(90deg,#c8ff19 0px,#d0ff16 16px,#d9ff13 32px,#e2ff11 48px,#ebff0e 64px,#f4ff0b 80px,#fdff08 96px,#fff805 112px,#ffef02 128px,#ffe900 141px,#ffe000 160px,#ffd800 176px,#ffd200 192px)"></div><div style="left:-0px;top:86px;width:192px;height:2px;background:linear-gradient(90deg,#c9ff19 0px,#d1ff17 16px,#daff14 32px,#e3ff11 48px,#ecff0f 64px,#f5ff0c 80px,#feff09 96px,#fff706 112px,#ffef03 128px,#ffe600 145px,#ffdf00 160px,#ffd800 176px,#ffd100 192px)"></div><div style="left:-0px;top:88px;width:192px;height:2px;background:linear-gradient(90deg,#c9ff1a 0px,#d2ff17 16px,#dbff15 32px,#e4ff12 48px,#edff0f 64px,#f6ff0c 80px,#ffff0a 96px,#fff607 112px,#ffee04 128px,#ffe601 144px,#ffe300 149px,#ffde00 160px,#ffd700 176px,#ffd000 192px)"></div><div style="left:-0px;top:90px;width:192px;height:2px;background:linear-gradient(90deg,#caff1b 0px,#d3ff18 16px,#dcff15 32px,#e5ff13 48px,#edff10 64px,#f7ff0d 80px,#fffe0a 96px,#fff507 112px,#ffed04 128px,#ffe501 144px,#ffe100 153px,#fd0 160px,#ffd600 176px,#ffcf00 192px)"></div><div style="left:-0px;top:92px;width:192px;height:2px;background:linear-gradient(90deg,#cbff1c 0px,#d4ff19 16px,#dcff16 32px,#e5ff13 48px,#ef1 64px,#f7ff0e 80px,#fffd0b 96px,#fff408 112px,#ffec05 128px,#ffe402 144px,#ffde00 157px,#ffd600 176px,#ffcf00 192px)"></div><div style="left:-0px;top:94px;width:192px;height:2px;background:linear-gradient(90deg,#ccff1c 0px,#d5ff1a 16px,#ddff17 32px,#e6ff14 48px,#efff11 64px,#f8ff0f 80px,#fffc0c 96px,#fff408 112px,#ffeb06 128px,#ffe303 144px,#ffdc00 160px,#ffd500 176px,#ffce00 192px)"></div><div style="left:-0px;top:96px;width:192px;height:2px;background:linear-gradient(90deg,#cdff1d 0px,#d5ff1a 16px,#deff18 32px,#e7ff15 48px,#f0ff12 64px,#f9ff0f 80px,#fffc0c 96px,#fff309 112px,#ffea06 128px,#ffe303 144px,#ffdb01 160px,#ffd900 164px,#ffd400 176px,#ffcd00 192px)"></div><div style="left:-0px;top:98px;width:192px;height:2px;background:linear-gradient(90deg,#cdff1e 0px,#d6ff1b 16px,#dfff18 32px,#e8ff16 48px,#f1ff13 64px,#faff10 80px,#fffb0d 96px,#fff20a 112px,#ffea07 128px,#ffe204 144px,#ffda01 160px,#ffd700 168px,#ffd300 176px,#ffcd00 192px)"></div><div style="left:-0px;top:100px;width:192px;height:2px;background:linear-gradient(90deg,#ceff1e 0px,#d7ff1c 16px,#e0ff19 32px,#e9ff16 48px,#f2ff14 64px,#fbff11 80px,#fffa0e 96px,#fff10a 112px,#ffe907 128px,#ffe105 144px,#ffda02 160px,#ffd400 172px,#ffd300 176px,#fc0 192px)"></div><div style="left:-0px;top:102px;width:192px;height:2px;background:linear-gradient(90deg,#cfff1f 0px,#d8ff1c 16px,#e1ff1a 32px,#eaff17 48px,#f3ff14 64px,#fcff11 80px,#fff90e 96px,#fff00b 112px,#ffe808 128px,#ffe005 144px,#ffd903 160px,#ffd200 176px,#ffcb00 192px)"></div><div style="left:-0px;top:104px;width:192px;height:2px;background:linear-gradient(90deg,#d0ff20 0px,#d9ff1d 16px,#e2ff1b 32px,#ebff18 48px,#f4ff15 64px,#fdff12 80px,#fff80f 96px,#ffef0c 112px,#ffe709 128px,#ffdf06 144px,#ffd803 160px,#ffd000 180px,#ffcb00 192px)"></div><div style="left:-0px;top:106px;width:192px;height:2px;background:linear-gradient(90deg,#d1ff21 0px,#daff1e 16px,#e2ff1b 32px,#ebff19 48px,#f5ff16 64px,#feff13 80px,#fff710 96px,#ffee0c 112px,#ffe609 128px,#ffdf06 144px,#ffd704 160px,#ffd101 176px,#ffcd00 183px,#ffca00 192px)"></div><div style="left:-0px;top:108px;width:192px;height:2px;background:linear-gradient(90deg,#d2ff21 0px,#daff1f 16px,#e3ff1c 32px,#ecff19 48px,#f5ff16 64px,#ffff14 80px,#fff610 96px,#ffee0d 112px,#ffe60a 128px,#ffde07 144px,#ffd704 160px,#ffd002 176px,#ffcb00 187px,#ffc900 192px)"></div><div style="left:-0px;top:110px;width:192px;height:2px;background:linear-gradient(90deg,#d2ff22 0px,#dbff1f 16px,#e4ff1d 32px,#edff1a 48px,#f6ff17 64px,#fffe14 80px,#fff511 96px,#ffed0e 112px,#ffe50b 128px,#ffdd08 144px,#ffd605 160px,#ffcf02 176px,#ffc900 191px)"></div><div style="left:-0px;top:112px;width:192px;height:2px;background:linear-gradient(90deg,#d3ff23 0px,#dcff20 16px,#e5ff1d 32px,#eeff1b 48px,#f7ff18 64px,#fffd15 80px,#fff412 96px,#ffec0e 112px,#ffe40b 128px,#ffdc08 144px,#ffd506 160px,#ffce03 176px,#ffc800 192px)"></div><div style="left:-0px;top:114px;width:192px;height:2px;background:linear-gradient(90deg,#d4ff24 0px,#ddff21 16px,#e6ff1e 32px,#efff1b 48px,#f8ff19 64px,#fffc16 80px,#fff412 96px,#ffeb0f 112px,#ffe30c 128px,#ffdc09 144px,#ffd406 160px,#ffce04 176px,#ffc701 192px)"></div><div style="left:-0px;top:116px;width:192px;height:2px;background:linear-gradient(90deg,#d5ff24 0px,#deff22 16px,#e7ff1f 32px,#f0ff1c 48px,#f9ff19 64px,#fffc16 80px,#fff313 96px,#ffea10 112px,#ffe20c 128px,#ffdb0a 144px,#ffd407 160px,#ffcd04 176px,#ffc702 192px)"></div><div style="left:-0px;top:118px;width:192px;height:2px;background:linear-gradient(90deg,#d6ff25 0px,#dfff22 16px,#e8ff20 32px,#f1ff1d 48px,#faff1a 64px,#fffb17 80px,#fff214 96px,#ffe910 112px,#ffe20d 128px,#ffda0a 144px,#ffd307 160px,#ffcc05 176px,#ffc602 192px)"></div><div style="left:-0px;top:120px;width:192px;height:2px;background:linear-gradient(90deg,#d7ff26 0px,#dfff23 16px,#e9ff20 32px,#f2ff1e 48px,#fbff1b 64px,#fffa18 80px,#fff114 96px,#ffe911 112px,#ffe10e 128px,#ffd90b 144px,#ffd208 160px,#ffcc05 176px,#ffc503 192px)"></div><div style="left:-0px;top:122px;width:192px;height:2px;background:linear-gradient(90deg,#d7ff27 0px,#e0ff24 16px,#e9ff21 32px,#f3ff1e 48px,#fcff1c 64px,#fff918 80px,#fff015 96px,#ffe811 112px,#ffe00e 128px,#ffd90b 144px,#ffd209 160px,#ffcb06 176px,#ffc503 192px)"></div></div>
<div style="left:1383px;top:529.5px;width:244px;height:27px;background:#2e2e2e"></div>
<div style="left:339px;top:609.5px;width:1300px;height:27.5px;background:linear-gradient(#2c2c2c,#242424 48%,#101010 52%,#181818)"></div>
<div style="left:354px;top:637px;width:1285px;height:25px;background:#414141"></div>
<div style="left:339px;top:637px;width:15px;height:25px;background:linear-gradient(90deg,#242424,#3c3c3c)"></div>
<div style="left:354px;top:662px;width:1285px;height:25px;background:#6c6c6c"></div>
<div style="left:339px;top:662px;width:15px;height:25px;background:linear-gradient(90deg,#242424,#3c3c3c)"></div>
<div style="left:354px;top:687px;width:1285px;height:24px;background:#414141"></div>
<div style="left:339px;top:687px;width:15px;height:24px;background:linear-gradient(90deg,#242424,#3c3c3c)"></div>
<div style="left:354px;top:711px;width:1285px;height:25px;background:#6c6c6c"></div>
<div style="left:339px;top:711px;width:15px;height:25px;background:linear-gradient(90deg,#242424,#3c3c3c)"></div>
<div style="left:354px;top:736px;width:1285px;height:25px;background:#414141"></div>
<div style="left:339px;top:736px;width:15px;height:25px;background:linear-gradient(90deg,#242424,#3c3c3c)"></div>
<div style="left:354px;top:761px;width:1285px;height:25px;background:#6c6c6c"></div>
<div style="left:339px;top:761px;width:15px;height:25px;background:linear-gradient(90deg,#242424,#3c3c3c)"></div>
<div style="left:354px;top:786px;width:1285px;height:25px;background:#414141"></div>
<div style="left:339px;top:786px;width:15px;height:25px;background:linear-gradient(90deg,#242424,#3c3c3c)"></div>
<div style="left:339px;top:609.5px;width:15px;height:27.5px;background:#000"></div>
<div style="left:353px;top:811px;width:1286px;height:15px;background:#5c5c5c"></div>
<div style="left:371px;top:812.5px;width:558px;height:12px;background:#404040;border-radius:6px"></div>
<div style="left:354px;top:811px;width:14px;height:15px;background:#8a8a8a;border-radius:2px"></div>
<div style="left:1624px;top:811px;width:14px;height:15px;background:#8a8a8a;border-radius:2px"></div>
<div style="left:0px;top:829px;width:1657px;height:78px;background:#2a2a2a"></div>
<div style="left:-35.6px;top:833px;width:62px;height:60px;background:linear-gradient(#a2a2a2,#8e8e8e 40%,#707070);border-radius:5px;border:1px solid #8a8a8a;border-bottom-color:#5a5a5a"></div>
<div style="left:-29.3px;top:839px;width:49.5px;height:15px;background:#8a86c8;border-radius:4px;box-shadow:inset 1px 1px 1px rgba(0,0,0,.3),0 1px 0 rgba(255,255,255,.12)"></div>
<div style="left:29.4px;top:833px;width:62px;height:60px;background:linear-gradient(#a2a2a2,#8e8e8e 40%,#707070);border-radius:5px;border:1px solid #8a8a8a;border-bottom-color:#5a5a5a"></div>
<div style="left:35.7px;top:839px;width:49.5px;height:15px;background:#62c8ae;border-radius:4px;box-shadow:inset 1px 1px 1px rgba(0,0,0,.3),0 1px 0 rgba(255,255,255,.12)"></div>
<div style="left:94.4px;top:833px;width:62px;height:60px;background:linear-gradient(#a2a2a2,#8e8e8e 40%,#707070);border-radius:5px;border:1px solid #8a8a8a;border-bottom-color:#5a5a5a"></div>
<div style="left:100.7px;top:839px;width:49.5px;height:29px;background:#e07a28;border-radius:4px;box-shadow:inset 1px 1px 1px rgba(0,0,0,.3),0 1px 0 rgba(255,255,255,.12)"></div>
<div style="left:159.4px;top:833px;width:62px;height:60px;background:linear-gradient(#a2a2a2,#8e8e8e 40%,#707070);border-radius:5px;border:1px solid #8a8a8a;border-bottom-color:#5a5a5a"></div>
<div style="left:165.7px;top:839px;width:49.5px;height:15px;background:#4860b4;border-radius:4px;box-shadow:inset 1px 1px 1px rgba(0,0,0,.3),0 1px 0 rgba(255,255,255,.12)"></div>
<div style="left:224.4px;top:833px;width:62px;height:60px;background:linear-gradient(#a2a2a2,#8e8e8e 40%,#707070);border-radius:5px;border:1px solid #8a8a8a;border-bottom-color:#5a5a5a"></div>
<div style="left:230.7px;top:839px;width:49.5px;height:15px;background:#cc5064;border-radius:4px;box-shadow:inset 1px 1px 1px rgba(0,0,0,.3),0 1px 0 rgba(255,255,255,.12)"></div>
<div style="left:289.4px;top:833px;width:62px;height:60px;background:linear-gradient(#a2a2a2,#8e8e8e 40%,#707070);border-radius:5px;border:1px solid #8a8a8a;border-bottom-color:#5a5a5a"></div>
<div style="left:295.7px;top:839px;width:49.5px;height:29px;background:#5c3c70;border-radius:4px;box-shadow:inset 1px 1px 1px rgba(0,0,0,.3),0 1px 0 rgba(255,255,255,.12)"></div>
<div style="left:354.4px;top:833px;width:62px;height:60px;background:linear-gradient(#a2a2a2,#8e8e8e 40%,#707070);border-radius:5px;border:1px solid #8a8a8a;border-bottom-color:#5a5a5a"></div>
<div style="left:360.7px;top:839px;width:49.5px;height:15px;background:#a8c83c;border-radius:4px;box-shadow:inset 1px 1px 1px rgba(0,0,0,.3),0 1px 0 rgba(255,255,255,.12)"></div>
<div style="left:419.4px;top:833px;width:62px;height:60px;background:linear-gradient(#a2a2a2,#8e8e8e 40%,#707070);border-radius:5px;border:1px solid #8a8a8a;border-bottom-color:#5a5a5a"></div>
<div style="left:425.7px;top:839px;width:49.5px;height:15px;background:#eca030;border-radius:4px;box-shadow:inset 1px 1px 1px rgba(0,0,0,.3),0 1px 0 rgba(255,255,255,.12)"></div>
<div style="left:484.4px;top:833px;width:62px;height:60px;background:linear-gradient(#a2a2a2,#8e8e8e 40%,#707070);border-radius:5px;border:1px solid #8a8a8a;border-bottom-color:#5a5a5a"></div>
<div style="left:490.7px;top:839px;width:49.5px;height:29px;background:#3440a0;border-radius:4px;box-shadow:inset 1px 1px 1px rgba(0,0,0,.3),0 1px 0 rgba(255,255,255,.12)"></div>
<div style="left:549.4px;top:833px;width:62px;height:60px;background:linear-gradient(#a2a2a2,#8e8e8e 40%,#707070);border-radius:5px;border:1px solid #8a8a8a;border-bottom-color:#5a5a5a"></div>
<div style="left:555.7px;top:839px;width:49.5px;height:29px;background:#46a04a;border-radius:4px;box-shadow:inset 1px 1px 1px rgba(0,0,0,.3),0 1px 0 rgba(255,255,255,.12)"></div>
<div style="left:614.4px;top:833px;width:62px;height:60px;background:linear-gradient(#a2a2a2,#8e8e8e 40%,#707070);border-radius:5px;border:1px solid #8a8a8a;border-bottom-color:#5a5a5a"></div>
<div style="left:620.7px;top:839px;width:49.5px;height:29px;background:#b82c38;border-radius:4px;box-shadow:inset 1px 1px 1px rgba(0,0,0,.3),0 1px 0 rgba(255,255,255,.12)"></div>
<div style="left:679.4px;top:833px;width:62px;height:60px;background:linear-gradient(#a2a2a2,#8e8e8e 40%,#707070);border-radius:5px;border:1px solid #8a8a8a;border-bottom-color:#5a5a5a"></div>
<div style="left:685.7px;top:839px;width:49.5px;height:29px;background:#f0cc20;border-radius:4px;box-shadow:inset 1px 1px 1px rgba(0,0,0,.3),0 1px 0 rgba(255,255,255,.12)"></div>
<div style="left:744.4px;top:833px;width:62px;height:60px;background:linear-gradient(#a2a2a2,#8e8e8e 40%,#707070);border-radius:5px;border:1px solid #8a8a8a;border-bottom-color:#5a5a5a"></div>
<div style="left:750.7px;top:839px;width:49.5px;height:29px;background:#c8509c;border-radius:4px;box-shadow:inset 1px 1px 1px rgba(0,0,0,.3),0 1px 0 rgba(255,255,255,.12)"></div>
<div style="left:809.4px;top:833px;width:62px;height:60px;background:linear-gradient(#a2a2a2,#8e8e8e 40%,#707070);border-radius:5px;border:1px solid #8a8a8a;border-bottom-color:#5a5a5a"></div>
<div style="left:815.7px;top:839px;width:49.5px;height:29px;background:#0c94b8;border-radius:4px;box-shadow:inset 1px 1px 1px rgba(0,0,0,.3),0 1px 0 rgba(255,255,255,.12)"></div>
<div style="left:874.4px;top:833px;width:62px;height:60px;background:linear-gradient(#a2a2a2,#8e8e8e 40%,#707070);border-radius:5px;border:1px solid #8a8a8a;border-bottom-color:#5a5a5a"></div>
<div style="left:880.7px;top:839px;width:49.5px;height:29px;background:#ff0000;border-radius:4px;box-shadow:inset 1px 1px 1px rgba(0,0,0,.3),0 1px 0 rgba(255,255,255,.12)"></div>
<div style="left:939.4px;top:833px;width:62px;height:60px;background:linear-gradient(#a2a2a2,#8e8e8e 40%,#707070);border-radius:5px;border:1px solid #8a8a8a;border-bottom-color:#5a5a5a"></div>
<div style="left:945.7px;top:839px;width:49.5px;height:15px;background:#00ff00;border-radius:4px;box-shadow:inset 1px 1px 1px rgba(0,0,0,.3),0 1px 0 rgba(255,255,255,.12)"></div>
<div style="left:1004.4px;top:833px;width:62px;height:60px;background:linear-gradient(#a2a2a2,#8e8e8e 40%,#707070);border-radius:5px;border:1px solid #8a8a8a;border-bottom-color:#5a5a5a"></div>
<div style="left:1010.7px;top:839px;width:49.5px;height:15px;background:#0000ff;border-radius:4px;box-shadow:inset 1px 1px 1px rgba(0,0,0,.3),0 1px 0 rgba(255,255,255,.12)"></div>
<div style="left:1069.4px;top:833px;width:62px;height:60px;background:linear-gradient(#a2a2a2,#8e8e8e 40%,#707070);border-radius:5px;border:1px solid #8a8a8a;border-bottom-color:#5a5a5a"></div>
<div style="left:1075.7px;top:839px;width:49.5px;height:15px;background:#00ffff;border-radius:4px;box-shadow:inset 1px 1px 1px rgba(0,0,0,.3),0 1px 0 rgba(255,255,255,.12)"></div>
<div style="left:1134.4px;top:833px;width:62px;height:60px;background:linear-gradient(#a2a2a2,#8e8e8e 40%,#707070);border-radius:5px;border:1px solid #8a8a8a;border-bottom-color:#5a5a5a"></div>
<div style="left:1140.7px;top:839px;width:49.5px;height:15px;background:#ff00ff;border-radius:4px;box-shadow:inset 1px 1px 1px rgba(0,0,0,.3),0 1px 0 rgba(255,255,255,.12)"></div>
<div style="left:1199.4px;top:833px;width:62px;height:60px;background:linear-gradient(#2a2a2a,#0a0a0a);border-radius:5px;border:1px solid #333;border-bottom-color:#222"></div>
<div style="left:1205.7px;top:839px;width:49.5px;height:15px;background:#ffff00;border-radius:4px;box-shadow:inset 1px 1px 1px rgba(0,0,0,.3),0 1px 0 rgba(255,255,255,.12)"></div>
<div style="left:0px;top:894px;width:1264px;height:13px;background:#5c5c5c"></div>
<div style="left:0px;top:894px;width:14px;height:13px;background:#8a8a8a;border-radius:2px"></div>
<div style="left:1250px;top:894px;width:14px;height:13px;background:#8a8a8a;border-radius:2px"></div>
<div style="left:451px;top:895px;width:796px;height:12px;background:#404040;border-radius:6px"></div>
<div style="left:1265px;top:832px;width:61px;height:24px;background:linear-gradient(#9c9c9c,#8a8a8a 45%,#6e6e6e);border-radius:5px 5px 0 0;border:1px solid #999;border-bottom:1px solid #555"></div>
<div style="left:1265px;top:856px;width:61px;height:51px;background:linear-gradient(#8e8e8e,#7a7a7a);border:1px solid #999;border-top:1px solid #aaa"></div>
<div style="left:1286px;top:834px;width:20px;height:20px;border-radius:10px;background:linear-gradient(#7c7c7c,#9a9a9a)"></div>
<div style="left:1275px;top:862px;width:40px;height:40px;background:linear-gradient(#c4c4c4,#a8a8a8 50%,#8a8a8a 52%,#9a9a9a);border:3px solid #2e2e2e;border-radius:7px"></div>
<div style="left:1286px;top:873px;width:18px;height:18px;background:#000"></div>
<div style="left:1326px;top:832px;width:58px;height:38px;background:linear-gradient(#9c9c9c,#8a8a8a 45%,#6e6e6e);border-left:1px solid #b0b0b0;border-right:1px solid #5a5a5a;border-top:1px solid #b0b0b0;border-radius:5px 0 0 0"></div>
<div style="left:1343.5px;top:839px;width:24px;height:24px;border-radius:12px;background:linear-gradient(#787878,#9c9c9c)"></div>
<div style="left:1384px;top:832px;width:56px;height:38px;background:linear-gradient(#9c9c9c,#8a8a8a 45%,#6e6e6e);border-left:1px solid #b0b0b0;border-right:1px solid #5a5a5a;border-top:1px solid #b0b0b0;border-radius:0"></div>
<div style="left:1400.5px;top:839px;width:24px;height:24px;border-radius:12px;background:linear-gradient(#787878,#9c9c9c)"></div>
<div style="left:1440px;top:832px;width:56px;height:38px;background:linear-gradient(#9c9c9c,#8a8a8a 45%,#6e6e6e);border-left:1px solid #b0b0b0;border-right:1px solid #5a5a5a;border-top:1px solid #b0b0b0;border-radius:0"></div>
<div style="left:1456.5px;top:839px;width:24px;height:24px;border-radius:12px;background:linear-gradient(#787878,#9c9c9c)"></div>
<div style="left:1497px;top:832px;width:56px;height:38px;background:linear-gradient(#9c9c9c,#8a8a8a 45%,#6e6e6e);border-left:1px solid #b0b0b0;border-right:1px solid #5a5a5a;border-top:1px solid #b0b0b0;border-radius:5px 0 0 0"></div>
<div style="left:1513.5px;top:839px;width:24px;height:24px;border-radius:12px;background:linear-gradient(#787878,#9c9c9c)"></div>
<div style="left:1553px;top:832px;width:56px;height:38px;background:linear-gradient(#2c2c2c,#3c3c3c);border-left:1px solid #444;border-right:1px solid #222;border-top:1px solid #444;border-radius:0"></div>
<div style="left:1569.5px;top:839px;width:24px;height:24px;border-radius:12px;background:linear-gradient(#262626,#333)"></div>
<div style="left:1609px;top:832px;width:56px;height:38px;background:linear-gradient(#2c2c2c,#3c3c3c);border-left:1px solid #444;border-right:1px solid #222;border-top:1px solid #444;border-radius:0"></div>
<div style="left:1625.5px;top:839px;width:24px;height:24px;border-radius:12px;background:linear-gradient(#262626,#333)"></div>
<div style="left:1326px;top:871px;width:171px;height:40px;background:linear-gradient(#a0a0a0,#8c8c8c 50%,#767676);border-radius:6px 0 0 0;border:1px solid #b4b4b4;border-right:1px solid #5a5a5a"></div>
<div style="left:1497px;top:871px;width:170px;height:40px;background:linear-gradient(#a0a0a0,#8c8c8c 50%,#767676);border-radius:6px 0 0 0;border:1px solid #b4b4b4"></div>
<div style="left:1353px;top:878px;width:24px;height:24px;border-radius:12px;background:linear-gradient(#787878,#9c9c9c)"></div>
<div style="left:1620px;top:878px;width:24px;height:24px;border-radius:12px;background:linear-gradient(#787878,#9c9c9c)"></div>
</div>
<svg id="o" width="1657" height="907" viewBox="0 0 1657 907">
<defs><clipPath id="pc"><rect x="1012" y="86" width="619" height="475"/></clipPath><clipPath id="tc"><rect x="339" y="611" width="1299" height="200"/></clipPath><clipPath id="bc"><rect x="0" y="829" width="1264" height="65"/></clipPath></defs>
<text x="6" y="29" font-size="14.5" fill="#dcdcdc" stroke="#dcdcdc" stroke-width="0.4" textLength="59" lengthAdjust="spacingAndGlyphs">History 1</text>
<text x="91" y="31" font-size="15" fill="#8a8a8a" text-anchor="middle">+</text>
<path d="M1157.5,19.5h12l-6,7z" fill="#fff"/>
<text x="1064.5" y="18" font-size="13.5" fill="#ececec" stroke="#ececec" stroke-width="0.4" textLength="82" lengthAdjust="spacingAndGlyphs">X-Rite i1Pro 2</text>
<text x="1064.5" y="36.5" font-size="13.5" fill="#ececec" stroke="#ececec" stroke-width="0.4" textLength="70" lengthAdjust="spacingAndGlyphs">Direct View</text>
<circle cx="1213" cy="22.5" r="15.5" fill="#0000f0" stroke="#e8e8ff" stroke-width="1"/>
<text x="1213" y="27" font-size="12.5" fill="#fff" font-weight="bold" text-anchor="middle" textLength="20" lengthAdjust="spacingAndGlyphs">204</text>
<path d="M1376,19.5h12l-6,7z" fill="#fff"/>
<text x="1251" y="18" font-size="13.5" fill="#ececec" stroke="#ececec" stroke-width="0.4" textLength="80" lengthAdjust="spacingAndGlyphs">Mobile Forge</text>
<path d="M1563,19.5h12l-6,7z" fill="#fff"/>
<text x="1421" y="18" font-size="13.5" fill="#ececec" stroke="#ececec" stroke-width="0.4" textLength="131" lengthAdjust="spacingAndGlyphs">Direct Display Control</text>
<path d="M1622.7,19.5L1622.7,22.5L1620.0,22.4L1619.3,24.2L1621.2,26.1L1619.1,28.2L1617.2,26.3L1615.4,27.0L1615.5,29.7L1612.5,29.7L1612.6,27.0L1610.8,26.3L1608.9,28.2L1606.8,26.1L1608.7,24.2L1608.0,22.4L1605.3,22.5L1605.3,19.5L1608.0,19.6L1608.7,17.8L1606.8,15.9L1608.9,13.8L1610.8,15.7L1612.6,15.0L1612.5,12.3L1615.5,12.3L1615.4,15.0L1617.2,15.7L1619.1,13.8L1621.2,15.9L1619.3,17.8L1620.0,19.6ZM1617.4,21a3.4,3.4 0 1,0 -6.8,0a3.4,3.4 0 1,0 6.8,0Z" fill="#c8c8c8" fill-rule="evenodd"/>
<path d="M1657,15l-8,6.5l8,6.5z" fill="#eee"/>
<text x="50" y="97.5" font-size="37.9" fill="#f4f4f4" textLength="227" lengthAdjust="spacingAndGlyphs">ColorChecker</text>
<text x="50" y="126" font-size="15.9" fill="#f0f0f0" stroke="#f0f0f0" stroke-width="0.45" textLength="323" lengthAdjust="spacingAndGlyphs">Display analysis is performed with the X-Rite/</text>
<text x="50" y="148" font-size="15.9" fill="#f0f0f0" stroke="#f0f0f0" stroke-width="0.45" textLength="264" lengthAdjust="spacingAndGlyphs">Pantone ColorChecker<tspan font-size="8" dy="-6">®</tspan><tspan dy="6"> target colors.</tspan></text>
<text x="208.5" y="186.5" font-size="13.5" fill="#d0d0d0" text-anchor="middle" stroke="#d0d0d0" stroke-width="0.4" textLength="78" lengthAdjust="spacingAndGlyphs">DeltaE 2000</text>
<text x="46" y="572.5" font-size="13.6" fill="#d8d8d8" text-anchor="middle" stroke="#d8d8d8" stroke-width="0.5" textLength="7.8" lengthAdjust="spacingAndGlyphs">0</text>
<text x="88.7" y="572.5" font-size="13.6" fill="#d8d8d8" text-anchor="middle" stroke="#d8d8d8" stroke-width="0.5" textLength="7.8" lengthAdjust="spacingAndGlyphs">2</text>
<text x="131.9" y="572.5" font-size="13.6" fill="#d8d8d8" text-anchor="middle" stroke="#d8d8d8" stroke-width="0.5" textLength="7.8" lengthAdjust="spacingAndGlyphs">4</text>
<text x="175.1" y="572.5" font-size="13.6" fill="#d8d8d8" text-anchor="middle" stroke="#d8d8d8" stroke-width="0.5" textLength="7.8" lengthAdjust="spacingAndGlyphs">6</text>
<text x="218.3" y="572.5" font-size="13.6" fill="#d8d8d8" text-anchor="middle" stroke="#d8d8d8" stroke-width="0.5" textLength="7.8" lengthAdjust="spacingAndGlyphs">8</text>
<text x="261.5" y="572.5" font-size="13.6" fill="#d8d8d8" text-anchor="middle" stroke="#d8d8d8" stroke-width="0.5" textLength="15.5" lengthAdjust="spacingAndGlyphs">10</text>
<text x="304.7" y="572.5" font-size="13.6" fill="#d8d8d8" text-anchor="middle" stroke="#d8d8d8" stroke-width="0.5" textLength="15.5" lengthAdjust="spacingAndGlyphs">12</text>
<text x="347.9" y="572.5" font-size="13.6" fill="#d8d8d8" text-anchor="middle" stroke="#d8d8d8" stroke-width="0.5" textLength="15.5" lengthAdjust="spacingAndGlyphs">14</text>
<text x="478.5" y="80.5" font-size="13.5" fill="#d0d0d0" text-anchor="middle" stroke="#d0d0d0" stroke-width="0.4" textLength="40" lengthAdjust="spacingAndGlyphs">DeltaL</text>
<text x="408" y="90.7" font-size="14.5" fill="#d8d8d8" text-anchor="end" stroke="#d8d8d8" stroke-width="0.5">4</text>
<text x="408" y="131.325" font-size="14.5" fill="#d8d8d8" text-anchor="end" stroke="#d8d8d8" stroke-width="0.5">3</text>
<text x="408" y="171.95" font-size="14.5" fill="#d8d8d8" text-anchor="end" stroke="#d8d8d8" stroke-width="0.5">2</text>
<text x="408" y="212.575" font-size="14.5" fill="#d8d8d8" text-anchor="end" stroke="#d8d8d8" stroke-width="0.5">1</text>
<text x="408" y="253.2" font-size="14.5" fill="#d8d8d8" text-anchor="end" stroke="#d8d8d8" stroke-width="0.5">0</text>
<text x="408" y="293.825" font-size="14.5" fill="#d8d8d8" text-anchor="end" stroke="#d8d8d8" stroke-width="0.5">-1</text>
<text x="408" y="334.45" font-size="14.5" fill="#d8d8d8" text-anchor="end" stroke="#d8d8d8" stroke-width="0.5">-2</text>
<text x="408" y="375.075" font-size="14.5" fill="#d8d8d8" text-anchor="end" stroke="#d8d8d8" stroke-width="0.5">-3</text>
<text x="408" y="415.7" font-size="14.5" fill="#d8d8d8" text-anchor="end" stroke="#d8d8d8" stroke-width="0.5">-4</text>
<text x="669.5" y="80.5" font-size="13.5" fill="#d0d0d0" text-anchor="middle" stroke="#d0d0d0" stroke-width="0.4" textLength="42.4" lengthAdjust="spacingAndGlyphs">DeltaC</text>
<text x="599" y="90.7" font-size="14.5" fill="#d8d8d8" text-anchor="end" stroke="#d8d8d8" stroke-width="0.5">8</text>
<text x="599" y="131.325" font-size="14.5" fill="#d8d8d8" text-anchor="end" stroke="#d8d8d8" stroke-width="0.5">6</text>
<text x="599" y="171.95" font-size="14.5" fill="#d8d8d8" text-anchor="end" stroke="#d8d8d8" stroke-width="0.5">4</text>
<text x="599" y="212.575" font-size="14.5" fill="#d8d8d8" text-anchor="end" stroke="#d8d8d8" stroke-width="0.5">2</text>
<text x="599" y="253.2" font-size="14.5" fill="#d8d8d8" text-anchor="end" stroke="#d8d8d8" stroke-width="0.5">0</text>
<text x="599" y="293.825" font-size="14.5" fill="#d8d8d8" text-anchor="end" stroke="#d8d8d8" stroke-width="0.5">-2</text>
<text x="599" y="334.45" font-size="14.5" fill="#d8d8d8" text-anchor="end" stroke="#d8d8d8" stroke-width="0.5">-4</text>
<text x="599" y="375.075" font-size="14.5" fill="#d8d8d8" text-anchor="end" stroke="#d8d8d8" stroke-width="0.5">-6</text>
<text x="599" y="415.7" font-size="14.5" fill="#d8d8d8" text-anchor="end" stroke="#d8d8d8" stroke-width="0.5">-8</text>
<text x="860.5" y="80.5" font-size="13.5" fill="#d0d0d0" text-anchor="middle" stroke="#d0d0d0" stroke-width="0.4" textLength="44" lengthAdjust="spacingAndGlyphs">DeltaH</text>
<text x="790" y="90.7" font-size="14.5" fill="#d8d8d8" text-anchor="end" stroke="#d8d8d8" stroke-width="0.5">8</text>
<text x="790" y="131.325" font-size="14.5" fill="#d8d8d8" text-anchor="end" stroke="#d8d8d8" stroke-width="0.5">6</text>
<text x="790" y="171.95" font-size="14.5" fill="#d8d8d8" text-anchor="end" stroke="#d8d8d8" stroke-width="0.5">4</text>
<text x="790" y="212.575" font-size="14.5" fill="#d8d8d8" text-anchor="end" stroke="#d8d8d8" stroke-width="0.5">2</text>
<text x="790" y="253.2" font-size="14.5" fill="#d8d8d8" text-anchor="end" stroke="#d8d8d8" stroke-width="0.5">0</text>
<text x="790" y="293.825" font-size="14.5" fill="#d8d8d8" text-anchor="end" stroke="#d8d8d8" stroke-width="0.5">-2</text>
<text x="790" y="334.45" font-size="14.5" fill="#d8d8d8" text-anchor="end" stroke="#d8d8d8" stroke-width="0.5">-4</text>
<text x="790" y="375.075" font-size="14.5" fill="#d8d8d8" text-anchor="end" stroke="#d8d8d8" stroke-width="0.5">-6</text>
<text x="790" y="415.7" font-size="14.5" fill="#d8d8d8" text-anchor="end" stroke="#d8d8d8" stroke-width="0.5">-8</text>
<text x="434.5" y="558" font-size="12" fill="#fff" font-weight="bold" text-anchor="middle" textLength="32.5" lengthAdjust="spacingAndGlyphs">White</text>
<text x="500.5" y="558" font-size="12" fill="#fff" font-weight="bold" text-anchor="middle" textLength="41.5" lengthAdjust="spacingAndGlyphs">Gray 80</text>
<text x="566.5" y="558" font-size="12" fill="#fff" font-weight="bold" text-anchor="middle" textLength="41.5" lengthAdjust="spacingAndGlyphs">Gray 65</text>
<text x="632.5" y="558" font-size="12" fill="#fff" font-weight="bold" text-anchor="middle" textLength="41.5" lengthAdjust="spacingAndGlyphs">Gray 50</text>
<text x="698.5" y="558" font-size="12" fill="#fff" font-weight="bold" text-anchor="middle" textLength="41.5" lengthAdjust="spacingAndGlyphs">Gray 35</text>
<text x="764.5" y="558" font-size="12" fill="#fff" font-weight="bold" text-anchor="middle" textLength="28.5" lengthAdjust="spacingAndGlyphs">Black</text>
<text x="830.5" y="558" font-size="12" fill="#fff" font-weight="bold" text-anchor="middle" textLength="49" lengthAdjust="spacingAndGlyphs">Dark Skin</text>
<text x="896.5" y="558" font-size="12" fill="#fff" font-weight="bold" text-anchor="middle" textLength="50.5" lengthAdjust="spacingAndGlyphs">Light Skin</text>
<text x="940" y="558" font-size="12" fill="#fff" font-weight="bold" textLength="22" lengthAdjust="spacingAndGlyphs">Blue</text>
<text transform="translate(402,474.5) rotate(-90)" font-size="12" font-weight="bold" fill="#fff" textLength="34" lengthAdjust="spacingAndGlyphs">Actual</text>
<text transform="translate(402,535.5) rotate(-90)" font-size="12" font-weight="bold" fill="#fff" textLength="32" lengthAdjust="spacingAndGlyphs">Target</text>
<path d="M400,584v8l-6,-4z" fill="#444"/><path d="M952,584v8l6,-4z" fill="#444"/>
<text x="1304" y="79.5" font-size="13.5" fill="#d0d0d0" text-anchor="middle" stroke="#d0d0d0" stroke-width="0.4" textLength="82" lengthAdjust="spacingAndGlyphs">CIE 1976 u'v'</text>
<path d="M1276.1,548.4L1276.0,548.4L1276.0,548.4L1275.9,548.4L1275.8,548.5L1275.7,548.6L1275.5,548.5L1275.3,548.5L1275.2,548.6L1275.1,548.8L1275.0,548.9L1274.8,548.9L1274.6,548.9L1274.3,548.9L1274.0,548.9L1273.7,548.9L1273.4,548.9L1273.0,548.8L1272.6,548.7L1272.1,548.5L1271.3,548.1L1270.4,547.5L1269.3,546.8L1268.0,545.9L1266.6,544.8L1265.0,543.6L1263.1,542.1L1261.0,540.4L1258.7,538.4L1256.1,536.2L1253.3,533.8L1250.2,531.3L1246.8,528.4L1243.0,525.3L1238.8,521.7L1234.1,517.9L1229.1,513.8L1223.7,509.3L1217.9,504.3L1211.6,498.7L1204.8,492.4L1197.6,485.5L1189.8,477.4L1181.0,467.6L1170.9,455.7L1159.9,441.8L1148.2,426.1L1135.9,408.8L1123.1,389.5L1109.9,368.7L1096.7,346.7L1083.6,324.2L1071.0,301.2L1059.4,278.4L1049.3,256.2L1040.3,235.1L1032.6,215.3L1026.2,197.2L1021.2,181.1L1017.5,167.0L1014.9,154.6L1013.3,144.0L1012.7,134.8L1013.0,127.0L1014.1,120.2L1016.1,114.4L1018.8,109.5L1022.1,105.6L1026.0,102.5L1030.4,100.3L1035.1,98.7L1040.2,97.6L1045.6,96.9L1051.3,96.5L1057.1,96.3L1062.9,96.2L1068.8,96.2L1074.6,96.3L1080.6,96.5L1086.7,96.8L1093.0,97.1L1099.4,97.5L1106.1,98.0L1113.0,98.6L1120.1,99.2L1127.5,99.9L1135.2,100.7L1143.2,101.5L1151.5,102.4L1160.1,103.3L1169.2,104.3L1178.6,105.3L1188.3,106.4L1198.5,107.5L1209.1,108.7L1220.2,110.0L1231.6,111.3L1243.5,112.7L1255.8,114.1L1268.6,115.6L1281.8,117.1L1295.3,118.6L1309.3,120.2L1323.6,121.9L1338.2,123.5L1353.1,125.3L1368.1,127.0L1383.3,128.7L1398.2,130.5L1412.8,132.1L1427.3,133.8L1441.8,135.5L1456.0,137.1L1469.6,138.7L1482.6,140.1L1495.0,141.6L1506.8,142.9L1518.0,144.2L1528.6,145.4L1538.4,146.6L1547.6,147.6L1556.2,148.6L1564.2,149.5L1571.6,150.4L1578.5,151.2L1585.0,151.9L1591.2,152.6L1597.1,153.3L1602.6,153.9L1607.7,154.5L1612.4,155.1L1616.8,155.6L1620.8,156.0L1624.4,156.4L1627.6,156.8L1630.4,157.1L1633.0,157.4L1635.4,157.7L1637.5,157.9L1639.4,158.2L1641.0,158.4L1642.4,158.5L1643.5,158.6L1644.6,158.8L1645.6,158.9L1646.5,159.0L1647.4,159.1L1648.2,159.2L1648.9,159.3L1649.7,159.4L1650.5,159.4L1651.2,159.5L1651.9,159.6L1652.5,159.7L1652.9,159.7L1653.2,159.8L1653.4,159.8L1653.6,159.8L1653.8,159.8L1653.9,159.8L1654.0,159.8ZM1476.0,146.8L1140.2,115.4L1192.1,436.3Z" fill="#000" fill-opacity="0.37" fill-rule="evenodd" clip-path="url(#pc)"/>
<text x="1011.8" y="582" font-size="14.5" fill="#d8d8d8" text-anchor="middle" stroke="#d8d8d8" stroke-width="0.5">0</text>
<text x="1006" y="567" font-size="14.5" fill="#d8d8d8" text-anchor="end" stroke="#d8d8d8" stroke-width="0.5">0</text>
<text x="1063.35" y="582" font-size="14.5" fill="#d8d8d8" text-anchor="middle" stroke="#d8d8d8" stroke-width="0.5">0,05</text>
<text x="1006" y="527.35" font-size="14.5" fill="#d8d8d8" text-anchor="end" stroke="#d8d8d8" stroke-width="0.5">0,05</text>
<text x="1114.9" y="582" font-size="14.5" fill="#d8d8d8" text-anchor="middle" stroke="#d8d8d8" stroke-width="0.5">0,1</text>
<text x="1006" y="487.7" font-size="14.5" fill="#d8d8d8" text-anchor="end" stroke="#d8d8d8" stroke-width="0.5">0,1</text>
<text x="1166.45" y="582" font-size="14.5" fill="#d8d8d8" text-anchor="middle" stroke="#d8d8d8" stroke-width="0.5">0,15</text>
<text x="1006" y="448.05" font-size="14.5" fill="#d8d8d8" text-anchor="end" stroke="#d8d8d8" stroke-width="0.5">0,15</text>
<text x="1218" y="582" font-size="14.5" fill="#d8d8d8" text-anchor="middle" stroke="#d8d8d8" stroke-width="0.5">0,2</text>
<text x="1006" y="408.4" font-size="14.5" fill="#d8d8d8" text-anchor="end" stroke="#d8d8d8" stroke-width="0.5">0,2</text>
<text x="1269.55" y="582" font-size="14.5" fill="#d8d8d8" text-anchor="middle" stroke="#d8d8d8" stroke-width="0.5">0,25</text>
<text x="1006" y="368.75" font-size="14.5" fill="#d8d8d8" text-anchor="end" stroke="#d8d8d8" stroke-width="0.5">0,25</text>
<text x="1321.1" y="582" font-size="14.5" fill="#d8d8d8" text-anchor="middle" stroke="#d8d8d8" stroke-width="0.5">0,3</text>
<text x="1006" y="329.1" font-size="14.5" fill="#d8d8d8" text-anchor="end" stroke="#d8d8d8" stroke-width="0.5">0,3</text>
<text x="1372.65" y="582" font-size="14.5" fill="#d8d8d8" text-anchor="middle" stroke="#d8d8d8" stroke-width="0.5">0,35</text>
<text x="1006" y="289.45" font-size="14.5" fill="#d8d8d8" text-anchor="end" stroke="#d8d8d8" stroke-width="0.5">0,35</text>
<text x="1424.2" y="582" font-size="14.5" fill="#d8d8d8" text-anchor="middle" stroke="#d8d8d8" stroke-width="0.5">0,4</text>
<text x="1006" y="249.8" font-size="14.5" fill="#d8d8d8" text-anchor="end" stroke="#d8d8d8" stroke-width="0.5">0,4</text>
<text x="1475.75" y="582" font-size="14.5" fill="#d8d8d8" text-anchor="middle" stroke="#d8d8d8" stroke-width="0.5">0,45</text>
<text x="1006" y="210.15" font-size="14.5" fill="#d8d8d8" text-anchor="end" stroke="#d8d8d8" stroke-width="0.5">0,45</text>
<text x="1527.3" y="582" font-size="14.5" fill="#d8d8d8" text-anchor="middle" stroke="#d8d8d8" stroke-width="0.5">0,5</text>
<text x="1006" y="170.5" font-size="14.5" fill="#d8d8d8" text-anchor="end" stroke="#d8d8d8" stroke-width="0.5">0,5</text>
<text x="1578.85" y="582" font-size="14.5" fill="#d8d8d8" text-anchor="middle" stroke="#d8d8d8" stroke-width="0.5">0,55</text>
<text x="1006" y="130.85" font-size="14.5" fill="#d8d8d8" text-anchor="end" stroke="#d8d8d8" stroke-width="0.5">0,55</text>
<rect x="1133.5" y="107.4" width="13" height="13" fill="none" stroke="#fff" stroke-width="1.4" stroke-opacity="0.92"/>
<rect x="1156.9" y="130.8" width="13" height="13" fill="none" stroke="#fff" stroke-width="1.4" stroke-opacity="0.92"/>
<rect x="1194.9" y="123.1" width="13" height="13" fill="none" stroke="#fff" stroke-width="1.4" stroke-opacity="0.92"/>
<rect x="1215.3" y="115.3" width="13" height="13" fill="none" stroke="#fff" stroke-width="1.4" stroke-opacity="0.92"/>
<rect x="1241.5" y="119.0" width="13" height="13" fill="none" stroke="#fff" stroke-width="1.4" stroke-opacity="0.92"/>
<rect x="1271.3" y="125.3" width="13" height="13" fill="none" stroke="#fff" stroke-width="1.4" stroke-opacity="0.92"/>
<rect x="1313.5" y="129.5" width="13" height="13" fill="none" stroke="#fff" stroke-width="1.4" stroke-opacity="0.92"/>
<rect x="1330.2" y="170.5" width="13" height="13" fill="none" stroke="#fff" stroke-width="1.4" stroke-opacity="0.92"/>
<rect x="1147.8" y="192.8" width="13" height="13" fill="none" stroke="#fff" stroke-width="1.4" stroke-opacity="0.92"/>
<rect x="1153.0" y="222.9" width="13" height="13" fill="none" stroke="#fff" stroke-width="1.4" stroke-opacity="0.92"/>
<rect x="1300.5" y="215.5" width="13" height="13" fill="none" stroke="#fff" stroke-width="1.4" stroke-opacity="0.92"/>
<rect x="1240.1" y="242.7" width="13" height="13" fill="none" stroke="#fff" stroke-width="1.4" stroke-opacity="0.92"/>
<rect x="1188.5" y="271.9" width="13" height="13" fill="none" stroke="#fff" stroke-width="1.4" stroke-opacity="0.92"/>
<rect x="1318.9" y="291.2" width="13" height="13" fill="none" stroke="#fff" stroke-width="1.4" stroke-opacity="0.92"/>
<rect x="1188.5" y="318.5" width="13" height="13" fill="none" stroke="#fff" stroke-width="1.4" stroke-opacity="0.92"/>
<rect x="1391.5" y="158.5" width="13" height="13" fill="none" stroke="#fff" stroke-width="1.4" stroke-opacity="0.92"/>
<rect x="1469.0" y="139.1" width="13" height="13" fill="none" stroke="#fff" stroke-width="1.4" stroke-opacity="0.92"/>
<rect x="1185.5" y="429.0" width="13" height="13" fill="none" stroke="#fff" stroke-width="1.4" stroke-opacity="0.92"/>
<rect x="1256.1" y="158.1" width="13" height="13" fill="none" stroke="#fff" stroke-width="1.4" stroke-opacity="0.92"/>
<rect x="1245.0" y="163.5" width="13" height="13" fill="none" stroke="#fff" stroke-width="1.4" stroke-opacity="0.92"/>
<rect x="1185.8" y="220.4" width="13" height="13" fill="none" stroke="#fff" stroke-width="1.4" stroke-opacity="0.92"/>
<rect x="1192.8" y="144.3" width="13" height="13" fill="none" stroke="#fff" stroke-width="1.4" stroke-opacity="0.92"/>
<rect x="1206.1" y="225.7" width="13" height="13" fill="none" stroke="#fff" stroke-width="1.4" stroke-opacity="0.92"/>
<rect x="1163.7" y="175.0" width="13" height="13" fill="none" stroke="#fff" stroke-width="1.4" stroke-opacity="0.92"/>
<circle cx="1146.6" cy="112.8" r="4.2" fill="#20f020" stroke="#000" stroke-width="1.1"/>
<circle cx="1182.0" cy="118.9" r="4.2" fill="#a0a850" stroke="#000" stroke-width="1.1"/>
<circle cx="1242.5" cy="121.6" r="4.2" fill="#e8c030" stroke="#000" stroke-width="1.1"/>
<circle cx="1286.0" cy="125.5" r="4.2" fill="#d8a040" stroke="#000" stroke-width="1.1"/>
<circle cx="1158.4" cy="137.3" r="4.2" fill="#508050" stroke="#000" stroke-width="1.1"/>
<circle cx="1160.4" cy="208.4" r="4.2" fill="#20f0f0" stroke="#000" stroke-width="1.1"/>
<circle cx="1167.3" cy="246.2" r="4.2" fill="#0888a0" stroke="#000" stroke-width="1.1"/>
<circle cx="1308.4" cy="234.9" r="4.2" fill="#b060a0" stroke="#000" stroke-width="1.1"/>
<circle cx="1242.5" cy="278.1" r="4.2" fill="#5c4070" stroke="#000" stroke-width="1.1"/>
<circle cx="1188.5" cy="304.3" r="4.2" fill="#5068b0" stroke="#000" stroke-width="1.1"/>
<circle cx="1301.5" cy="323.5" r="4.2" fill="#ff10f0" stroke="#000" stroke-width="1.1"/>
<circle cx="1351.5" cy="182.3" r="4.2" fill="#b05868" stroke="#000" stroke-width="1.1"/>
<circle cx="1419.0" cy="165.2" r="4.2" fill="#a83840" stroke="#000" stroke-width="1.1"/>
<circle cx="1464.8" cy="141.5" r="4.2" fill="#ff0808" stroke="#000" stroke-width="1.1"/>
<circle cx="1193.0" cy="357.0" r="4.2" fill="#3848a0" stroke="#000" stroke-width="1.1"/>
<circle cx="1197.0" cy="438.0" r="4.2" fill="#0000f0" stroke="#000" stroke-width="1.1"/>
<circle cx="1260.0" cy="163.6" r="4.2" fill="#6a5040" stroke="#000" stroke-width="1.1"/>
<circle cx="1245.9" cy="172.0" r="4.2" fill="#b89080" stroke="#000" stroke-width="1.1"/>
<circle cx="1185.2" cy="241.2" r="4.2" fill="#6080a0" stroke="#000" stroke-width="1.1"/>
<circle cx="1184.4" cy="146.9" r="4.2" fill="#5a7040" stroke="#000" stroke-width="1.1"/>
<circle cx="1203.8" cy="250.1" r="4.2" fill="#8088b0" stroke="#000" stroke-width="1.1"/>
<circle cx="1168.6" cy="191.0" r="4.2" fill="#70b0a0" stroke="#000" stroke-width="1.1"/>
<circle cx="1331.5" cy="131.7" r="4.2" fill="#c88040" stroke="#000" stroke-width="1.1"/>
<circle cx="1231.6" cy="221.3" r="4.6" fill="#000" stroke="#000" stroke-width="1.1"/>
<rect x="1209.0" y="182.6" width="12.5" height="12.5" fill="none" stroke="#000" stroke-width="2.2" stroke-opacity="1"/>
<circle cx="1207.4" cy="196.0" r="4.8" fill="#a8a4a4" stroke="#000" stroke-width="1.1"/>
<circle cx="1210.4" cy="118.5" r="4.2" fill="#ffff10" stroke="#000" stroke-width="1.1"/>
<path d="M1433.5,395.5H1624.5V506.7L1433.5,407.3Z" fill="#000" fill-opacity="0.37"/>
<rect x="1521.5" y="450.0" width="13" height="13" fill="none" stroke="#fff" stroke-width="1.4" stroke-opacity="0.92"/>
<circle cx="1488.6" cy="407.4" r="4.2" fill="#ffff10" stroke="#000" stroke-width="1.1"/>
<text x="1384.5" y="549.7" font-size="19" fill="#f2f2f2" stroke="#f2f2f2" stroke-width="0.4" textLength="205" lengthAdjust="spacingAndGlyphs">RGB Triplet: 255, 255, 0</text>
<text x="75" y="625" font-size="28.5" fill="#f2f2f2" stroke="#f2f2f2" stroke-width="0.5" textLength="226" lengthAdjust="spacingAndGlyphs">Avg dE2000: 4,52</text>
<text x="71" y="665.3" font-size="28.5" fill="#f2f2f2" stroke="#f2f2f2" stroke-width="0.5" textLength="235" lengthAdjust="spacingAndGlyphs">Max dE2000: 8,86</text>
<text x="41" y="711.5" font-size="29.5" fill="#f2f2f2" stroke="#f2f2f2" stroke-width="0.5" textLength="212" lengthAdjust="spacingAndGlyphs">Current Reading</text>
<text x="41" y="745.5" font-size="23.5" fill="#f2f2f2" stroke="#f2f2f2" stroke-width="0.5" textLength="99" lengthAdjust="spacingAndGlyphs">x: 0,4091</text>
<text x="192" y="745.5" font-size="23.5" fill="#f2f2f2" stroke="#f2f2f2" stroke-width="0.5" textLength="100" lengthAdjust="spacingAndGlyphs">y: 0,5245</text>
<text x="41" y="785.5" font-size="23.5" fill="#f2f2f2" stroke="#f2f2f2" stroke-width="0.5" textLength="107" lengthAdjust="spacingAndGlyphs">fL: 148,92</text>
<text x="41" y="818.5" font-size="23.5" fill="#f2f2f2" stroke="#f2f2f2" stroke-width="0.5" textLength="154" lengthAdjust="spacingAndGlyphs">cd/m²: 510,24</text>
<g clip-path="url(#tc)">
<text x="487" y="628.5" font-size="14.8" fill="#f8f8f8" textLength="46" lengthAdjust="spacingAndGlyphs" stroke="#f8f8f8" stroke-width="0.45">White</text>
<text x="573.5" y="628.5" font-size="14.8" fill="#f8f8f8" textLength="59" lengthAdjust="spacingAndGlyphs" stroke="#f8f8f8" stroke-width="0.45">Gray 80</text>
<text x="660" y="628.5" font-size="14.8" fill="#f8f8f8" textLength="59" lengthAdjust="spacingAndGlyphs" stroke="#f8f8f8" stroke-width="0.45">Gray 65</text>
<text x="746.5" y="628.5" font-size="14.8" fill="#f8f8f8" textLength="59" lengthAdjust="spacingAndGlyphs" stroke="#f8f8f8" stroke-width="0.45">Gray 50</text>
<text x="834" y="628.5" font-size="14.8" fill="#f8f8f8" textLength="59" lengthAdjust="spacingAndGlyphs" stroke="#f8f8f8" stroke-width="0.45">Gray 35</text>
<text x="921" y="628.5" font-size="14.8" fill="#f8f8f8" textLength="40" lengthAdjust="spacingAndGlyphs" stroke="#f8f8f8" stroke-width="0.45">Black</text>
<text x="987.5" y="628.5" font-size="14.8" fill="#f8f8f8" textLength="70.5" lengthAdjust="spacingAndGlyphs" stroke="#f8f8f8" stroke-width="0.45">Dark Skin</text>
<text x="1069" y="628.5" font-size="14.8" fill="#f8f8f8" textLength="72.5" lengthAdjust="spacingAndGlyphs" stroke="#f8f8f8" stroke-width="0.45">Light Skin</text>
<text x="1155.5" y="628.5" font-size="14.8" fill="#f8f8f8" textLength="64" lengthAdjust="spacingAndGlyphs" stroke="#f8f8f8" stroke-width="0.45">Blue Sky</text>
<text x="1243" y="628.5" font-size="14.8" fill="#f8f8f8" textLength="54" lengthAdjust="spacingAndGlyphs" stroke="#f8f8f8" stroke-width="0.45">Foliage</text>
<text x="1319.5" y="628.5" font-size="14.8" fill="#f8f8f8" textLength="90" lengthAdjust="spacingAndGlyphs" stroke="#f8f8f8" stroke-width="0.45">Blue Flower</text>
<text x="1420" y="628.5" font-size="14.8" fill="#f8f8f8" textLength="97" lengthAdjust="spacingAndGlyphs" stroke="#f8f8f8" stroke-width="0.45">Bluish Green</text>
<text x="1527" y="628.5" font-size="14.8" fill="#f8f8f8" textLength="55" lengthAdjust="spacingAndGlyphs" stroke="#f8f8f8" stroke-width="0.45">Orange</text>
<text x="1614" y="628.5" font-size="14.8" fill="#f8f8f8" textLength="80" lengthAdjust="spacingAndGlyphs" stroke="#f8f8f8" stroke-width="0.45">Purplish Blue</text>
<text x="359" y="656" font-size="16.1" fill="#ececec" textLength="63" lengthAdjust="spacingAndGlyphs">x: CIE31</text>
<text x="487" y="656" font-size="16.1" fill="#ececec" textLength="54.6" lengthAdjust="spacingAndGlyphs">0,2967</text>
<text x="573.5" y="656" font-size="16.1" fill="#ececec" textLength="54.6" lengthAdjust="spacingAndGlyphs">0,2957</text>
<text x="660" y="656" font-size="16.1" fill="#ececec" textLength="54.6" lengthAdjust="spacingAndGlyphs">0,2953</text>
<text x="746.5" y="656" font-size="16.1" fill="#ececec" textLength="54.6" lengthAdjust="spacingAndGlyphs">0,2950</text>
<text x="834" y="656" font-size="16.1" fill="#ececec" textLength="54.6" lengthAdjust="spacingAndGlyphs">0,2948</text>
<text x="921" y="656" font-size="16.1" fill="#ececec" textLength="54.6" lengthAdjust="spacingAndGlyphs">0,2984</text>
<text x="987.5" y="656" font-size="16.1" fill="#ececec" textLength="54.6" lengthAdjust="spacingAndGlyphs">0,3987</text>
<text x="1069" y="656" font-size="16.1" fill="#ececec" textLength="54.6" lengthAdjust="spacingAndGlyphs">0,3702</text>
<text x="1155.5" y="656" font-size="16.1" fill="#ececec" textLength="54.6" lengthAdjust="spacingAndGlyphs">0,2309</text>
<text x="1243" y="656" font-size="16.1" fill="#ececec" textLength="54.6" lengthAdjust="spacingAndGlyphs">0,3237</text>
<text x="1319.5" y="656" font-size="16.1" fill="#ececec" textLength="54.6" lengthAdjust="spacingAndGlyphs">0,2448</text>
<text x="1420" y="656" font-size="16.1" fill="#ececec" textLength="54.6" lengthAdjust="spacingAndGlyphs">0,2512</text>
<text x="1527" y="656" font-size="16.1" fill="#ececec" textLength="54.6" lengthAdjust="spacingAndGlyphs">0,5357</text>
<text x="1614" y="656" font-size="16.1" fill="#ececec" textLength="54.6" lengthAdjust="spacingAndGlyphs">0,1961</text>
<text x="359" y="681" font-size="16.1" fill="#ececec" textLength="63" lengthAdjust="spacingAndGlyphs">y: CIE31</text>
<text x="487" y="681" font-size="16.1" fill="#ececec" textLength="54.6" lengthAdjust="spacingAndGlyphs">0,3174</text>
<text x="573.5" y="681" font-size="16.1" fill="#ececec" textLength="54.6" lengthAdjust="spacingAndGlyphs">0,3168</text>
<text x="660" y="681" font-size="16.1" fill="#ececec" textLength="54.6" lengthAdjust="spacingAndGlyphs">0,3170</text>
<text x="746.5" y="681" font-size="16.1" fill="#ececec" textLength="54.6" lengthAdjust="spacingAndGlyphs">0,3175</text>
<text x="834" y="681" font-size="16.1" fill="#ececec" textLength="54.6" lengthAdjust="spacingAndGlyphs">0,3182</text>
<text x="921" y="681" font-size="16.1" fill="#ececec" textLength="54.6" lengthAdjust="spacingAndGlyphs">0,2652</text>
<text x="987.5" y="681" font-size="16.1" fill="#ececec" textLength="54.6" lengthAdjust="spacingAndGlyphs">0,3675</text>
<text x="1069" y="681" font-size="16.1" fill="#ececec" textLength="54.6" lengthAdjust="spacingAndGlyphs">0,3539</text>
<text x="1155.5" y="681" font-size="16.1" fill="#ececec" textLength="54.6" lengthAdjust="spacingAndGlyphs">0,2447</text>
<text x="1243" y="681" font-size="16.1" fill="#ececec" textLength="54.6" lengthAdjust="spacingAndGlyphs">0,4466</text>
<text x="1319.5" y="681" font-size="16.1" fill="#ececec" textLength="54.6" lengthAdjust="spacingAndGlyphs">0,2279</text>
<text x="1420" y="681" font-size="16.1" fill="#ececec" textLength="54.6" lengthAdjust="spacingAndGlyphs">0,3406</text>
<text x="1527" y="681" font-size="16.1" fill="#ececec" textLength="54.6" lengthAdjust="spacingAndGlyphs">0,4143</text>
<text x="1614" y="681" font-size="16.1" fill="#ececec" textLength="54.6" lengthAdjust="spacingAndGlyphs">0,1669</text>
<text x="359" y="705.5" font-size="16.1" fill="#ececec" textLength="9.5" lengthAdjust="spacingAndGlyphs">Y</text>
<text x="487" y="705.5" font-size="16.1" fill="#ececec" textLength="74.8" lengthAdjust="spacingAndGlyphs">560,0888</text>
<text x="573.5" y="705.5" font-size="16.1" fill="#ececec" textLength="74.8" lengthAdjust="spacingAndGlyphs">440,9132</text>
<text x="660" y="705.5" font-size="16.1" fill="#ececec" textLength="74.8" lengthAdjust="spacingAndGlyphs">357,5535</text>
<text x="746.5" y="705.5" font-size="16.1" fill="#ececec" textLength="74.8" lengthAdjust="spacingAndGlyphs">277,5865</text>
<text x="834" y="705.5" font-size="16.1" fill="#ececec" textLength="74.8" lengthAdjust="spacingAndGlyphs">193,6025</text>
<text x="921" y="705.5" font-size="16.1" fill="#ececec" textLength="54.6" lengthAdjust="spacingAndGlyphs">0,5298</text>
<text x="987.5" y="705.5" font-size="16.1" fill="#ececec" textLength="64.7" lengthAdjust="spacingAndGlyphs">53,9994</text>
<text x="1069" y="705.5" font-size="16.1" fill="#ececec" textLength="74.8" lengthAdjust="spacingAndGlyphs">188,9389</text>
<text x="1155.5" y="705.5" font-size="16.1" fill="#ececec" textLength="74.8" lengthAdjust="spacingAndGlyphs">113,4670</text>
<text x="1243" y="705.5" font-size="16.1" fill="#ececec" textLength="64.7" lengthAdjust="spacingAndGlyphs">77,8624</text>
<text x="1319.5" y="705.5" font-size="16.1" fill="#ececec" textLength="74.8" lengthAdjust="spacingAndGlyphs">134,6611</text>
<text x="1420" y="705.5" font-size="16.1" fill="#ececec" textLength="74.8" lengthAdjust="spacingAndGlyphs">252,9987</text>
<text x="1527" y="705.5" font-size="16.1" fill="#ececec" textLength="74.8" lengthAdjust="spacingAndGlyphs">153,7261</text>
<text x="1614" y="705.5" font-size="16.1" fill="#ececec" textLength="64.7" lengthAdjust="spacingAndGlyphs">73,2154</text>
<text x="359" y="730" font-size="16.1" fill="#ececec" textLength="115" lengthAdjust="spacingAndGlyphs">Target x:CIE31</text>
<text x="487" y="730" font-size="16.1" fill="#ececec" textLength="54.6" lengthAdjust="spacingAndGlyphs">0,3127</text>
<text x="573.5" y="730" font-size="16.1" fill="#ececec" textLength="54.6" lengthAdjust="spacingAndGlyphs">0,3127</text>
<text x="660" y="730" font-size="16.1" fill="#ececec" textLength="54.6" lengthAdjust="spacingAndGlyphs">0,3127</text>
<text x="746.5" y="730" font-size="16.1" fill="#ececec" textLength="54.6" lengthAdjust="spacingAndGlyphs">0,3127</text>
<text x="834" y="730" font-size="16.1" fill="#ececec" textLength="54.6" lengthAdjust="spacingAndGlyphs">0,3127</text>
<text x="921" y="730" font-size="16.1" fill="#ececec" textLength="54.6" lengthAdjust="spacingAndGlyphs">0,3127</text>
<text x="987.5" y="730" font-size="16.1" fill="#ececec" textLength="54.6" lengthAdjust="spacingAndGlyphs">0,4003</text>
<text x="1069" y="730" font-size="16.1" fill="#ececec" textLength="54.6" lengthAdjust="spacingAndGlyphs">0,3795</text>
<text x="1155.5" y="730" font-size="16.1" fill="#ececec" textLength="54.6" lengthAdjust="spacingAndGlyphs">0,2496</text>
<text x="1243" y="730" font-size="16.1" fill="#ececec" textLength="54.6" lengthAdjust="spacingAndGlyphs">0,3395</text>
<text x="1319.5" y="730" font-size="16.1" fill="#ececec" textLength="54.6" lengthAdjust="spacingAndGlyphs">0,2681</text>
<text x="1420" y="730" font-size="16.1" fill="#ececec" textLength="54.6" lengthAdjust="spacingAndGlyphs">0,2626</text>
<text x="1527" y="730" font-size="16.1" fill="#ececec" textLength="54.6" lengthAdjust="spacingAndGlyphs">0,5122</text>
<text x="1614" y="730" font-size="16.1" fill="#ececec" textLength="54.6" lengthAdjust="spacingAndGlyphs">0,2138</text>
<text x="359" y="755" font-size="16.1" fill="#ececec" textLength="115" lengthAdjust="spacingAndGlyphs">Target y:CIE31</text>
<text x="487" y="755" font-size="16.1" fill="#ececec" textLength="54.6" lengthAdjust="spacingAndGlyphs">0,3290</text>
<text x="573.5" y="755" font-size="16.1" fill="#ececec" textLength="54.6" lengthAdjust="spacingAndGlyphs">0,3290</text>
<text x="660" y="755" font-size="16.1" fill="#ececec" textLength="54.6" lengthAdjust="spacingAndGlyphs">0,3290</text>
<text x="746.5" y="755" font-size="16.1" fill="#ececec" textLength="54.6" lengthAdjust="spacingAndGlyphs">0,3290</text>
<text x="834" y="755" font-size="16.1" fill="#ececec" textLength="54.6" lengthAdjust="spacingAndGlyphs">0,3290</text>
<text x="921" y="755" font-size="16.1" fill="#ececec" textLength="54.6" lengthAdjust="spacingAndGlyphs">0,3290</text>
<text x="987.5" y="755" font-size="16.1" fill="#ececec" textLength="54.6" lengthAdjust="spacingAndGlyphs">0,3642</text>
<text x="1069" y="755" font-size="16.1" fill="#ececec" textLength="54.6" lengthAdjust="spacingAndGlyphs">0,3562</text>
<text x="1155.5" y="755" font-size="16.1" fill="#ececec" textLength="54.6" lengthAdjust="spacingAndGlyphs">0,2656</text>
<text x="1243" y="755" font-size="16.1" fill="#ececec" textLength="54.6" lengthAdjust="spacingAndGlyphs">0,4271</text>
<text x="1319.5" y="755" font-size="16.1" fill="#ececec" textLength="54.6" lengthAdjust="spacingAndGlyphs">0,2525</text>
<text x="1420" y="755" font-size="16.1" fill="#ececec" textLength="54.6" lengthAdjust="spacingAndGlyphs">0,3616</text>
<text x="1527" y="755" font-size="16.1" fill="#ececec" textLength="54.6" lengthAdjust="spacingAndGlyphs">0,4063</text>
<text x="1614" y="755" font-size="16.1" fill="#ececec" textLength="54.6" lengthAdjust="spacingAndGlyphs">0,1921</text>
<text x="359" y="780" font-size="16.1" fill="#ececec" textLength="67" lengthAdjust="spacingAndGlyphs">Target Y</text>
<text x="487" y="780" font-size="16.1" fill="#ececec" textLength="74.8" lengthAdjust="spacingAndGlyphs">560,0888</text>
<text x="573.5" y="780" font-size="16.1" fill="#ececec" textLength="74.8" lengthAdjust="spacingAndGlyphs">443,1971</text>
<text x="660" y="780" font-size="16.1" fill="#ececec" textLength="74.8" lengthAdjust="spacingAndGlyphs">357,1109</text>
<text x="746.5" y="780" font-size="16.1" fill="#ececec" textLength="74.8" lengthAdjust="spacingAndGlyphs">275,0153</text>
<text x="834" y="780" font-size="16.1" fill="#ececec" textLength="74.8" lengthAdjust="spacingAndGlyphs">191,5024</text>
<text x="921" y="780" font-size="16.1" fill="#ececec" textLength="54.6" lengthAdjust="spacingAndGlyphs">0,0000</text>
<text x="987.5" y="780" font-size="16.1" fill="#ececec" textLength="64.7" lengthAdjust="spacingAndGlyphs">56,4194</text>
<text x="1069" y="780" font-size="16.1" fill="#ececec" textLength="74.8" lengthAdjust="spacingAndGlyphs">195,4439</text>
<text x="1155.5" y="780" font-size="16.1" fill="#ececec" textLength="74.8" lengthAdjust="spacingAndGlyphs">104,7276</text>
<text x="1243" y="780" font-size="16.1" fill="#ececec" textLength="64.7" lengthAdjust="spacingAndGlyphs">72,9933</text>
<text x="1319.5" y="780" font-size="16.1" fill="#ececec" textLength="74.8" lengthAdjust="spacingAndGlyphs">130,6042</text>
<text x="1420" y="780" font-size="16.1" fill="#ececec" textLength="74.8" lengthAdjust="spacingAndGlyphs">234,5261</text>
<text x="1527" y="780" font-size="16.1" fill="#ececec" textLength="74.8" lengthAdjust="spacingAndGlyphs">158,7730</text>
<text x="1614" y="780" font-size="16.1" fill="#ececec" textLength="64.7" lengthAdjust="spacingAndGlyphs">65,8102</text>
<text x="359" y="805" font-size="16.1" fill="#ececec" textLength="67.5" lengthAdjust="spacingAndGlyphs">ΔE 2000</text>
<text x="487" y="805" font-size="16.1" fill="#ececec" textLength="54.6" lengthAdjust="spacingAndGlyphs">7,1609</text>
<text x="573.5" y="805" font-size="16.1" fill="#ececec" textLength="54.6" lengthAdjust="spacingAndGlyphs">7,0789</text>
<text x="660" y="805" font-size="16.1" fill="#ececec" textLength="54.6" lengthAdjust="spacingAndGlyphs">6,8181</text>
<text x="746.5" y="805" font-size="16.1" fill="#ececec" textLength="54.6" lengthAdjust="spacingAndGlyphs">6,4866</text>
<text x="834" y="805" font-size="16.1" fill="#ececec" textLength="54.6" lengthAdjust="spacingAndGlyphs">5,9873</text>
<text x="921" y="805" font-size="16.1" fill="#ececec" textLength="54.6" lengthAdjust="spacingAndGlyphs">1,3232</text>
<text x="987.5" y="805" font-size="16.1" fill="#ececec" textLength="54.6" lengthAdjust="spacingAndGlyphs">1,3652</text>
<text x="1069" y="805" font-size="16.1" fill="#ececec" textLength="54.6" lengthAdjust="spacingAndGlyphs">2,0456</text>
<text x="1155.5" y="805" font-size="16.1" fill="#ececec" textLength="54.6" lengthAdjust="spacingAndGlyphs">3,9295</text>
<text x="1243" y="805" font-size="16.1" fill="#ececec" textLength="54.6" lengthAdjust="spacingAndGlyphs">4,4511</text>
<text x="1319.5" y="805" font-size="16.1" fill="#ececec" textLength="54.6" lengthAdjust="spacingAndGlyphs">5,7648</text>
<text x="1420" y="805" font-size="16.1" fill="#ececec" textLength="54.6" lengthAdjust="spacingAndGlyphs">5,2484</text>
<text x="1527" y="805" font-size="16.1" fill="#ececec" textLength="54.6" lengthAdjust="spacingAndGlyphs">3,2121</text>
<text x="1614" y="805" font-size="16.1" fill="#ececec" textLength="54.6" lengthAdjust="spacingAndGlyphs">4,2937</text>
</g>
<path d="M364,814.5v8l-6,-4z" fill="#444"/><path d="M1628,814.5v8l6,-4z" fill="#444"/>
<g clip-path="url(#bc)">
<text x="-25.1" y="873" font-size="13" fill="#2c2c2c" font-weight="bold" textLength="28.5" lengthAdjust="spacingAndGlyphs">Blue</text>
<text x="-25.1" y="888" font-size="13" fill="#2c2c2c" font-weight="bold" textLength="41" lengthAdjust="spacingAndGlyphs">Flower</text>
<text x="41.65" y="873" font-size="13" fill="#2c2c2c" font-weight="bold" textLength="37.5" lengthAdjust="spacingAndGlyphs">Bluish</text>
<text x="41.65" y="888" font-size="13" fill="#2c2c2c" font-weight="bold" textLength="37.5" lengthAdjust="spacingAndGlyphs">Green</text>
<text x="125.4" y="888" font-size="13" fill="#2c2c2c" font-weight="bold" text-anchor="middle" textLength="44.5" lengthAdjust="spacingAndGlyphs">Orange</text>
<text x="165.4" y="873" font-size="13" fill="#2c2c2c" font-weight="bold" textLength="50" lengthAdjust="spacingAndGlyphs">Purplish</text>
<text x="165.4" y="888" font-size="13" fill="#2c2c2c" font-weight="bold" textLength="28.5" lengthAdjust="spacingAndGlyphs">Blue</text>
<text x="225.4" y="873" font-size="13" fill="#2c2c2c" font-weight="bold" textLength="60" lengthAdjust="spacingAndGlyphs">Moderate</text>
<text x="225.4" y="888" font-size="13" fill="#2c2c2c" font-weight="bold" textLength="23" lengthAdjust="spacingAndGlyphs">Red</text>
<text x="320.4" y="888" font-size="13" fill="#2c2c2c" font-weight="bold" text-anchor="middle" textLength="40" lengthAdjust="spacingAndGlyphs">Purple</text>
<text x="365.15" y="873" font-size="13" fill="#2c2c2c" font-weight="bold" textLength="40.5" lengthAdjust="spacingAndGlyphs">Yellow</text>
<text x="365.15" y="888" font-size="13" fill="#2c2c2c" font-weight="bold" textLength="37.5" lengthAdjust="spacingAndGlyphs">Green</text>
<text x="428.15" y="873" font-size="13" fill="#2c2c2c" font-weight="bold" textLength="44.5" lengthAdjust="spacingAndGlyphs">Orange</text>
<text x="428.15" y="888" font-size="13" fill="#2c2c2c" font-weight="bold" textLength="40.5" lengthAdjust="spacingAndGlyphs">Yellow</text>
<text x="515.4" y="888" font-size="13" fill="#2c2c2c" font-weight="bold" text-anchor="middle" textLength="28.5" lengthAdjust="spacingAndGlyphs">Blue</text>
<text x="580.4" y="888" font-size="13" fill="#2c2c2c" font-weight="bold" text-anchor="middle" textLength="37.5" lengthAdjust="spacingAndGlyphs">Green</text>
<text x="645.4" y="888" font-size="13" fill="#2c2c2c" font-weight="bold" text-anchor="middle" textLength="23" lengthAdjust="spacingAndGlyphs">Red</text>
<text x="710.4" y="888" font-size="13" fill="#2c2c2c" font-weight="bold" text-anchor="middle" textLength="40.5" lengthAdjust="spacingAndGlyphs">Yellow</text>
<text x="775.4" y="888" font-size="13" fill="#2c2c2c" font-weight="bold" text-anchor="middle" textLength="55" lengthAdjust="spacingAndGlyphs">Magenta</text>
<text x="840.4" y="888" font-size="13" fill="#2c2c2c" font-weight="bold" text-anchor="middle" textLength="29" lengthAdjust="spacingAndGlyphs">Cyan</text>
<text x="905.4" y="888" font-size="13" fill="#2c2c2c" font-weight="bold" text-anchor="middle" textLength="60" lengthAdjust="spacingAndGlyphs">100% Red</text>
<text x="951.65" y="873" font-size="13" fill="#2c2c2c" font-weight="bold" textLength="31" lengthAdjust="spacingAndGlyphs">100%</text>
<text x="951.65" y="888" font-size="13" fill="#2c2c2c" font-weight="bold" textLength="37.5" lengthAdjust="spacingAndGlyphs">Green</text>
<text x="1019.9" y="873" font-size="13" fill="#2c2c2c" font-weight="bold" textLength="31" lengthAdjust="spacingAndGlyphs">100%</text>
<text x="1019.9" y="888" font-size="13" fill="#2c2c2c" font-weight="bold" textLength="28.5" lengthAdjust="spacingAndGlyphs">Blue</text>
<text x="1084.9" y="873" font-size="13" fill="#2c2c2c" font-weight="bold" textLength="31" lengthAdjust="spacingAndGlyphs">100%</text>
<text x="1084.9" y="888" font-size="13" fill="#2c2c2c" font-weight="bold" textLength="29" lengthAdjust="spacingAndGlyphs">Cyan</text>
<text x="1137.9" y="873" font-size="13" fill="#2c2c2c" font-weight="bold" textLength="31" lengthAdjust="spacingAndGlyphs">100%</text>
<text x="1137.9" y="888" font-size="13" fill="#2c2c2c" font-weight="bold" textLength="55" lengthAdjust="spacingAndGlyphs">Magenta</text>
<text x="1210.15" y="873" font-size="13" fill="#fff" font-weight="bold" textLength="31" lengthAdjust="spacingAndGlyphs">100%</text>
<text x="1210.15" y="888" font-size="13" fill="#fff" font-weight="bold" textLength="40.5" lengthAdjust="spacingAndGlyphs">Yellow</text>
</g>
<path d="M10,896.5v8l-6,-4z" fill="#444"/><path d="M1254,896.5v8l6,-4z" fill="#444"/>
<path d="M1296,839.5l6,7h-12z" fill="#333"/>
<rect x="1350" y="846" width="10" height="10" fill="#3a3a3a"/>
<path d="M1408,845v12l10,-6z" fill="#3a3a3a"/>
<text x="1468.5" y="855.5" font-size="13" fill="#3a3a3a" font-weight="bold" text-anchor="middle" stroke="#3a3a3a" stroke-width="0.6" textLength="17" lengthAdjust="spacingAndGlyphs">[··]</text>
<text x="1525.5" y="856.5" font-size="18" fill="#3a3a3a" font-weight="bold" text-anchor="middle" stroke="#3a3a3a" stroke-width="0.4" textLength="16" lengthAdjust="spacingAndGlyphs">∞</text>
<path d="M1576.5,849a5.5,5.5 0 0 1 9.5,-2.5M1586.5,853a5.5,5.5 0 0 1 -9.5,2.5" fill="none" stroke="#1c1c1c" stroke-width="2.4"/><path d="M1588,843v5.5h-5.5zM1575,859v-5.5h5.5z" fill="#1c1c1c"/>
<text x="1365" y="897" font-size="23" fill="#3a3a3a" text-anchor="middle" stroke="#3a3a3a" stroke-width="0.9" textLength="13" lengthAdjust="spacingAndGlyphs">«</text>
<text x="1632" y="897" font-size="23" fill="#3a3a3a" text-anchor="middle" stroke="#3a3a3a" stroke-width="0.9" textLength="13" lengthAdjust="spacingAndGlyphs">»</text>
<text x="1399" y="900" font-size="29.5" fill="#3a3a3a" textLength="62" lengthAdjust="spacingAndGlyphs" class="bl" stroke="#3a3a3a" stroke-width="1.1">Back</text>
<text x="1532.5" y="900" font-size="29.5" fill="#3a3a3a" textLength="64" lengthAdjust="spacingAndGlyphs" class="bl" stroke="#3a3a3a" stroke-width="1.1">Next</text>
<rect x="46.5" y="191.5" width="324" height="360" fill="none" stroke="#9c9c9c" stroke-width="1.7"/>
<rect x="413.5" y="86.5" width="148" height="325" fill="none" stroke="#9c9c9c" stroke-width="1.7"/>
<rect x="604.5" y="86.5" width="148" height="325" fill="none" stroke="#9c9c9c" stroke-width="1.7"/>
<rect x="795.5" y="86.5" width="148" height="325" fill="none" stroke="#9c9c9c" stroke-width="1.7"/>
<rect x="1011.5" y="85.5" width="620" height="476" fill="none" stroke="#9c9c9c" stroke-width="1.7"/>
</svg>
</body></html>
